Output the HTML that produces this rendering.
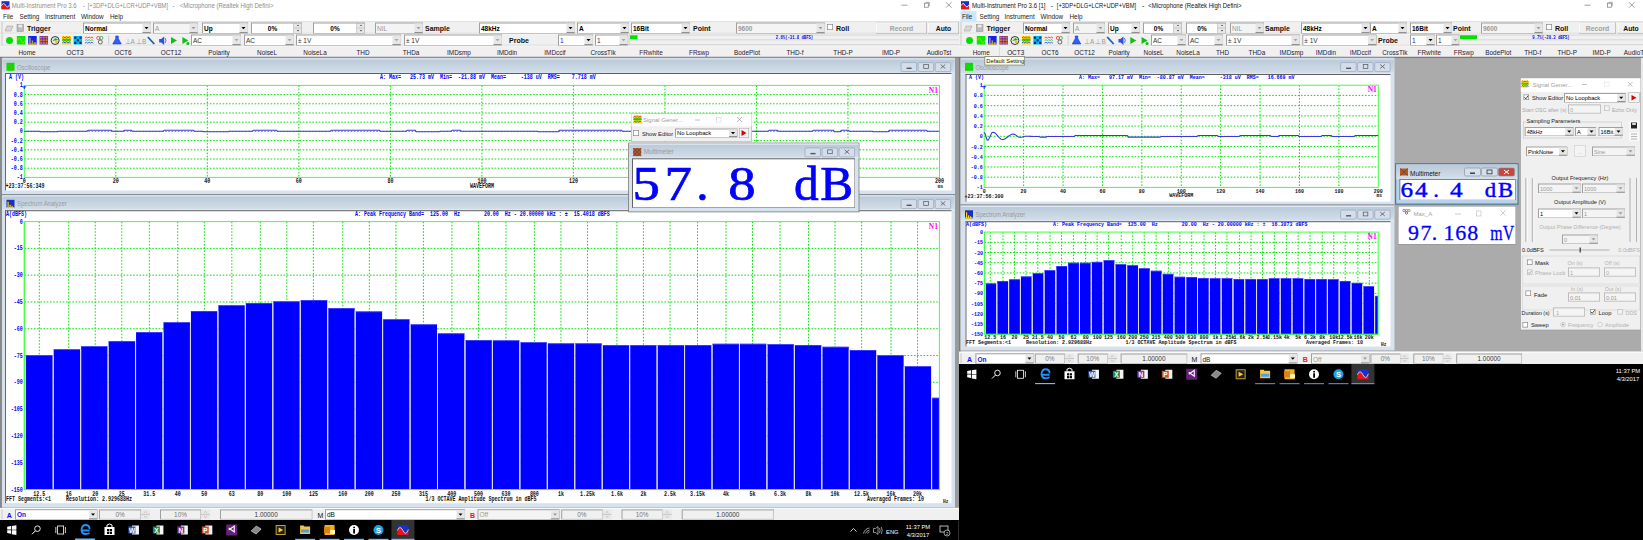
<!DOCTYPE html><html><head><meta charset="utf-8"><style>html,body{margin:0;padding:0;background:#000;overflow:hidden}svg{display:block}</style></head><body>
<svg width="1643" height="540" viewBox="0 0 1643 540">
<defs><linearGradient id="mdit" x1="0" y1="0" x2="0" y2="1"><stop offset="0" stop-color="#b9c8d7"/><stop offset="1" stop-color="#d4e0eb"/></linearGradient></defs>
<rect x="0.00" y="0.00" width="960.00" height="540.00" fill="#f0f0f0" />
<rect x="0.00" y="0.00" width="960.00" height="10.50" fill="#ffffff" />
<rect x="1.50" y="1.20" width="8.00" height="8.00" fill="#1a2fd0" />
<path d="M1.5 5.6000000000000005 Q3.5 1.6 5.5 5.2 T9.5 4.8 V9.2 H1.5 Z" fill="#e8141c"/>
<path d="M1.5 5.6000000000000005 Q3.5 1.6 5.5 5.2 T9.5 4.8" fill="none" stroke="#fff" stroke-width="0.8"/>
<text x="11.70" y="8.30" font-family='"Liberation Sans", sans-serif' font-size="7.2" fill="#8c8c8c" font-weight="normal" text-anchor="start" style="white-space:pre" textLength="65" lengthAdjust="spacingAndGlyphs">Multi-Instrument Pro 3.6</text>
<text x="82.70" y="8.30" font-family='"Liberation Sans", sans-serif' font-size="7.2" fill="#8c8c8c" font-weight="normal" text-anchor="start" style="white-space:pre" >-</text>
<text x="87.70" y="8.30" font-family='"Liberation Sans", sans-serif' font-size="7.2" fill="#8c8c8c" font-weight="normal" text-anchor="start" style="white-space:pre" textLength="80.4" lengthAdjust="spacingAndGlyphs">[+3DP+DLG+LCR+UDP+VBM]</text>
<text x="172.50" y="8.30" font-family='"Liberation Sans", sans-serif' font-size="7.2" fill="#8c8c8c" font-weight="normal" text-anchor="start" style="white-space:pre" >-</text>
<text x="179.80" y="8.30" font-family='"Liberation Sans", sans-serif' font-size="7.2" fill="#8c8c8c" font-weight="normal" text-anchor="start" style="white-space:pre" textLength="93.6" lengthAdjust="spacingAndGlyphs">&lt;Microphone (Realtek High Defini&gt;</text>
<line x1="901.50" y1="5.20" x2="907.50" y2="5.20" stroke="#777" stroke-width="0.7"/>
<rect x="924.50" y="3.20" width="3.8" height="4" fill="none" stroke="#777" stroke-width="0.7"/>
<path d="M925.50 2.3 h3.8 v3.8" fill="none" stroke="#777" stroke-width="0.6"/>
<path d="M946.00 2.2 l5.5 5.5 M951.50 2.2 l-5.5 5.5" stroke="#777" stroke-width="0.7"/>
<rect x="0.00" y="10.50" width="960.00" height="10.70" fill="#ffffff" />
<text x="3.00" y="18.60" font-family='"Liberation Sans", sans-serif' font-size="6.4" fill="#222" font-weight="normal" text-anchor="start" style="white-space:pre" >File</text>
<text x="19.50" y="18.60" font-family='"Liberation Sans", sans-serif' font-size="6.4" fill="#222" font-weight="normal" text-anchor="start" style="white-space:pre" >Setting</text>
<text x="45.00" y="18.60" font-family='"Liberation Sans", sans-serif' font-size="6.4" fill="#222" font-weight="normal" text-anchor="start" style="white-space:pre" >Instrument</text>
<text x="81.00" y="18.60" font-family='"Liberation Sans", sans-serif' font-size="6.4" fill="#222" font-weight="normal" text-anchor="start" style="white-space:pre" >Window</text>
<text x="110.00" y="18.60" font-family='"Liberation Sans", sans-serif' font-size="6.4" fill="#222" font-weight="normal" text-anchor="start" style="white-space:pre" >Help</text>
<rect x="0.00" y="21.20" width="960.00" height="36.00" fill="#f0f0f0" />
<line x1="0.00" y1="21.60" x2="960.00" y2="21.60" stroke="#dcdcdc" stroke-width="0.8"/>
<line x1="0.00" y1="33.80" x2="960.00" y2="33.80" stroke="#ffffff" stroke-width="0.8"/>
<line x1="0.00" y1="33.20" x2="960.00" y2="33.20" stroke="#d0d0d0" stroke-width="0.6"/>
<line x1="0.00" y1="45.80" x2="960.00" y2="45.80" stroke="#ffffff" stroke-width="0.8"/>
<line x1="0.00" y1="45.20" x2="960.00" y2="45.20" stroke="#d0d0d0" stroke-width="0.6"/>
<line x1="2.00" y1="22.00" x2="2.00" y2="45.00" stroke="#c0c0c0" stroke-width="0.8"/>
<path d="M5.00 31 l2 -5 h6 l-2 5 z" fill="#d8d8d8" stroke="#999" stroke-width="0.5"/>
<rect x="17.00" y="24.5" width="6.5" height="7" fill="#bbb" stroke="#888" stroke-width="0.5"/>
<rect x="18.50" y="24.80" width="3.50" height="2.50" fill="#eee" />
<text x="27.00" y="31.20" font-family='"Liberation Sans", sans-serif' font-size="7" fill="#111" font-weight="bold" text-anchor="start" style="white-space:pre" >Trigger</text>
<rect x="83.00" y="22.50" width="68.00" height="11.00" fill="#a0a0a0" />
<rect x="84.00" y="23.50" width="66.50" height="9.50" fill="#ffffff" />
<rect x="142.50" y="23.50" width="8.00" height="9.50" fill="#e6e6e6" />
<rect x="142.50" y="32.30" width="8.00" height="0.70" fill="#6a6a6a" />
<path d="M144.50 27.00 h4 l-2 2.2 z" fill="#000"/>
<text x="85.00" y="31.20" font-family='"Liberation Sans", sans-serif' font-size="6.5" fill="#000" font-weight="bold" text-anchor="start" style="white-space:pre" >Normal</text>
<rect x="153.00" y="22.50" width="45.00" height="11.00" fill="#a0a0a0" />
<rect x="154.00" y="23.50" width="43.50" height="9.50" fill="#f4f4f4" />
<rect x="189.50" y="23.50" width="8.00" height="9.50" fill="#e6e6e6" />
<rect x="189.50" y="32.30" width="8.00" height="0.70" fill="#6a6a6a" />
<path d="M191.50 27.00 h4 l-2 2.2 z" fill="#9a9a9a"/>
<text x="155.00" y="31.20" font-family='"Liberation Sans", sans-serif' font-size="6.5" fill="#9a9a9a" font-weight="normal" text-anchor="start" style="white-space:pre" >A</text>
<rect x="202.00" y="22.50" width="46.00" height="11.00" fill="#a0a0a0" />
<rect x="203.00" y="23.50" width="44.50" height="9.50" fill="#ffffff" />
<rect x="239.50" y="23.50" width="8.00" height="9.50" fill="#e6e6e6" />
<rect x="239.50" y="32.30" width="8.00" height="0.70" fill="#6a6a6a" />
<path d="M241.50 27.00 h4 l-2 2.2 z" fill="#000"/>
<text x="204.00" y="31.20" font-family='"Liberation Sans", sans-serif' font-size="6.5" fill="#000" font-weight="bold" text-anchor="start" style="white-space:pre" >Up</text>
<rect x="251.00" y="22.50" width="51.00" height="11.00" fill="#a0a0a0" />
<rect x="252.00" y="23.50" width="41.50" height="9.50" fill="#fff" />
<rect x="294.00" y="23.50" width="7.50" height="9.50" fill="#e8e8e8" />
<line x1="294.00" y1="28.00" x2="301.50" y2="28.00" stroke="#b0b0b0" stroke-width="0.6"/>
<path d="M296.70 26.10 h2.6 l-1.3 -1.3 z M296.70 30.10 h2.6 l-1.3 1.3 z" fill="#555"/>
<text x="272.50" y="31.20" font-family='"Liberation Sans", sans-serif' font-size="6.5" fill="#000" font-weight="bold" text-anchor="middle" style="white-space:pre" >0%</text>
<rect x="313.00" y="22.50" width="52.00" height="11.00" fill="#a0a0a0" />
<rect x="314.00" y="23.50" width="42.50" height="9.50" fill="#fff" />
<rect x="357.00" y="23.50" width="7.50" height="9.50" fill="#e8e8e8" />
<line x1="357.00" y1="28.00" x2="364.50" y2="28.00" stroke="#b0b0b0" stroke-width="0.6"/>
<path d="M359.70 26.10 h2.6 l-1.3 -1.3 z M359.70 30.10 h2.6 l-1.3 1.3 z" fill="#555"/>
<text x="335.00" y="31.20" font-family='"Liberation Sans", sans-serif' font-size="6.5" fill="#000" font-weight="bold" text-anchor="middle" style="white-space:pre" >0%</text>
<rect x="375.00" y="22.50" width="48.00" height="11.00" fill="#a0a0a0" />
<rect x="376.00" y="23.50" width="46.50" height="9.50" fill="#f4f4f4" />
<rect x="414.50" y="23.50" width="8.00" height="9.50" fill="#e6e6e6" />
<rect x="414.50" y="32.30" width="8.00" height="0.70" fill="#6a6a6a" />
<path d="M416.50 27.00 h4 l-2 2.2 z" fill="#9a9a9a"/>
<text x="377.00" y="31.20" font-family='"Liberation Sans", sans-serif' font-size="6.5" fill="#9a9a9a" font-weight="normal" text-anchor="start" style="white-space:pre" >NIL</text>
<text x="425.00" y="31.20" font-family='"Liberation Sans", sans-serif' font-size="7" fill="#111" font-weight="bold" text-anchor="start" style="white-space:pre" >Sample</text>
<rect x="479.00" y="22.50" width="96.00" height="11.00" fill="#a0a0a0" />
<rect x="480.00" y="23.50" width="94.50" height="9.50" fill="#ffffff" />
<rect x="566.50" y="23.50" width="8.00" height="9.50" fill="#e6e6e6" />
<rect x="566.50" y="32.30" width="8.00" height="0.70" fill="#6a6a6a" />
<path d="M568.50 27.00 h4 l-2 2.2 z" fill="#000"/>
<text x="481.00" y="31.20" font-family='"Liberation Sans", sans-serif' font-size="6.5" fill="#000" font-weight="bold" text-anchor="start" style="white-space:pre" >48kHz</text>
<rect x="577.00" y="22.50" width="52.00" height="11.00" fill="#a0a0a0" />
<rect x="578.00" y="23.50" width="50.50" height="9.50" fill="#ffffff" />
<rect x="620.50" y="23.50" width="8.00" height="9.50" fill="#e6e6e6" />
<rect x="620.50" y="32.30" width="8.00" height="0.70" fill="#6a6a6a" />
<path d="M622.50 27.00 h4 l-2 2.2 z" fill="#000"/>
<text x="579.00" y="31.20" font-family='"Liberation Sans", sans-serif' font-size="6.5" fill="#000" font-weight="bold" text-anchor="start" style="white-space:pre" >A</text>
<rect x="631.00" y="22.50" width="59.00" height="11.00" fill="#a0a0a0" />
<rect x="632.00" y="23.50" width="57.50" height="9.50" fill="#ffffff" />
<rect x="681.50" y="23.50" width="8.00" height="9.50" fill="#e6e6e6" />
<rect x="681.50" y="32.30" width="8.00" height="0.70" fill="#6a6a6a" />
<path d="M683.50 27.00 h4 l-2 2.2 z" fill="#000"/>
<text x="633.00" y="31.20" font-family='"Liberation Sans", sans-serif' font-size="6.5" fill="#000" font-weight="bold" text-anchor="start" style="white-space:pre" >16Bit</text>
<text x="693.00" y="31.20" font-family='"Liberation Sans", sans-serif' font-size="7" fill="#111" font-weight="bold" text-anchor="start" style="white-space:pre" >Point</text>
<rect x="736.00" y="22.50" width="89.00" height="11.00" fill="#a0a0a0" />
<rect x="737.00" y="23.50" width="87.50" height="9.50" fill="#f4f4f4" />
<rect x="816.50" y="23.50" width="8.00" height="9.50" fill="#e6e6e6" />
<rect x="816.50" y="32.30" width="8.00" height="0.70" fill="#6a6a6a" />
<path d="M818.50 27.00 h4 l-2 2.2 z" fill="#9a9a9a"/>
<text x="738.00" y="31.20" font-family='"Liberation Sans", sans-serif' font-size="6.5" fill="#9a9a9a" font-weight="bold" text-anchor="start" style="white-space:pre" >9600</text>
<rect x="827.00" y="24.00" width="6.00" height="6.00" fill="#888" />
<rect x="827.70" y="24.70" width="4.60" height="4.60" fill="#fff" />
<text x="836.00" y="30.50" font-family='"Liberation Sans", sans-serif' font-size="7" fill="#111" font-weight="bold" text-anchor="start" style="white-space:pre" >Roll</text>
<rect x="876.00" y="22.50" width="51.00" height="11.00" fill="#a8a8a8" />
<rect x="876.00" y="22.50" width="50.20" height="10.20" fill="#fdfdfd" />
<rect x="876.80" y="23.30" width="49.40" height="9.40" fill="#f0f0f0" />
<text x="901.50" y="31.00" font-family='"Liberation Sans", sans-serif' font-size="6.8" fill="#a0a0a0" font-weight="bold" text-anchor="middle" style="white-space:pre" >Record</text>
<rect x="928.00" y="22.50" width="31.00" height="11.00" fill="#a8a8a8" />
<rect x="928.00" y="22.50" width="30.20" height="10.20" fill="#fdfdfd" />
<rect x="928.80" y="23.30" width="29.40" height="9.40" fill="#f0f0f0" />
<text x="943.50" y="31.00" font-family='"Liberation Sans", sans-serif' font-size="6.8" fill="#111" font-weight="bold" text-anchor="middle" style="white-space:pre" >Auto</text>
<circle cx="9.5" cy="40.5" r="3.5" fill="#00dd00"/>
<rect x="16.85" y="36.00" width="8.50" height="8.50" fill="#00f000" />
<path d="M17.150000000000002 40.5 q2 -4.5 3.9 0 t3.9 0" fill="none" stroke="#c8c800" stroke-width="0.8"/>
<rect x="28.20" y="36.00" width="8.50" height="8.50" fill="#1020f0" />
<rect x="29.20" y="37.50" width="1.50" height="6.50" fill="#b0a040" />
<rect x="31.70" y="40.50" width="1.50" height="3.50" fill="#b0a040" />
<rect x="34.20" y="42.00" width="1.50" height="2.00" fill="#b0a040" />
<rect x="28.20" y="43.60" width="8.50" height="0.90" fill="#f0d000" />
<rect x="39.55" y="36.00" width="8.50" height="8.50" fill="#7a2a90" />
<circle cx="41.05" cy="37.50" r="1.1" fill="#d08030"/>
<circle cx="41.05" cy="40.25" r="1.1" fill="#d08030"/>
<circle cx="41.05" cy="43.00" r="1.1" fill="#d08030"/>
<circle cx="43.80" cy="37.50" r="1.1" fill="#d08030"/>
<circle cx="43.80" cy="40.25" r="1.1" fill="#d08030"/>
<circle cx="43.80" cy="43.00" r="1.1" fill="#d08030"/>
<circle cx="46.55" cy="37.50" r="1.1" fill="#d08030"/>
<circle cx="46.55" cy="40.25" r="1.1" fill="#d08030"/>
<circle cx="46.55" cy="43.00" r="1.1" fill="#d08030"/>
<circle cx="55.10000000000001" cy="40.5" r="4" fill="#e8e8e8" stroke="#222" stroke-width="0.9"/>
<path d="M52.400000000000006 41.0 l3 -3 l3 2 z" fill="#20b020"/><circle cx="56.400000000000006" cy="42.0" r="1.3" fill="#f0c000"/>
<rect x="62.25" y="36.00" width="8.50" height="8.50" fill="#ffe000" />
<path d="M62.25000000000001 38.0 l1.4 -1.2 l1.4 1.2 l1.4 -1.2 l1.4 1.2 l1.4 -1.2 l1.4 1.2" stroke="#ff2020" stroke-width="0.9" fill="none"/>
<path d="M62.25000000000001 40.5 l1.4 -1.2 l1.4 1.2 l1.4 -1.2 l1.4 1.2 l1.4 -1.2 l1.4 1.2" stroke="#20c020" stroke-width="1.6" fill="none"/>
<path d="M62.25000000000001 43.0 l1.4 -1.2 l1.4 1.2 l1.4 -1.2 l1.4 1.2 l1.4 -1.2 l1.4 1.2" stroke="#2040ff" stroke-width="0.9" fill="none"/>
<rect x="73.60" y="36.00" width="8.50" height="8.50" fill="#00b8f8" />
<rect x="74.20" y="36.60" width="2.20" height="2.20" fill="#003060" />
<rect x="74.20" y="41.80" width="2.20" height="2.20" fill="#003060" />
<rect x="76.80" y="39.20" width="2.20" height="2.20" fill="#003060" />
<rect x="79.40" y="36.60" width="2.20" height="2.20" fill="#003060" />
<rect x="79.40" y="41.80" width="2.20" height="2.20" fill="#003060" />
<path d="M84.95 38.00 l1.4 -1 l1.4 1 l1.4 -1 l1.4 1 l1.4 -1 l1.4 1" stroke="#ff2020" stroke-width="0.8" fill="none"/>
<path d="M84.95 40.60 l1.4 -1 l1.4 1 l1.4 -1 l1.4 1 l1.4 -1 l1.4 1" stroke="#20c020" stroke-width="0.8" fill="none"/>
<path d="M84.95 43.20 l1.4 -1 l1.4 1 l1.4 -1 l1.4 1 l1.4 -1 l1.4 1" stroke="#2040ff" stroke-width="0.8" fill="none"/>
<circle cx="98.3" cy="38.0" r="1.6" fill="none" stroke="#e02020" stroke-width="0.7"/><circle cx="101.3" cy="38.0" r="1.6" fill="none" stroke="#20a020" stroke-width="0.7"/><circle cx="100.3" cy="42.0" r="2" fill="none" stroke="#333" stroke-width="0.7"/>
<line x1="108.65" y1="35.50" x2="108.65" y2="44.50" stroke="#c8c8c8" stroke-width="0.8"/>
<path d="M115.7575 36.0 h2.5 v2.5 l3 5.5 h-8.5 l3 -5.5 z" fill="#3060ff" stroke="#0020a0" stroke-width="0.5"/>
<text x="124.61" y="44.00" font-family='"Liberation Sans", sans-serif' font-size="6.5" fill="#999" font-weight="normal" text-anchor="start" style="white-space:pre" >⊥A</text>
<text x="135.96" y="44.00" font-family='"Liberation Sans", sans-serif' font-size="6.5" fill="#999" font-weight="normal" text-anchor="start" style="white-space:pre" >⊥B</text>
<path d="M147.80749999999998 37.0 l6.5 7" stroke="#1060c0" stroke-width="1.8"/>
<path d="M159.15749999999997 39.0 h2 l3 -2.5 v8.5 l-3 -2.5 h-2 z" fill="#3050e0"/><path d="M165.15749999999997 38.0 q1.5 2.5 0 5" stroke="#3050e0" stroke-width="0.8" fill="none"/>
<path d="M171.00749999999996 37.0 l6 3.5 l-6 3.5 z" fill="#10c010"/>
<path d="M182.35749999999996 37.0 l6 3.5 l-6 3.5 z" fill="#10c010"/><circle cx="187.85749999999996" cy="43.5" r="1.5" fill="#10c010"/>
<rect x="191.00" y="34.50" width="50.00" height="11.00" fill="#a0a0a0" />
<rect x="192.00" y="35.50" width="48.50" height="9.50" fill="#ffffff" />
<rect x="232.50" y="35.50" width="8.00" height="9.50" fill="#e6e6e6" />
<rect x="232.50" y="44.30" width="8.00" height="0.70" fill="#6a6a6a" />
<path d="M234.50 39.00 h4 l-2 2.2 z" fill="#a8a8a8"/>
<text x="193.00" y="43.20" font-family='"Liberation Sans", sans-serif' font-size="6.5" fill="#333" font-weight="normal" text-anchor="start" style="white-space:pre" >AC</text>
<rect x="244.00" y="34.50" width="50.00" height="11.00" fill="#a0a0a0" />
<rect x="245.00" y="35.50" width="48.50" height="9.50" fill="#ffffff" />
<rect x="285.50" y="35.50" width="8.00" height="9.50" fill="#e6e6e6" />
<rect x="285.50" y="44.30" width="8.00" height="0.70" fill="#6a6a6a" />
<path d="M287.50 39.00 h4 l-2 2.2 z" fill="#a8a8a8"/>
<text x="246.00" y="43.20" font-family='"Liberation Sans", sans-serif' font-size="6.5" fill="#333" font-weight="normal" text-anchor="start" style="white-space:pre" >AC</text>
<rect x="296.00" y="34.50" width="105.00" height="11.00" fill="#a0a0a0" />
<rect x="297.00" y="35.50" width="103.50" height="9.50" fill="#ffffff" />
<rect x="392.50" y="35.50" width="8.00" height="9.50" fill="#e6e6e6" />
<rect x="392.50" y="44.30" width="8.00" height="0.70" fill="#6a6a6a" />
<path d="M394.50 39.00 h4 l-2 2.2 z" fill="#a8a8a8"/>
<text x="298.00" y="43.20" font-family='"Liberation Sans", sans-serif' font-size="6.5" fill="#333" font-weight="normal" text-anchor="start" style="white-space:pre" >± 1V</text>
<rect x="404.00" y="34.50" width="98.00" height="11.00" fill="#a0a0a0" />
<rect x="405.00" y="35.50" width="96.50" height="9.50" fill="#ffffff" />
<rect x="493.50" y="35.50" width="8.00" height="9.50" fill="#e6e6e6" />
<rect x="493.50" y="44.30" width="8.00" height="0.70" fill="#6a6a6a" />
<path d="M495.50 39.00 h4 l-2 2.2 z" fill="#a8a8a8"/>
<text x="406.00" y="43.20" font-family='"Liberation Sans", sans-serif' font-size="6.5" fill="#333" font-weight="normal" text-anchor="start" style="white-space:pre" >± 1V</text>
<text x="509.00" y="43.00" font-family='"Liberation Sans", sans-serif' font-size="7" fill="#111" font-weight="bold" text-anchor="start" style="white-space:pre" >Probe</text>
<rect x="558.00" y="34.50" width="35.00" height="11.00" fill="#a0a0a0" />
<rect x="559.00" y="35.50" width="33.50" height="9.50" fill="#ffffff" />
<rect x="584.50" y="35.50" width="8.00" height="9.50" fill="#e6e6e6" />
<rect x="584.50" y="44.30" width="8.00" height="0.70" fill="#6a6a6a" />
<path d="M586.50 39.00 h4 l-2 2.2 z" fill="#000"/>
<text x="560.00" y="43.20" font-family='"Liberation Sans", sans-serif' font-size="6.5" fill="#1010e0" font-weight="normal" text-anchor="start" style="white-space:pre" >1</text>
<rect x="595.00" y="34.50" width="33.00" height="11.00" fill="#a0a0a0" />
<rect x="596.00" y="35.50" width="31.50" height="9.50" fill="#ffffff" />
<rect x="619.50" y="35.50" width="8.00" height="9.50" fill="#e6e6e6" />
<rect x="619.50" y="44.30" width="8.00" height="0.70" fill="#6a6a6a" />
<path d="M621.50 39.00 h4 l-2 2.2 z" fill="#a8a8a8"/>
<text x="597.00" y="43.20" font-family='"Liberation Sans", sans-serif' font-size="6.5" fill="#333" font-weight="normal" text-anchor="start" style="white-space:pre" >1</text>
<rect x="629.00" y="34.50" width="331.00" height="11.00" fill="#f0f0f0" />
<line x1="629.00" y1="35.00" x2="960.00" y2="35.00" stroke="#c8c8c8" stroke-width="0.6"/>
<line x1="629.00" y1="39.80" x2="960.00" y2="39.80" stroke="#c8c8c8" stroke-width="0.6"/>
<line x1="629.00" y1="44.50" x2="960.00" y2="44.50" stroke="#c8c8c8" stroke-width="0.6"/>
<line x1="629.00" y1="34.50" x2="629.00" y2="45.00" stroke="#b8b8b8" stroke-width="0.6"/>
<rect x="630.00" y="35.30" width="7.50" height="3.80" fill="#00e000" />
<g transform="translate(794.50,39.3) scale(0.75,1)">
<text x="0.00" y="0.00" font-family='"Liberation Mono", monospace' font-size="5.2" fill="#0000e0" font-weight="bold" text-anchor="middle" style="white-space:pre" >2.6%(-31.8 dBFS)</text>
</g>
<text x="27.00" y="54.60" font-family='"Liberation Sans", sans-serif' font-size="6.4" fill="#3a1a08" font-weight="normal" text-anchor="middle" style="white-space:pre" >Home</text>
<text x="75.00" y="54.60" font-family='"Liberation Sans", sans-serif' font-size="6.4" fill="#141430" font-weight="normal" text-anchor="middle" style="white-space:pre" >OCT3</text>
<text x="123.00" y="54.60" font-family='"Liberation Sans", sans-serif' font-size="6.4" fill="#141430" font-weight="normal" text-anchor="middle" style="white-space:pre" >OCT6</text>
<text x="171.00" y="54.60" font-family='"Liberation Sans", sans-serif' font-size="6.4" fill="#141430" font-weight="normal" text-anchor="middle" style="white-space:pre" >OCT12</text>
<text x="219.00" y="54.60" font-family='"Liberation Sans", sans-serif' font-size="6.4" fill="#181840" font-weight="normal" text-anchor="middle" style="white-space:pre" >Polarity</text>
<text x="267.00" y="54.60" font-family='"Liberation Sans", sans-serif' font-size="6.4" fill="#181840" font-weight="normal" text-anchor="middle" style="white-space:pre" >NoiseL</text>
<text x="315.00" y="54.60" font-family='"Liberation Sans", sans-serif' font-size="6.4" fill="#401808" font-weight="normal" text-anchor="middle" style="white-space:pre" >NoiseLa</text>
<text x="363.00" y="54.60" font-family='"Liberation Sans", sans-serif' font-size="6.4" fill="#181848" font-weight="normal" text-anchor="middle" style="white-space:pre" >THD</text>
<text x="411.00" y="54.60" font-family='"Liberation Sans", sans-serif' font-size="6.4" fill="#202040" font-weight="normal" text-anchor="middle" style="white-space:pre" >THDa</text>
<text x="459.00" y="54.60" font-family='"Liberation Sans", sans-serif' font-size="6.4" fill="#181848" font-weight="normal" text-anchor="middle" style="white-space:pre" >IMDsmp</text>
<text x="507.00" y="54.60" font-family='"Liberation Sans", sans-serif' font-size="6.4" fill="#202040" font-weight="normal" text-anchor="middle" style="white-space:pre" >IMDdin</text>
<text x="555.00" y="54.60" font-family='"Liberation Sans", sans-serif' font-size="6.4" fill="#301830" font-weight="normal" text-anchor="middle" style="white-space:pre" >IMDccif</text>
<text x="603.00" y="54.60" font-family='"Liberation Sans", sans-serif' font-size="6.4" fill="#202038" font-weight="normal" text-anchor="middle" style="white-space:pre" >CrossTlk</text>
<text x="651.00" y="54.60" font-family='"Liberation Sans", sans-serif' font-size="6.4" fill="#402020" font-weight="normal" text-anchor="middle" style="white-space:pre" >FRwhite</text>
<text x="699.00" y="54.60" font-family='"Liberation Sans", sans-serif' font-size="6.4" fill="#301830" font-weight="normal" text-anchor="middle" style="white-space:pre" >FRswp</text>
<text x="747.00" y="54.60" font-family='"Liberation Sans", sans-serif' font-size="6.4" fill="#181830" font-weight="normal" text-anchor="middle" style="white-space:pre" >BodePlot</text>
<text x="795.00" y="54.60" font-family='"Liberation Sans", sans-serif' font-size="6.4" fill="#181830" font-weight="normal" text-anchor="middle" style="white-space:pre" >THD-f</text>
<text x="843.00" y="54.60" font-family='"Liberation Sans", sans-serif' font-size="6.4" fill="#181830" font-weight="normal" text-anchor="middle" style="white-space:pre" >THD-P</text>
<text x="891.00" y="54.60" font-family='"Liberation Sans", sans-serif' font-size="6.4" fill="#202030" font-weight="normal" text-anchor="middle" style="white-space:pre" >IMD-P</text>
<text x="939.00" y="54.60" font-family='"Liberation Sans", sans-serif' font-size="6.4" fill="#182030" font-weight="normal" text-anchor="middle" style="white-space:pre" >AudioTst</text>
<rect x="0.00" y="56.80" width="960.00" height="1.10" fill="#5c5c5c" />
<rect x="0.00" y="57.80" width="960.00" height="450.50" fill="#ababab" />
<rect x="0.00" y="57.80" width="2.00" height="450.00" fill="#8a8a8a" />
<rect x="955.00" y="57.80" width="4.00" height="449.00" fill="#9a9a9a" />
<rect x="2.00" y="57.80" width="953.00" height="136.70" fill="#d6e2ee" />
<line x1="2.00" y1="58.20" x2="955.00" y2="58.20" stroke="#9aa8b8" stroke-width="0.8"/>
<rect x="2.50" y="58.30" width="952.00" height="15.50" fill="url(#mdit)" />
<rect x="2.50" y="58.30" width="952.00" height="1.20" fill="#dfe8f3" />
<rect x="2.50" y="72.60" width="952.00" height="1.20" fill="#deeaf6" />
<rect x="6.50" y="62.80" width="8.00" height="8.00" fill="#00e000" />
<path d="M7.0 66.8 q2 -4 3.5 0 t3.5 0" fill="none" stroke="#a0a000" stroke-width="0.8"/>
<text x="17.00" y="69.60" font-family='"Liberation Sans", sans-serif' font-size="7" fill="#9a9a9a" font-weight="normal" text-anchor="start" style="white-space:pre" textLength="33.3" lengthAdjust="spacingAndGlyphs">Oscilloscope</text>
<rect x="901.10" y="62.60" width="15.5" height="9" rx="1.2" fill="#d3deea" stroke="#8a9bb0" stroke-width="0.6"/>
<rect x="906.60" y="67.60" width="5.00" height="1.40" fill="#555" />
<rect x="918.15" y="62.60" width="15.5" height="9" rx="1.2" fill="#d3deea" stroke="#8a9bb0" stroke-width="0.6"/>
<rect x="923.75" y="64.60" width="4.6" height="3.8" fill="none" stroke="#555" stroke-width="0.7"/>
<rect x="935.20" y="62.60" width="15.5" height="9" rx="1.2" fill="#d3deea" stroke="#8a9bb0" stroke-width="0.6"/>
<path d="M940.70 64.50 l4.6 4 M945.30 64.50 l-4.6 4" stroke="#555" stroke-width="0.8"/>
<rect x="5.00" y="73.00" width="946.50" height="117.50" fill="#ffffff" />
<rect x="5.00" y="73.00" width="946.50" height="1.00" fill="#5e5e5e" />
<rect x="5.00" y="73.00" width="1.00" height="117.50" fill="#6a6a6a" />
<line x1="115.82" y1="85.40" x2="115.82" y2="177.40" stroke="#00e600" stroke-width="1" stroke-dasharray="1.6 1.6"/>
<line x1="207.34" y1="85.40" x2="207.34" y2="177.40" stroke="#00e600" stroke-width="1" stroke-dasharray="1.6 1.6"/>
<line x1="298.86" y1="85.40" x2="298.86" y2="177.40" stroke="#00e600" stroke-width="1" stroke-dasharray="1.6 1.6"/>
<line x1="390.38" y1="85.40" x2="390.38" y2="177.40" stroke="#00e600" stroke-width="1" stroke-dasharray="1.6 1.6"/>
<line x1="481.90" y1="85.40" x2="481.90" y2="177.40" stroke="#00e600" stroke-width="1" stroke-dasharray="1.6 1.6"/>
<line x1="573.42" y1="85.40" x2="573.42" y2="177.40" stroke="#00e600" stroke-width="1" stroke-dasharray="1.6 1.6"/>
<line x1="664.94" y1="85.40" x2="664.94" y2="177.40" stroke="#00e600" stroke-width="1" stroke-dasharray="1.6 1.6"/>
<line x1="756.46" y1="85.40" x2="756.46" y2="177.40" stroke="#00e600" stroke-width="1" stroke-dasharray="1.6 1.6"/>
<line x1="847.98" y1="85.40" x2="847.98" y2="177.40" stroke="#00e600" stroke-width="1" stroke-dasharray="1.6 1.6"/>
<line x1="24.30" y1="94.60" x2="939.50" y2="94.60" stroke="#00e600" stroke-width="1" stroke-dasharray="1.6 1.6"/>
<line x1="24.30" y1="103.80" x2="939.50" y2="103.80" stroke="#00e600" stroke-width="1" stroke-dasharray="1.6 1.6"/>
<line x1="24.30" y1="113.00" x2="939.50" y2="113.00" stroke="#00e600" stroke-width="1" stroke-dasharray="1.6 1.6"/>
<line x1="24.30" y1="122.20" x2="939.50" y2="122.20" stroke="#00e600" stroke-width="1" stroke-dasharray="1.6 1.6"/>
<line x1="24.30" y1="131.40" x2="939.50" y2="131.40" stroke="#00e600" stroke-width="1" stroke-dasharray="1.6 1.6"/>
<line x1="24.30" y1="140.60" x2="939.50" y2="140.60" stroke="#00e600" stroke-width="1" stroke-dasharray="1.6 1.6"/>
<line x1="24.30" y1="149.80" x2="939.50" y2="149.80" stroke="#00e600" stroke-width="1" stroke-dasharray="1.6 1.6"/>
<line x1="24.30" y1="159.00" x2="939.50" y2="159.00" stroke="#00e600" stroke-width="1" stroke-dasharray="1.6 1.6"/>
<line x1="24.30" y1="168.20" x2="939.50" y2="168.20" stroke="#00e600" stroke-width="1" stroke-dasharray="1.6 1.6"/>
<rect x="24.30" y="85.40" width="915.20" height="92.00" fill="none" stroke="#40ff40" stroke-width="1"/>
<g transform="translate(9.00,78.90) scale(0.746,1)">
<text x="0.00" y="0.00" font-family='"Liberation Mono", monospace' font-size="6.7" fill="#0000ff" font-weight="bold" text-anchor="start" style="white-space:pre" >A (V)</text>
</g>
<g transform="translate(380.00,78.90) scale(0.746,1)">
<text x="0.00" y="0.00" font-family='"Liberation Mono", monospace' font-size="6.7" fill="#0000ff" font-weight="bold" text-anchor="start" style="white-space:pre" >A: Max=   25.73 mV  Min=  -21.88 mV  Mean=     -138 uV  RMS=    7.718 mV</text>
</g>
<g transform="translate(22.80,87.40) scale(0.746,1)">
<text x="0.00" y="0.00" font-family='"Liberation Mono", monospace' font-size="6.7" fill="#0000ff" font-weight="bold" text-anchor="end" style="white-space:pre" >1</text>
</g>
<g transform="translate(22.80,96.60) scale(0.746,1)">
<text x="0.00" y="0.00" font-family='"Liberation Mono", monospace' font-size="6.7" fill="#0000ff" font-weight="bold" text-anchor="end" style="white-space:pre" >0.8</text>
</g>
<g transform="translate(22.80,105.80) scale(0.746,1)">
<text x="0.00" y="0.00" font-family='"Liberation Mono", monospace' font-size="6.7" fill="#0000ff" font-weight="bold" text-anchor="end" style="white-space:pre" >0.6</text>
</g>
<g transform="translate(22.80,115.00) scale(0.746,1)">
<text x="0.00" y="0.00" font-family='"Liberation Mono", monospace' font-size="6.7" fill="#0000ff" font-weight="bold" text-anchor="end" style="white-space:pre" >0.4</text>
</g>
<g transform="translate(22.80,124.20) scale(0.746,1)">
<text x="0.00" y="0.00" font-family='"Liberation Mono", monospace' font-size="6.7" fill="#0000ff" font-weight="bold" text-anchor="end" style="white-space:pre" >0.2</text>
</g>
<g transform="translate(22.80,133.40) scale(0.746,1)">
<text x="0.00" y="0.00" font-family='"Liberation Mono", monospace' font-size="6.7" fill="#0000ff" font-weight="bold" text-anchor="end" style="white-space:pre" >0</text>
</g>
<g transform="translate(22.80,142.60) scale(0.746,1)">
<text x="0.00" y="0.00" font-family='"Liberation Mono", monospace' font-size="6.7" fill="#0000ff" font-weight="bold" text-anchor="end" style="white-space:pre" >-0.2</text>
</g>
<g transform="translate(22.80,151.80) scale(0.746,1)">
<text x="0.00" y="0.00" font-family='"Liberation Mono", monospace' font-size="6.7" fill="#0000ff" font-weight="bold" text-anchor="end" style="white-space:pre" >-0.4</text>
</g>
<g transform="translate(22.80,161.00) scale(0.746,1)">
<text x="0.00" y="0.00" font-family='"Liberation Mono", monospace' font-size="6.7" fill="#0000ff" font-weight="bold" text-anchor="end" style="white-space:pre" >-0.6</text>
</g>
<g transform="translate(22.80,170.20) scale(0.746,1)">
<text x="0.00" y="0.00" font-family='"Liberation Mono", monospace' font-size="6.7" fill="#0000ff" font-weight="bold" text-anchor="end" style="white-space:pre" >-0.8</text>
</g>
<g transform="translate(22.80,179.40) scale(0.746,1)">
<text x="0.00" y="0.00" font-family='"Liberation Mono", monospace' font-size="6.7" fill="#0000ff" font-weight="bold" text-anchor="end" style="white-space:pre" >-1</text>
</g>
<g transform="translate(24.30,183.30) scale(0.746,1)">
<text x="0.00" y="0.00" font-family='"Liberation Mono", monospace' font-size="6.7" fill="#111" font-weight="bold" text-anchor="middle" style="white-space:pre" >0</text>
</g>
<g transform="translate(115.82,183.30) scale(0.746,1)">
<text x="0.00" y="0.00" font-family='"Liberation Mono", monospace' font-size="6.7" fill="#111" font-weight="bold" text-anchor="middle" style="white-space:pre" >20</text>
</g>
<g transform="translate(207.34,183.30) scale(0.746,1)">
<text x="0.00" y="0.00" font-family='"Liberation Mono", monospace' font-size="6.7" fill="#111" font-weight="bold" text-anchor="middle" style="white-space:pre" >40</text>
</g>
<g transform="translate(298.86,183.30) scale(0.746,1)">
<text x="0.00" y="0.00" font-family='"Liberation Mono", monospace' font-size="6.7" fill="#111" font-weight="bold" text-anchor="middle" style="white-space:pre" >60</text>
</g>
<g transform="translate(390.38,183.30) scale(0.746,1)">
<text x="0.00" y="0.00" font-family='"Liberation Mono", monospace' font-size="6.7" fill="#111" font-weight="bold" text-anchor="middle" style="white-space:pre" >80</text>
</g>
<g transform="translate(481.90,183.30) scale(0.746,1)">
<text x="0.00" y="0.00" font-family='"Liberation Mono", monospace' font-size="6.7" fill="#111" font-weight="bold" text-anchor="middle" style="white-space:pre" >100</text>
</g>
<g transform="translate(573.42,183.30) scale(0.746,1)">
<text x="0.00" y="0.00" font-family='"Liberation Mono", monospace' font-size="6.7" fill="#111" font-weight="bold" text-anchor="middle" style="white-space:pre" >120</text>
</g>
<g transform="translate(664.94,183.30) scale(0.746,1)">
<text x="0.00" y="0.00" font-family='"Liberation Mono", monospace' font-size="6.7" fill="#111" font-weight="bold" text-anchor="middle" style="white-space:pre" >140</text>
</g>
<g transform="translate(756.46,183.30) scale(0.746,1)">
<text x="0.00" y="0.00" font-family='"Liberation Mono", monospace' font-size="6.7" fill="#111" font-weight="bold" text-anchor="middle" style="white-space:pre" >160</text>
</g>
<g transform="translate(847.98,183.30) scale(0.746,1)">
<text x="0.00" y="0.00" font-family='"Liberation Mono", monospace' font-size="6.7" fill="#111" font-weight="bold" text-anchor="middle" style="white-space:pre" >180</text>
</g>
<g transform="translate(939.50,183.30) scale(0.746,1)">
<text x="0.00" y="0.00" font-family='"Liberation Mono", monospace' font-size="6.7" fill="#111" font-weight="bold" text-anchor="middle" style="white-space:pre" >200</text>
</g>
<g transform="translate(5.50,188.20) scale(0.746,1)">
<text x="0.00" y="0.00" font-family='"Liberation Mono", monospace' font-size="6.7" fill="#111" font-weight="bold" text-anchor="start" style="white-space:pre" >+23:37:56:349</text>
</g>
<g transform="translate(481.90,187.50) scale(0.746,1)">
<text x="0.00" y="0.00" font-family='"Liberation Mono", monospace' font-size="6.7" fill="#111" font-weight="bold" text-anchor="middle" style="white-space:pre" >WAVEFORM</text>
</g>
<g transform="translate(940.50,187.50) scale(0.746,1)">
<text x="0.00" y="0.00" font-family='"Liberation Mono", monospace' font-size="6.03" fill="#111" font-weight="bold" text-anchor="middle" style="white-space:pre" >ms</text>
</g>
<text x="938.00" y="92.60" font-family='"Liberation Serif", serif' font-size="7.5" fill="#ff00ff" font-weight="bold" text-anchor="end" style="white-space:pre" >N1</text>
<polyline points="24.3,131.20 25.3,131.20 26.3,131.20 27.3,131.20 28.3,131.20 29.3,131.20 30.3,131.20 31.3,131.20 32.3,131.20 33.3,131.20 34.3,131.20 35.3,131.20 36.3,131.20 37.3,131.20 38.3,131.20 39.3,131.20 40.3,131.80 41.3,131.80 42.3,131.80 43.3,131.80 44.3,131.80 45.3,131.80 46.3,131.80 47.3,131.80 48.3,131.80 49.3,131.80 50.3,131.80 51.3,131.80 52.3,131.80 53.3,131.80 54.3,131.80 55.3,131.80 56.3,131.80 57.3,131.80 58.3,131.20 59.3,131.20 60.3,131.20 61.3,131.20 62.3,131.20 63.3,131.20 64.3,131.20 65.3,131.20 66.3,131.20 67.3,131.20 68.3,131.20 69.3,131.20 70.3,131.20 71.3,131.20 72.3,131.20 73.3,131.20 74.3,131.20 75.3,131.20 76.3,131.20 77.3,131.20 78.3,131.20 79.3,131.20 80.3,131.20 81.3,131.20 82.3,131.20 83.3,131.20 84.3,131.20 85.3,131.20 86.3,131.20 87.3,131.20 88.3,130.20 89.3,130.20 90.3,130.20 91.3,130.20 92.3,130.20 93.3,130.20 94.3,130.20 95.3,130.20 96.3,130.20 97.3,130.20 98.3,130.20 99.3,130.20 100.3,130.20 101.3,130.20 102.3,130.20 103.3,130.20 104.3,130.20 105.3,130.20 106.3,130.20 107.3,130.20 108.3,130.20 109.3,130.20 110.3,130.20 111.3,130.20 112.3,131.20 113.3,131.20 114.3,131.20 115.3,131.20 116.3,131.20 117.3,131.20 118.3,131.20 119.3,131.20 120.3,131.20 121.3,131.20 122.3,131.20 123.3,131.20 124.3,130.20 125.3,130.20 126.3,130.20 127.3,130.20 128.3,130.20 129.3,130.20 130.3,130.20 131.3,130.20 132.3,131.20 133.3,131.20 134.3,131.20 135.3,131.20 136.3,131.20 137.3,131.20 138.3,131.20 139.3,131.20 140.3,131.20 141.3,131.20 142.3,131.20 143.3,131.20 144.3,131.20 145.3,131.20 146.3,131.20 147.3,131.20 148.3,131.20 149.3,131.20 150.3,131.20 151.3,131.20 152.3,131.20 153.3,131.20 154.3,131.20 155.3,131.20 156.3,131.20 157.3,131.20 158.3,131.20 159.3,131.20 160.3,131.20 161.3,131.20 162.3,131.20 163.3,131.20 164.3,130.20 165.3,130.20 166.3,130.20 167.3,130.20 168.3,130.20 169.3,130.20 170.3,130.20 171.3,130.20 172.3,130.20 173.3,130.20 174.3,130.20 175.3,130.20 176.3,130.20 177.3,130.20 178.3,130.20 179.3,130.20 180.3,130.20 181.3,130.20 182.3,130.20 183.3,130.20 184.3,130.20 185.3,130.20 186.3,130.20 187.3,130.20 188.3,130.20 189.3,130.20 190.3,130.20 191.3,130.20 192.3,130.20 193.3,130.20 194.3,131.20 195.3,131.20 196.3,131.20 197.3,131.20 198.3,131.20 199.3,131.20 200.3,131.20 201.3,131.20 202.3,131.20 203.3,131.80 204.3,131.80 205.3,131.80 206.3,131.80 207.3,131.80 208.3,131.80 209.3,131.80 210.3,131.80 211.3,131.80 212.3,131.80 213.3,131.80 214.3,131.80 215.3,131.80 216.3,131.80 217.3,131.80 218.3,131.80 219.3,131.80 220.3,131.80 221.3,131.80 222.3,131.80 223.3,131.80 224.3,131.80 225.3,131.80 226.3,131.80 227.3,131.80 228.3,131.80 229.3,131.20 230.3,131.20 231.3,131.20 232.3,131.20 233.3,131.20 234.3,131.20 235.3,131.20 236.3,131.20 237.3,131.20 238.3,131.20 239.3,131.20 240.3,131.20 241.3,131.20 242.3,131.20 243.3,131.20 244.3,131.20 245.3,131.20 246.3,131.20 247.3,131.20 248.3,131.20 249.3,131.20 250.3,131.20 251.3,131.20 252.3,131.20 253.3,130.20 254.3,130.20 255.3,130.20 256.3,130.20 257.3,130.20 258.3,130.20 259.3,130.20 260.3,130.20 261.3,130.20 262.3,130.20 263.3,130.20 264.3,130.20 265.3,130.20 266.3,130.20 267.3,130.20 268.3,130.20 269.3,130.20 270.3,130.20 271.3,130.20 272.3,130.20 273.3,130.20 274.3,130.20 275.3,130.20 276.3,130.20 277.3,131.20 278.3,131.20 279.3,131.20 280.3,131.20 281.3,131.20 282.3,131.20 283.3,131.20 284.3,131.20 285.3,131.20 286.3,131.20 287.3,131.20 288.3,131.20 289.3,131.20 290.3,131.20 291.3,131.20 292.3,131.20 293.3,131.20 294.3,131.20 295.3,131.20 296.3,131.20 297.3,131.20 298.3,131.20 299.3,131.20 300.3,131.20 301.3,131.20 302.3,131.20 303.3,131.20 304.3,131.20 305.3,131.20 306.3,131.20 307.3,131.20 308.3,131.20 309.3,131.20 310.3,131.20 311.3,131.20 312.3,131.20 313.3,131.20 314.3,131.20 315.3,131.20 316.3,131.20 317.3,131.20 318.3,131.20 319.3,131.20 320.3,131.20 321.3,131.20 322.3,131.20 323.3,131.20 324.3,131.20 325.3,131.20 326.3,131.20 327.3,131.20 328.3,131.20 329.3,131.20 330.3,131.20 331.3,130.20 332.3,130.20 333.3,130.20 334.3,130.20 335.3,130.20 336.3,130.20 337.3,130.20 338.3,130.20 339.3,130.20 340.3,130.20 341.3,130.20 342.3,130.20 343.3,130.20 344.3,130.20 345.3,130.20 346.3,130.20 347.3,130.20 348.3,130.20 349.3,130.20 350.3,130.20 351.3,130.20 352.3,130.20 353.3,130.20 354.3,130.20 355.3,130.20 356.3,130.20 357.3,130.20 358.3,130.20 359.3,130.20 360.3,130.20 361.3,130.20 362.3,130.20 363.3,130.20 364.3,130.20 365.3,130.20 366.3,130.20 367.3,130.20 368.3,130.20 369.3,130.20 370.3,130.20 371.3,130.20 372.3,130.20 373.3,130.20 374.3,130.20 375.3,130.20 376.3,130.20 377.3,130.20 378.3,130.20 379.3,130.20 380.3,131.20 381.3,131.20 382.3,131.20 383.3,131.20 384.3,131.20 385.3,131.20 386.3,131.20 387.3,131.20 388.3,131.20 389.3,131.20 390.3,131.20 391.3,131.20 392.3,131.20 393.3,131.20 394.3,131.20 395.3,131.20 396.3,131.20 397.3,131.20 398.3,131.20 399.3,131.20 400.3,131.20 401.3,131.20 402.3,131.20 403.3,131.20 404.3,131.20 405.3,131.20 406.3,131.20 407.3,130.20 408.3,130.20 409.3,130.20 410.3,130.20 411.3,130.20 412.3,130.20 413.3,130.20 414.3,130.20 415.3,130.20 416.3,131.80 417.3,131.80 418.3,131.80 419.3,131.80 420.3,131.80 421.3,131.80 422.3,131.80 423.3,131.80 424.3,131.80 425.3,131.80 426.3,131.80 427.3,131.80 428.3,131.80 429.3,131.80 430.3,131.80 431.3,131.80 432.3,131.80 433.3,131.80 434.3,131.80 435.3,131.80 436.3,131.80 437.3,131.80 438.3,131.80 439.3,131.80 440.3,131.20 441.3,131.20 442.3,131.20 443.3,131.20 444.3,131.20 445.3,131.20 446.3,131.20 447.3,131.20 448.3,131.20 449.3,131.20 450.3,131.20 451.3,131.20 452.3,130.20 453.3,130.20 454.3,130.20 455.3,130.20 456.3,130.20 457.3,130.20 458.3,130.20 459.3,130.20 460.3,130.20 461.3,131.20 462.3,131.20 463.3,131.20 464.3,131.20 465.3,131.20 466.3,131.20 467.3,131.20 468.3,131.20 469.3,131.20 470.3,131.20 471.3,131.20 472.3,131.20 473.3,131.20 474.3,131.20 475.3,131.20 476.3,131.20 477.3,131.20 478.3,131.20 479.3,131.20 480.3,131.20 481.3,131.20 482.3,131.20 483.3,131.20 484.3,131.20 485.3,131.20 486.3,131.20 487.3,131.20 488.3,131.20 489.3,131.20 490.3,131.20 491.3,131.20 492.3,131.20 493.3,131.20 494.3,131.20 495.3,131.20 496.3,131.20 497.3,131.20 498.3,131.20 499.3,131.20 500.3,131.20 501.3,131.20 502.3,131.20 503.3,131.20 504.3,131.20 505.3,131.20 506.3,131.20 507.3,131.20 508.3,131.20 509.3,131.20 510.3,131.20 511.3,131.20 512.3,131.20 513.3,131.20 514.3,131.20 515.3,131.20 516.3,131.20 517.3,131.20 518.3,131.20 519.3,131.20 520.3,131.20 521.3,131.20 522.3,131.20 523.3,131.20 524.3,131.20 525.3,131.20 526.3,131.20 527.3,131.20 528.3,131.20 529.3,131.20 530.3,131.20 531.3,131.20 532.3,131.20 533.3,131.20 534.3,131.20 535.3,131.20 536.3,131.20 537.3,131.20 538.3,131.80 539.3,131.80 540.3,131.80 541.3,131.80 542.3,131.80 543.3,131.80 544.3,131.80 545.3,131.80 546.3,131.80 547.3,131.80 548.3,131.80 549.3,131.80 550.3,131.80 551.3,131.80 552.3,131.80 553.3,131.80 554.3,131.80 555.3,131.80 556.3,131.80 557.3,131.80 558.3,131.80 559.3,130.20 560.3,130.20 561.3,130.20 562.3,130.20 563.3,130.20 564.3,130.20 565.3,130.20 566.3,130.20 567.3,130.20 568.3,130.20 569.3,130.20 570.3,130.20 571.3,130.20 572.3,130.20 573.3,130.20 574.3,130.20 575.3,130.20 576.3,130.20 577.3,130.20 578.3,130.20 579.3,130.20 580.3,130.20 581.3,130.20 582.3,130.20 583.3,130.20 584.3,130.20 585.3,130.20 586.3,130.20 587.3,130.20 588.3,130.20 589.3,130.20 590.3,130.20 591.3,130.20 592.3,130.20 593.3,130.20 594.3,130.20 595.3,130.20 596.3,130.20 597.3,130.20 598.3,130.20 599.3,130.20 600.3,130.20 601.3,130.20 602.3,130.20 603.3,130.20 604.3,130.20 605.3,130.20 606.3,130.20 607.3,130.20 608.3,130.20 609.3,130.20 610.3,130.20 611.3,130.20 612.3,130.20 613.3,130.20 614.3,130.20 615.3,130.20 616.3,130.20 617.3,130.20 618.3,130.20 619.3,130.20 620.3,130.20 621.3,130.20 622.3,131.20 623.3,131.20 624.3,131.20 625.3,131.20 626.3,131.20 627.3,131.20 628.3,131.20 629.3,131.20 630.3,131.20 631.3,131.20 632.3,131.20 633.3,131.20 634.3,131.20 635.3,131.20 636.3,131.20 637.3,131.20 638.3,131.20 639.3,131.20 640.3,131.20 641.3,131.20 642.3,131.20 643.3,131.20 644.3,131.20 645.3,131.20 646.3,131.20 647.3,131.20 648.3,131.20 649.3,131.20 650.3,131.20 651.3,131.20 652.3,131.20 653.3,131.20 654.3,131.20 655.3,131.20 656.3,131.20 657.3,131.20 658.3,131.20 659.3,131.20 660.3,131.20 661.3,131.20 662.3,131.20 663.3,131.20 664.3,131.20 665.3,131.20 666.3,131.20 667.3,131.20 668.3,131.20 669.3,131.20 670.3,131.20 671.3,131.20 672.3,131.20 673.3,131.20 674.3,131.20 675.3,131.20 676.3,131.20 677.3,131.20 678.3,131.20 679.3,131.20 680.3,130.20 681.3,130.20 682.3,130.20 683.3,130.20 684.3,130.20 685.3,130.20 686.3,130.20 687.3,130.20 688.3,130.20 689.3,130.20 690.3,130.20 691.3,130.20 692.3,130.20 693.3,130.20 694.3,130.20 695.3,130.20 696.3,130.20 697.3,130.20 698.3,130.20 699.3,130.20 700.3,130.20 701.3,130.20 702.3,130.20 703.3,131.20 704.3,131.20 705.3,131.20 706.3,131.20 707.3,131.20 708.3,131.20 709.3,131.20 710.3,131.20 711.3,131.20 712.3,131.20 713.3,131.20 714.3,131.20 715.3,131.20 716.3,131.20 717.3,131.20 718.3,131.20 719.3,131.20 720.3,131.20 721.3,131.20 722.3,131.20 723.3,131.20 724.3,131.20 725.3,131.20 726.3,131.20 727.3,131.20 728.3,131.20 729.3,131.20 730.3,131.20 731.3,131.20 732.3,131.20 733.3,131.20 734.3,131.20 735.3,131.20 736.3,131.20 737.3,131.20 738.3,131.20 739.3,131.20 740.3,131.20 741.3,131.20 742.3,131.20 743.3,131.20 744.3,131.20 745.3,131.20 746.3,131.20 747.3,131.20 748.3,131.20 749.3,131.20 750.3,131.20 751.3,131.20 752.3,131.20 753.3,131.20 754.3,131.20 755.3,131.20 756.3,131.20 757.3,131.20 758.3,131.20 759.3,131.20 760.3,131.20 761.3,131.20 762.3,131.20 763.3,131.20 764.3,131.20 765.3,131.20 766.3,131.20 767.3,131.20 768.3,131.20 769.3,130.20 770.3,130.20 771.3,130.20 772.3,130.20 773.3,130.20 774.3,130.20 775.3,130.20 776.3,130.20 777.3,130.20 778.3,131.20 779.3,131.20 780.3,131.20 781.3,131.20 782.3,131.20 783.3,131.20 784.3,131.20 785.3,131.20 786.3,131.20 787.3,131.20 788.3,131.20 789.3,131.20 790.3,131.20 791.3,131.20 792.3,131.20 793.3,131.20 794.3,131.20 795.3,131.20 796.3,131.20 797.3,131.20 798.3,131.20 799.3,131.20 800.3,131.20 801.3,131.20 802.3,131.20 803.3,131.20 804.3,131.20 805.3,131.20 806.3,131.20 807.3,131.20 808.3,131.20 809.3,131.20 810.3,131.20 811.3,131.20 812.3,131.20 813.3,130.20 814.3,130.20 815.3,130.20 816.3,130.20 817.3,130.20 818.3,130.20 819.3,130.20 820.3,130.20 821.3,130.20 822.3,130.20 823.3,130.20 824.3,130.20 825.3,130.20 826.3,130.20 827.3,130.20 828.3,130.20 829.3,130.20 830.3,130.20 831.3,130.20 832.3,130.20 833.3,130.20 834.3,131.80 835.3,131.80 836.3,131.80 837.3,131.80 838.3,131.80 839.3,131.80 840.3,131.80 841.3,130.20 842.3,130.20 843.3,130.20 844.3,130.20 845.3,130.20 846.3,130.20 847.3,130.20 848.3,130.20 849.3,131.20 850.3,131.20 851.3,131.20 852.3,131.20 853.3,131.20 854.3,131.20 855.3,131.20 856.3,131.20 857.3,131.20 858.3,131.20 859.3,131.20 860.3,131.20 861.3,131.20 862.3,131.20 863.3,131.20 864.3,131.20 865.3,131.20 866.3,131.20 867.3,131.20 868.3,131.20 869.3,131.20 870.3,131.20 871.3,131.20 872.3,131.20 873.3,131.80 874.3,131.80 875.3,131.80 876.3,131.80 877.3,131.80 878.3,131.80 879.3,131.80 880.3,131.80 881.3,131.80 882.3,131.80 883.3,131.80 884.3,131.80 885.3,131.80 886.3,131.80 887.3,131.80 888.3,131.80 889.3,130.20 890.3,130.20 891.3,130.20 892.3,130.20 893.3,130.20 894.3,130.20 895.3,130.20 896.3,130.20 897.3,130.20 898.3,130.20 899.3,130.20 900.3,130.20 901.3,130.20 902.3,130.20 903.3,130.20 904.3,130.20 905.3,130.20 906.3,130.20 907.3,130.20 908.3,130.20 909.3,130.20 910.3,130.20 911.3,130.20 912.3,130.20 913.3,130.20 914.3,130.20 915.3,130.20 916.3,130.20 917.3,130.20 918.3,130.20 919.3,130.20 920.3,130.20 921.3,130.20 922.3,130.20 923.3,130.20 924.3,130.20 925.3,130.20 926.3,130.20 927.3,131.20 928.3,131.20 929.3,131.20 930.3,131.20 931.3,131.20 932.3,131.20 933.3,131.20 934.3,131.20 935.3,131.20 936.3,131.20 937.3,131.20 938.3,131.20 939.3,131.20" fill="none" stroke="#3a3ad8" stroke-width="1.1"/>
<path d="M22.30 86.90 h4 M24.30 86.20 v3" stroke="#0000ff" stroke-width="0.8"/>
<line x1="2.00" y1="194.60" x2="955.00" y2="194.60" stroke="#5a5a5a" stroke-width="0.9"/>
<rect x="2.00" y="194.80" width="953.00" height="312.70" fill="#d6e2ee" />
<line x1="2.00" y1="195.20" x2="955.00" y2="195.20" stroke="#9aa8b8" stroke-width="0.8"/>
<rect x="2.50" y="195.30" width="952.00" height="15.00" fill="url(#mdit)" />
<rect x="2.50" y="195.30" width="952.00" height="1.20" fill="#dfe8f3" />
<rect x="2.50" y="209.10" width="952.00" height="1.20" fill="#deeaf6" />
<rect x="6.50" y="199.80" width="8.00" height="8.00" fill="#1830c0" />
<rect x="7.50" y="201.80" width="1.20" height="6.00" fill="#ffd700" />
<rect x="9.50" y="204.80" width="1.20" height="3.00" fill="#ffd700" />
<rect x="11.50" y="205.80" width="1.20" height="2.00" fill="#ffd700" />
<rect x="6.50" y="207.00" width="8.00" height="0.80" fill="#ffd700" />
<text x="17.00" y="206.10" font-family='"Liberation Sans", sans-serif' font-size="7" fill="#9a9a9a" font-weight="normal" text-anchor="start" style="white-space:pre" textLength="49.7" lengthAdjust="spacingAndGlyphs">Spectrum Analyzer</text>
<rect x="901.10" y="199.60" width="15.5" height="9" rx="1.2" fill="#d3deea" stroke="#8a9bb0" stroke-width="0.6"/>
<rect x="906.60" y="204.60" width="5.00" height="1.40" fill="#555" />
<rect x="918.15" y="199.60" width="15.5" height="9" rx="1.2" fill="#d3deea" stroke="#8a9bb0" stroke-width="0.6"/>
<rect x="923.75" y="201.60" width="4.6" height="3.8" fill="none" stroke="#555" stroke-width="0.7"/>
<rect x="935.20" y="199.60" width="15.5" height="9" rx="1.2" fill="#d3deea" stroke="#8a9bb0" stroke-width="0.6"/>
<path d="M940.70 201.50 l4.6 4 M945.30 201.50 l-4.6 4" stroke="#555" stroke-width="0.8"/>
<rect x="5.00" y="210.20" width="946.50" height="293.00" fill="#ffffff" />
<rect x="5.00" y="210.20" width="946.50" height="1.00" fill="#5e5e5e" />
<rect x="5.00" y="210.20" width="1.00" height="293.00" fill="#6a6a6a" />
<g transform="translate(6.00,216.20) scale(0.746,1)">
<text x="0.00" y="0.00" font-family='"Liberation Mono", monospace' font-size="6.7" fill="#0000ff" font-weight="bold" text-anchor="start" style="white-space:pre" >A(dBFS)</text>
</g>
<g transform="translate(355.00,216.20) scale(0.746,1)">
<text x="0.00" y="0.00" font-family='"Liberation Mono", monospace' font-size="6.7" fill="#0000ff" font-weight="bold" text-anchor="start" style="white-space:pre" >A: Peak Frequency Band=  125.00  Hz        20.00  Hz - 20.00000 kHz : ±  15.4018 dBFS</text>
</g>
<line x1="39.30" y1="221.60" x2="39.30" y2="489.50" stroke="#00e600" stroke-width="1" stroke-dasharray="1.6 1.6"/>
<line x1="68.69" y1="221.60" x2="68.69" y2="489.50" stroke="#00e600" stroke-width="1" stroke-dasharray="1.6 1.6"/>
<line x1="95.25" y1="221.60" x2="95.25" y2="489.50" stroke="#00e600" stroke-width="1" stroke-dasharray="1.6 1.6"/>
<line x1="121.81" y1="221.60" x2="121.81" y2="489.50" stroke="#00e600" stroke-width="1" stroke-dasharray="1.6 1.6"/>
<line x1="149.32" y1="221.60" x2="149.32" y2="489.50" stroke="#00e600" stroke-width="1" stroke-dasharray="1.6 1.6"/>
<line x1="177.76" y1="221.60" x2="177.76" y2="489.50" stroke="#00e600" stroke-width="1" stroke-dasharray="1.6 1.6"/>
<line x1="204.32" y1="221.60" x2="204.32" y2="489.50" stroke="#00e600" stroke-width="1" stroke-dasharray="1.6 1.6"/>
<line x1="231.84" y1="221.60" x2="231.84" y2="489.50" stroke="#00e600" stroke-width="1" stroke-dasharray="1.6 1.6"/>
<line x1="260.27" y1="221.60" x2="260.27" y2="489.50" stroke="#00e600" stroke-width="1" stroke-dasharray="1.6 1.6"/>
<line x1="286.84" y1="221.60" x2="286.84" y2="489.50" stroke="#00e600" stroke-width="1" stroke-dasharray="1.6 1.6"/>
<line x1="313.40" y1="221.60" x2="313.40" y2="489.50" stroke="#00e600" stroke-width="1" stroke-dasharray="1.6 1.6"/>
<line x1="342.79" y1="221.60" x2="342.79" y2="489.50" stroke="#00e600" stroke-width="1" stroke-dasharray="1.6 1.6"/>
<line x1="369.35" y1="221.60" x2="369.35" y2="489.50" stroke="#00e600" stroke-width="1" stroke-dasharray="1.6 1.6"/>
<line x1="395.91" y1="221.60" x2="395.91" y2="489.50" stroke="#00e600" stroke-width="1" stroke-dasharray="1.6 1.6"/>
<line x1="423.42" y1="221.60" x2="423.42" y2="489.50" stroke="#00e600" stroke-width="1" stroke-dasharray="1.6 1.6"/>
<line x1="451.86" y1="221.60" x2="451.86" y2="489.50" stroke="#00e600" stroke-width="1" stroke-dasharray="1.6 1.6"/>
<line x1="478.42" y1="221.60" x2="478.42" y2="489.50" stroke="#00e600" stroke-width="1" stroke-dasharray="1.6 1.6"/>
<line x1="505.94" y1="221.60" x2="505.94" y2="489.50" stroke="#00e600" stroke-width="1" stroke-dasharray="1.6 1.6"/>
<line x1="534.37" y1="221.60" x2="534.37" y2="489.50" stroke="#00e600" stroke-width="1" stroke-dasharray="1.6 1.6"/>
<line x1="560.94" y1="221.60" x2="560.94" y2="489.50" stroke="#00e600" stroke-width="1" stroke-dasharray="1.6 1.6"/>
<line x1="587.50" y1="221.60" x2="587.50" y2="489.50" stroke="#00e600" stroke-width="1" stroke-dasharray="1.6 1.6"/>
<line x1="616.89" y1="221.60" x2="616.89" y2="489.50" stroke="#00e600" stroke-width="1" stroke-dasharray="1.6 1.6"/>
<line x1="643.45" y1="221.60" x2="643.45" y2="489.50" stroke="#00e600" stroke-width="1" stroke-dasharray="1.6 1.6"/>
<line x1="670.01" y1="221.60" x2="670.01" y2="489.50" stroke="#00e600" stroke-width="1" stroke-dasharray="1.6 1.6"/>
<line x1="697.52" y1="221.60" x2="697.52" y2="489.50" stroke="#00e600" stroke-width="1" stroke-dasharray="1.6 1.6"/>
<line x1="725.96" y1="221.60" x2="725.96" y2="489.50" stroke="#00e600" stroke-width="1" stroke-dasharray="1.6 1.6"/>
<line x1="752.52" y1="221.60" x2="752.52" y2="489.50" stroke="#00e600" stroke-width="1" stroke-dasharray="1.6 1.6"/>
<line x1="780.04" y1="221.60" x2="780.04" y2="489.50" stroke="#00e600" stroke-width="1" stroke-dasharray="1.6 1.6"/>
<line x1="808.47" y1="221.60" x2="808.47" y2="489.50" stroke="#00e600" stroke-width="1" stroke-dasharray="1.6 1.6"/>
<line x1="835.04" y1="221.60" x2="835.04" y2="489.50" stroke="#00e600" stroke-width="1" stroke-dasharray="1.6 1.6"/>
<line x1="861.60" y1="221.60" x2="861.60" y2="489.50" stroke="#00e600" stroke-width="1" stroke-dasharray="1.6 1.6"/>
<line x1="890.99" y1="221.60" x2="890.99" y2="489.50" stroke="#00e600" stroke-width="1" stroke-dasharray="1.6 1.6"/>
<line x1="917.55" y1="221.60" x2="917.55" y2="489.50" stroke="#00e600" stroke-width="1" stroke-dasharray="1.6 1.6"/>
<line x1="24.30" y1="248.39" x2="939.40" y2="248.39" stroke="#00e600" stroke-width="1" stroke-dasharray="1.6 1.6"/>
<line x1="24.30" y1="275.18" x2="939.40" y2="275.18" stroke="#00e600" stroke-width="1" stroke-dasharray="1.6 1.6"/>
<line x1="24.30" y1="301.97" x2="939.40" y2="301.97" stroke="#00e600" stroke-width="1" stroke-dasharray="1.6 1.6"/>
<line x1="24.30" y1="328.76" x2="939.40" y2="328.76" stroke="#00e600" stroke-width="1" stroke-dasharray="1.6 1.6"/>
<line x1="24.30" y1="355.55" x2="939.40" y2="355.55" stroke="#00e600" stroke-width="1" stroke-dasharray="1.6 1.6"/>
<line x1="24.30" y1="382.34" x2="939.40" y2="382.34" stroke="#00e600" stroke-width="1" stroke-dasharray="1.6 1.6"/>
<line x1="24.30" y1="409.13" x2="939.40" y2="409.13" stroke="#00e600" stroke-width="1" stroke-dasharray="1.6 1.6"/>
<line x1="24.30" y1="435.92" x2="939.40" y2="435.92" stroke="#00e600" stroke-width="1" stroke-dasharray="1.6 1.6"/>
<line x1="24.30" y1="462.71" x2="939.40" y2="462.71" stroke="#00e600" stroke-width="1" stroke-dasharray="1.6 1.6"/>
<rect x="24.30" y="221.60" width="915.10" height="267.90" fill="none" stroke="#40ff40" stroke-width="1"/>
<rect x="25.80" y="355.20" width="26.90" height="134.30" fill="#0000ff" />
<rect x="24.80" y="355.70" width="1.00" height="133.80" fill="#c8c8f0" />
<rect x="25.80" y="355.20" width="26.90" height="0.70" fill="#5050ff" />
<rect x="53.70" y="349.30" width="26.45" height="140.20" fill="#0000ff" />
<rect x="52.70" y="355.20" width="1.00" height="134.30" fill="#d8d8fa" />
<rect x="53.70" y="349.30" width="26.45" height="0.70" fill="#5050ff" />
<rect x="81.15" y="346.30" width="26.45" height="143.20" fill="#0000ff" />
<rect x="80.15" y="349.30" width="1.00" height="140.20" fill="#d8d8fa" />
<rect x="81.15" y="346.30" width="26.45" height="0.70" fill="#5050ff" />
<rect x="108.60" y="341.10" width="26.45" height="148.40" fill="#0000ff" />
<rect x="107.60" y="346.30" width="1.00" height="143.20" fill="#d8d8fa" />
<rect x="108.60" y="341.10" width="26.45" height="0.70" fill="#5050ff" />
<rect x="136.05" y="332.10" width="26.45" height="157.40" fill="#0000ff" />
<rect x="135.05" y="341.10" width="1.00" height="148.40" fill="#d8d8fa" />
<rect x="136.05" y="332.10" width="26.45" height="0.70" fill="#5050ff" />
<rect x="163.50" y="322.30" width="26.45" height="167.20" fill="#0000ff" />
<rect x="162.50" y="332.10" width="1.00" height="157.40" fill="#d8d8fa" />
<rect x="163.50" y="322.30" width="26.45" height="0.70" fill="#5050ff" />
<rect x="190.95" y="311.00" width="26.45" height="178.50" fill="#0000ff" />
<rect x="189.95" y="322.30" width="1.00" height="167.20" fill="#d8d8fa" />
<rect x="190.95" y="311.00" width="26.45" height="0.70" fill="#5050ff" />
<rect x="218.40" y="305.30" width="26.45" height="184.20" fill="#0000ff" />
<rect x="217.40" y="311.00" width="1.00" height="178.50" fill="#d8d8fa" />
<rect x="218.40" y="305.30" width="26.45" height="0.70" fill="#5050ff" />
<rect x="245.85" y="303.00" width="26.45" height="186.50" fill="#0000ff" />
<rect x="244.85" y="305.30" width="1.00" height="184.20" fill="#d8d8fa" />
<rect x="245.85" y="303.00" width="26.45" height="0.70" fill="#5050ff" />
<rect x="273.30" y="301.40" width="26.45" height="188.10" fill="#0000ff" />
<rect x="272.30" y="303.00" width="1.00" height="186.50" fill="#d8d8fa" />
<rect x="273.30" y="301.40" width="26.45" height="0.70" fill="#5050ff" />
<rect x="300.75" y="300.10" width="26.45" height="189.40" fill="#0000ff" />
<rect x="299.75" y="301.40" width="1.00" height="188.10" fill="#d8d8fa" />
<rect x="300.75" y="300.10" width="26.45" height="0.70" fill="#5050ff" />
<rect x="328.20" y="308.10" width="26.45" height="181.40" fill="#0000ff" />
<rect x="327.20" y="308.10" width="1.00" height="181.40" fill="#d8d8fa" />
<rect x="328.20" y="308.10" width="26.45" height="0.70" fill="#5050ff" />
<rect x="355.65" y="311.50" width="26.45" height="178.00" fill="#0000ff" />
<rect x="354.65" y="311.50" width="1.00" height="178.00" fill="#d8d8fa" />
<rect x="355.65" y="311.50" width="26.45" height="0.70" fill="#5050ff" />
<rect x="383.10" y="319.30" width="26.45" height="170.20" fill="#0000ff" />
<rect x="382.10" y="319.30" width="1.00" height="170.20" fill="#d8d8fa" />
<rect x="383.10" y="319.30" width="26.45" height="0.70" fill="#5050ff" />
<rect x="410.55" y="324.40" width="26.45" height="165.10" fill="#0000ff" />
<rect x="409.55" y="324.40" width="1.00" height="165.10" fill="#d8d8fa" />
<rect x="410.55" y="324.40" width="26.45" height="0.70" fill="#5050ff" />
<rect x="438.00" y="333.40" width="26.45" height="156.10" fill="#0000ff" />
<rect x="437.00" y="333.40" width="1.00" height="156.10" fill="#d8d8fa" />
<rect x="438.00" y="333.40" width="26.45" height="0.70" fill="#5050ff" />
<rect x="465.45" y="340.10" width="26.45" height="149.40" fill="#0000ff" />
<rect x="464.45" y="340.10" width="1.00" height="149.40" fill="#d8d8fa" />
<rect x="465.45" y="340.10" width="26.45" height="0.70" fill="#5050ff" />
<rect x="492.90" y="340.40" width="26.45" height="149.10" fill="#0000ff" />
<rect x="491.90" y="340.40" width="1.00" height="149.10" fill="#d8d8fa" />
<rect x="492.90" y="340.40" width="26.45" height="0.70" fill="#5050ff" />
<rect x="520.35" y="342.30" width="26.45" height="147.20" fill="#0000ff" />
<rect x="519.35" y="342.30" width="1.00" height="147.20" fill="#d8d8fa" />
<rect x="520.35" y="342.30" width="26.45" height="0.70" fill="#5050ff" />
<rect x="547.80" y="343.40" width="26.45" height="146.10" fill="#0000ff" />
<rect x="546.80" y="343.40" width="1.00" height="146.10" fill="#d8d8fa" />
<rect x="547.80" y="343.40" width="26.45" height="0.70" fill="#5050ff" />
<rect x="575.25" y="343.40" width="26.45" height="146.10" fill="#0000ff" />
<rect x="574.25" y="343.40" width="1.00" height="146.10" fill="#d8d8fa" />
<rect x="575.25" y="343.40" width="26.45" height="0.70" fill="#5050ff" />
<rect x="602.70" y="345.10" width="26.45" height="144.40" fill="#0000ff" />
<rect x="601.70" y="345.10" width="1.00" height="144.40" fill="#d8d8fa" />
<rect x="602.70" y="345.10" width="26.45" height="0.70" fill="#5050ff" />
<rect x="630.15" y="345.10" width="26.45" height="144.40" fill="#0000ff" />
<rect x="629.15" y="345.10" width="1.00" height="144.40" fill="#d8d8fa" />
<rect x="630.15" y="345.10" width="26.45" height="0.70" fill="#5050ff" />
<rect x="657.60" y="345.10" width="26.45" height="144.40" fill="#0000ff" />
<rect x="656.60" y="345.10" width="1.00" height="144.40" fill="#d8d8fa" />
<rect x="657.60" y="345.10" width="26.45" height="0.70" fill="#5050ff" />
<rect x="685.05" y="345.00" width="26.45" height="144.50" fill="#0000ff" />
<rect x="684.05" y="345.10" width="1.00" height="144.40" fill="#d8d8fa" />
<rect x="685.05" y="345.00" width="26.45" height="0.70" fill="#5050ff" />
<rect x="712.50" y="343.80" width="26.45" height="145.70" fill="#0000ff" />
<rect x="711.50" y="345.00" width="1.00" height="144.50" fill="#d8d8fa" />
<rect x="712.50" y="343.80" width="26.45" height="0.70" fill="#5050ff" />
<rect x="739.95" y="343.80" width="26.45" height="145.70" fill="#0000ff" />
<rect x="738.95" y="343.80" width="1.00" height="145.70" fill="#d8d8fa" />
<rect x="739.95" y="343.80" width="26.45" height="0.70" fill="#5050ff" />
<rect x="767.40" y="344.20" width="26.45" height="145.30" fill="#0000ff" />
<rect x="766.40" y="344.20" width="1.00" height="145.30" fill="#d8d8fa" />
<rect x="767.40" y="344.20" width="26.45" height="0.70" fill="#5050ff" />
<rect x="794.85" y="345.00" width="26.45" height="144.50" fill="#0000ff" />
<rect x="793.85" y="345.00" width="1.00" height="144.50" fill="#d8d8fa" />
<rect x="794.85" y="345.00" width="26.45" height="0.70" fill="#5050ff" />
<rect x="822.30" y="346.80" width="26.45" height="142.70" fill="#0000ff" />
<rect x="821.30" y="346.80" width="1.00" height="142.70" fill="#d8d8fa" />
<rect x="822.30" y="346.80" width="26.45" height="0.70" fill="#5050ff" />
<rect x="849.75" y="350.00" width="26.45" height="139.50" fill="#0000ff" />
<rect x="848.75" y="350.00" width="1.00" height="139.50" fill="#d8d8fa" />
<rect x="849.75" y="350.00" width="26.45" height="0.70" fill="#5050ff" />
<rect x="877.20" y="355.30" width="26.45" height="134.20" fill="#0000ff" />
<rect x="876.20" y="355.30" width="1.00" height="134.20" fill="#d8d8fa" />
<rect x="877.20" y="355.30" width="26.45" height="0.70" fill="#5050ff" />
<rect x="904.65" y="366.30" width="26.45" height="123.20" fill="#0000ff" />
<rect x="903.65" y="366.30" width="1.00" height="123.20" fill="#d8d8fa" />
<rect x="904.65" y="366.30" width="26.45" height="0.70" fill="#5050ff" />
<rect x="932.10" y="397.80" width="6.80" height="91.70" fill="#0000ff" />
<rect x="931.10" y="397.80" width="1.00" height="91.70" fill="#d8d8fa" />
<rect x="932.10" y="397.80" width="6.80" height="0.70" fill="#5050ff" />
<line x1="24.30" y1="489.50" x2="939.40" y2="489.50" stroke="#40ff40" stroke-width="1"/>
<line x1="24.30" y1="221.60" x2="24.30" y2="489.50" stroke="#40ff40" stroke-width="1"/>
<g transform="translate(22.80,223.60) scale(0.746,1)">
<text x="0.00" y="0.00" font-family='"Liberation Mono", monospace' font-size="6.7" fill="#0000ff" font-weight="bold" text-anchor="end" style="white-space:pre" >0</text>
</g>
<g transform="translate(22.80,250.39) scale(0.746,1)">
<text x="0.00" y="0.00" font-family='"Liberation Mono", monospace' font-size="6.7" fill="#0000ff" font-weight="bold" text-anchor="end" style="white-space:pre" >-15</text>
</g>
<g transform="translate(22.80,277.18) scale(0.746,1)">
<text x="0.00" y="0.00" font-family='"Liberation Mono", monospace' font-size="6.7" fill="#0000ff" font-weight="bold" text-anchor="end" style="white-space:pre" >-30</text>
</g>
<g transform="translate(22.80,303.97) scale(0.746,1)">
<text x="0.00" y="0.00" font-family='"Liberation Mono", monospace' font-size="6.7" fill="#0000ff" font-weight="bold" text-anchor="end" style="white-space:pre" >-45</text>
</g>
<g transform="translate(22.80,330.76) scale(0.746,1)">
<text x="0.00" y="0.00" font-family='"Liberation Mono", monospace' font-size="6.7" fill="#0000ff" font-weight="bold" text-anchor="end" style="white-space:pre" >-60</text>
</g>
<g transform="translate(22.80,357.55) scale(0.746,1)">
<text x="0.00" y="0.00" font-family='"Liberation Mono", monospace' font-size="6.7" fill="#0000ff" font-weight="bold" text-anchor="end" style="white-space:pre" >-75</text>
</g>
<g transform="translate(22.80,384.34) scale(0.746,1)">
<text x="0.00" y="0.00" font-family='"Liberation Mono", monospace' font-size="6.7" fill="#0000ff" font-weight="bold" text-anchor="end" style="white-space:pre" >-90</text>
</g>
<g transform="translate(22.80,411.13) scale(0.746,1)">
<text x="0.00" y="0.00" font-family='"Liberation Mono", monospace' font-size="6.7" fill="#0000ff" font-weight="bold" text-anchor="end" style="white-space:pre" >-105</text>
</g>
<g transform="translate(22.80,437.92) scale(0.746,1)">
<text x="0.00" y="0.00" font-family='"Liberation Mono", monospace' font-size="6.7" fill="#0000ff" font-weight="bold" text-anchor="end" style="white-space:pre" >-120</text>
</g>
<g transform="translate(22.80,464.71) scale(0.746,1)">
<text x="0.00" y="0.00" font-family='"Liberation Mono", monospace' font-size="6.7" fill="#0000ff" font-weight="bold" text-anchor="end" style="white-space:pre" >-135</text>
</g>
<g transform="translate(22.80,491.50) scale(0.746,1)">
<text x="0.00" y="0.00" font-family='"Liberation Mono", monospace' font-size="6.7" fill="#0000ff" font-weight="bold" text-anchor="end" style="white-space:pre" >-150</text>
</g>
<g transform="translate(39.30,495.50) scale(0.746,1)">
<text x="0.00" y="0.00" font-family='"Liberation Mono", monospace' font-size="6.7" fill="#111" font-weight="bold" text-anchor="middle" style="white-space:pre" >12.5</text>
</g>
<g transform="translate(68.69,495.50) scale(0.746,1)">
<text x="0.00" y="0.00" font-family='"Liberation Mono", monospace' font-size="6.7" fill="#111" font-weight="bold" text-anchor="middle" style="white-space:pre" >16</text>
</g>
<g transform="translate(95.25,495.50) scale(0.746,1)">
<text x="0.00" y="0.00" font-family='"Liberation Mono", monospace' font-size="6.7" fill="#111" font-weight="bold" text-anchor="middle" style="white-space:pre" >20</text>
</g>
<g transform="translate(121.81,495.50) scale(0.746,1)">
<text x="0.00" y="0.00" font-family='"Liberation Mono", monospace' font-size="6.7" fill="#111" font-weight="bold" text-anchor="middle" style="white-space:pre" >25</text>
</g>
<g transform="translate(149.32,495.50) scale(0.746,1)">
<text x="0.00" y="0.00" font-family='"Liberation Mono", monospace' font-size="6.7" fill="#111" font-weight="bold" text-anchor="middle" style="white-space:pre" >31.5</text>
</g>
<g transform="translate(177.76,495.50) scale(0.746,1)">
<text x="0.00" y="0.00" font-family='"Liberation Mono", monospace' font-size="6.7" fill="#111" font-weight="bold" text-anchor="middle" style="white-space:pre" >40</text>
</g>
<g transform="translate(204.32,495.50) scale(0.746,1)">
<text x="0.00" y="0.00" font-family='"Liberation Mono", monospace' font-size="6.7" fill="#111" font-weight="bold" text-anchor="middle" style="white-space:pre" >50</text>
</g>
<g transform="translate(231.84,495.50) scale(0.746,1)">
<text x="0.00" y="0.00" font-family='"Liberation Mono", monospace' font-size="6.7" fill="#111" font-weight="bold" text-anchor="middle" style="white-space:pre" >63</text>
</g>
<g transform="translate(260.27,495.50) scale(0.746,1)">
<text x="0.00" y="0.00" font-family='"Liberation Mono", monospace' font-size="6.7" fill="#111" font-weight="bold" text-anchor="middle" style="white-space:pre" >80</text>
</g>
<g transform="translate(286.84,495.50) scale(0.746,1)">
<text x="0.00" y="0.00" font-family='"Liberation Mono", monospace' font-size="6.7" fill="#111" font-weight="bold" text-anchor="middle" style="white-space:pre" >100</text>
</g>
<g transform="translate(313.40,495.50) scale(0.746,1)">
<text x="0.00" y="0.00" font-family='"Liberation Mono", monospace' font-size="6.7" fill="#111" font-weight="bold" text-anchor="middle" style="white-space:pre" >125</text>
</g>
<g transform="translate(342.79,495.50) scale(0.746,1)">
<text x="0.00" y="0.00" font-family='"Liberation Mono", monospace' font-size="6.7" fill="#111" font-weight="bold" text-anchor="middle" style="white-space:pre" >160</text>
</g>
<g transform="translate(369.35,495.50) scale(0.746,1)">
<text x="0.00" y="0.00" font-family='"Liberation Mono", monospace' font-size="6.7" fill="#111" font-weight="bold" text-anchor="middle" style="white-space:pre" >200</text>
</g>
<g transform="translate(395.91,495.50) scale(0.746,1)">
<text x="0.00" y="0.00" font-family='"Liberation Mono", monospace' font-size="6.7" fill="#111" font-weight="bold" text-anchor="middle" style="white-space:pre" >250</text>
</g>
<g transform="translate(423.42,495.50) scale(0.746,1)">
<text x="0.00" y="0.00" font-family='"Liberation Mono", monospace' font-size="6.7" fill="#111" font-weight="bold" text-anchor="middle" style="white-space:pre" >315</text>
</g>
<g transform="translate(451.86,495.50) scale(0.746,1)">
<text x="0.00" y="0.00" font-family='"Liberation Mono", monospace' font-size="6.7" fill="#111" font-weight="bold" text-anchor="middle" style="white-space:pre" >400</text>
</g>
<g transform="translate(478.42,495.50) scale(0.746,1)">
<text x="0.00" y="0.00" font-family='"Liberation Mono", monospace' font-size="6.7" fill="#111" font-weight="bold" text-anchor="middle" style="white-space:pre" >500</text>
</g>
<g transform="translate(505.94,495.50) scale(0.746,1)">
<text x="0.00" y="0.00" font-family='"Liberation Mono", monospace' font-size="6.7" fill="#111" font-weight="bold" text-anchor="middle" style="white-space:pre" >630</text>
</g>
<g transform="translate(534.37,495.50) scale(0.746,1)">
<text x="0.00" y="0.00" font-family='"Liberation Mono", monospace' font-size="6.7" fill="#111" font-weight="bold" text-anchor="middle" style="white-space:pre" >800</text>
</g>
<g transform="translate(560.94,495.50) scale(0.746,1)">
<text x="0.00" y="0.00" font-family='"Liberation Mono", monospace' font-size="6.7" fill="#111" font-weight="bold" text-anchor="middle" style="white-space:pre" >1k</text>
</g>
<g transform="translate(587.50,495.50) scale(0.746,1)">
<text x="0.00" y="0.00" font-family='"Liberation Mono", monospace' font-size="6.7" fill="#111" font-weight="bold" text-anchor="middle" style="white-space:pre" >1.25k</text>
</g>
<g transform="translate(616.89,495.50) scale(0.746,1)">
<text x="0.00" y="0.00" font-family='"Liberation Mono", monospace' font-size="6.7" fill="#111" font-weight="bold" text-anchor="middle" style="white-space:pre" >1.6k</text>
</g>
<g transform="translate(643.45,495.50) scale(0.746,1)">
<text x="0.00" y="0.00" font-family='"Liberation Mono", monospace' font-size="6.7" fill="#111" font-weight="bold" text-anchor="middle" style="white-space:pre" >2k</text>
</g>
<g transform="translate(670.01,495.50) scale(0.746,1)">
<text x="0.00" y="0.00" font-family='"Liberation Mono", monospace' font-size="6.7" fill="#111" font-weight="bold" text-anchor="middle" style="white-space:pre" >2.5k</text>
</g>
<g transform="translate(697.52,495.50) scale(0.746,1)">
<text x="0.00" y="0.00" font-family='"Liberation Mono", monospace' font-size="6.7" fill="#111" font-weight="bold" text-anchor="middle" style="white-space:pre" >3.15k</text>
</g>
<g transform="translate(725.96,495.50) scale(0.746,1)">
<text x="0.00" y="0.00" font-family='"Liberation Mono", monospace' font-size="6.7" fill="#111" font-weight="bold" text-anchor="middle" style="white-space:pre" >4k</text>
</g>
<g transform="translate(752.52,495.50) scale(0.746,1)">
<text x="0.00" y="0.00" font-family='"Liberation Mono", monospace' font-size="6.7" fill="#111" font-weight="bold" text-anchor="middle" style="white-space:pre" >5k</text>
</g>
<g transform="translate(780.04,495.50) scale(0.746,1)">
<text x="0.00" y="0.00" font-family='"Liberation Mono", monospace' font-size="6.7" fill="#111" font-weight="bold" text-anchor="middle" style="white-space:pre" >6.3k</text>
</g>
<g transform="translate(808.47,495.50) scale(0.746,1)">
<text x="0.00" y="0.00" font-family='"Liberation Mono", monospace' font-size="6.7" fill="#111" font-weight="bold" text-anchor="middle" style="white-space:pre" >8k</text>
</g>
<g transform="translate(835.04,495.50) scale(0.746,1)">
<text x="0.00" y="0.00" font-family='"Liberation Mono", monospace' font-size="6.7" fill="#111" font-weight="bold" text-anchor="middle" style="white-space:pre" >10k</text>
</g>
<g transform="translate(861.60,495.50) scale(0.746,1)">
<text x="0.00" y="0.00" font-family='"Liberation Mono", monospace' font-size="6.7" fill="#111" font-weight="bold" text-anchor="middle" style="white-space:pre" >12.5k</text>
</g>
<g transform="translate(890.99,495.50) scale(0.746,1)">
<text x="0.00" y="0.00" font-family='"Liberation Mono", monospace' font-size="6.7" fill="#111" font-weight="bold" text-anchor="middle" style="white-space:pre" >16k</text>
</g>
<g transform="translate(917.55,495.50) scale(0.746,1)">
<text x="0.00" y="0.00" font-family='"Liberation Mono", monospace' font-size="6.7" fill="#111" font-weight="bold" text-anchor="middle" style="white-space:pre" >20k</text>
</g>
<g transform="translate(6.00,500.80) scale(0.746,1)">
<text x="0.00" y="0.00" font-family='"Liberation Mono", monospace' font-size="6.7" fill="#111" font-weight="bold" text-anchor="start" style="white-space:pre" >FFT Segments:&lt;1</text>
</g>
<g transform="translate(66.00,500.80) scale(0.746,1)">
<text x="0.00" y="0.00" font-family='"Liberation Mono", monospace' font-size="6.7" fill="#111" font-weight="bold" text-anchor="start" style="white-space:pre" >Resolution: 2.929688Hz</text>
</g>
<g transform="translate(481.00,500.80) scale(0.746,1)">
<text x="0.00" y="0.00" font-family='"Liberation Mono", monospace' font-size="6.7" fill="#111" font-weight="bold" text-anchor="middle" style="white-space:pre" >1/3 OCTAVE Amplitude Spectrum in dBFS</text>
</g>
<g transform="translate(867.00,500.80) scale(0.746,1)">
<text x="0.00" y="0.00" font-family='"Liberation Mono", monospace' font-size="6.7" fill="#111" font-weight="bold" text-anchor="start" style="white-space:pre" >Averaged Frames: 10</text>
</g>
<g transform="translate(943.00,502.50) scale(0.746,1)">
<text x="0.00" y="0.00" font-family='"Liberation Mono", monospace' font-size="6.03" fill="#111" font-weight="bold" text-anchor="start" style="white-space:pre" >Hz</text>
</g>
<text x="937.90" y="228.80" font-family='"Liberation Serif", serif' font-size="7.5" fill="#ff00ff" font-weight="bold" text-anchor="end" style="white-space:pre" >N1</text>
<rect x="0.00" y="508.20" width="960.00" height="12.00" fill="#f0f0f0" />
<line x1="0.00" y1="508.60" x2="960.00" y2="508.60" stroke="#ffffff" stroke-width="0.8"/>
<line x1="2.00" y1="509.20" x2="2.00" y2="519.20" stroke="#c0c0c0" stroke-width="0.8"/>
<text x="9.30" y="517.70" font-family='"Liberation Sans", sans-serif' font-size="7" fill="#1010e0" font-weight="bold" text-anchor="middle" style="white-space:pre" >A</text>
<rect x="15.00" y="509.20" width="82.50" height="10.50" fill="#a0a0a0" />
<rect x="16.00" y="510.20" width="81.00" height="9.00" fill="#ffffff" />
<rect x="89.00" y="510.20" width="8.00" height="9.00" fill="#e6e6e6" />
<rect x="89.00" y="518.50" width="8.00" height="0.70" fill="#6a6a6a" />
<path d="M91.00 513.45 h4 l-2 2.2 z" fill="#000"/>
<text x="17.00" y="517.40" font-family='"Liberation Sans", sans-serif' font-size="6.5" fill="#1010e0" font-weight="bold" text-anchor="start" style="white-space:pre" >On</text>
<rect x="99.00" y="509.40" width="42.00" height="10.00" fill="#a0a0a0" />
<rect x="100.00" y="510.40" width="40.50" height="8.50" fill="#f0f0f0" />
<text x="120.00" y="517.10" font-family='"Liberation Sans", sans-serif' font-size="6.4" fill="#777" font-weight="normal" text-anchor="middle" style="white-space:pre" >0%</text>
<rect x="141.00" y="509.40" width="9.00" height="10.00" fill="#e8e8e8" />
<line x1="141.00" y1="514.40" x2="150.00" y2="514.40" stroke="#b0b0b0" stroke-width="0.6"/>
<path d="M144.30 512.70 l1.2 -1.2 l1.2 1.2 M144.30 516.20 l1.2 1.2 l1.2 -1.2" stroke="#999" stroke-width="0.5" fill="none"/>
<rect x="160.00" y="509.40" width="41.00" height="10.00" fill="#a0a0a0" />
<rect x="161.00" y="510.40" width="39.50" height="8.50" fill="#f0f0f0" />
<text x="180.50" y="517.10" font-family='"Liberation Sans", sans-serif' font-size="6.4" fill="#777" font-weight="normal" text-anchor="middle" style="white-space:pre" >10%</text>
<rect x="201.00" y="509.40" width="9.00" height="10.00" fill="#e8e8e8" />
<line x1="201.00" y1="514.40" x2="210.00" y2="514.40" stroke="#b0b0b0" stroke-width="0.6"/>
<path d="M204.30 512.70 l1.2 -1.2 l1.2 1.2 M204.30 516.20 l1.2 1.2 l1.2 -1.2" stroke="#999" stroke-width="0.5" fill="none"/>
<rect x="561.20" y="509.40" width="41.50" height="10.00" fill="#a0a0a0" />
<rect x="562.20" y="510.40" width="40.00" height="8.50" fill="#f0f0f0" />
<text x="581.95" y="517.10" font-family='"Liberation Sans", sans-serif' font-size="6.4" fill="#777" font-weight="normal" text-anchor="middle" style="white-space:pre" >0%</text>
<rect x="602.70" y="509.40" width="8.80" height="10.00" fill="#e8e8e8" />
<line x1="602.70" y1="514.40" x2="611.50" y2="514.40" stroke="#b0b0b0" stroke-width="0.6"/>
<path d="M605.90 512.70 l1.2 -1.2 l1.2 1.2 M605.90 516.20 l1.2 1.2 l1.2 -1.2" stroke="#999" stroke-width="0.5" fill="none"/>
<rect x="621.50" y="509.40" width="41.10" height="10.00" fill="#a0a0a0" />
<rect x="622.50" y="510.40" width="39.60" height="8.50" fill="#f0f0f0" />
<text x="642.05" y="517.10" font-family='"Liberation Sans", sans-serif' font-size="6.4" fill="#777" font-weight="normal" text-anchor="middle" style="white-space:pre" >10%</text>
<rect x="662.60" y="509.40" width="9.10" height="10.00" fill="#e8e8e8" />
<line x1="662.60" y1="514.40" x2="671.70" y2="514.40" stroke="#b0b0b0" stroke-width="0.6"/>
<path d="M665.95 512.70 l1.2 -1.2 l1.2 1.2 M665.95 516.20 l1.2 1.2 l1.2 -1.2" stroke="#999" stroke-width="0.5" fill="none"/>
<rect x="220.00" y="509.40" width="92.30" height="10.00" fill="#a0a0a0" />
<rect x="221.00" y="510.40" width="90.80" height="8.50" fill="#f0f0f0" />
<text x="266.15" y="517.10" font-family='"Liberation Sans", sans-serif' font-size="6.4" fill="#333" font-weight="normal" text-anchor="middle" style="white-space:pre" >1.00000</text>
<rect x="681.70" y="509.40" width="92.30" height="10.00" fill="#a0a0a0" />
<rect x="682.70" y="510.40" width="90.80" height="8.50" fill="#f0f0f0" />
<text x="727.85" y="517.10" font-family='"Liberation Sans", sans-serif' font-size="6.4" fill="#333" font-weight="normal" text-anchor="middle" style="white-space:pre" >1.00000</text>
<text x="320.50" y="517.80" font-family='"Liberation Sans", sans-serif' font-size="7" fill="#111" font-weight="normal" text-anchor="middle" style="white-space:pre" >M</text>
<rect x="325.00" y="509.20" width="140.00" height="10.50" fill="#a0a0a0" />
<rect x="326.00" y="510.20" width="138.50" height="9.00" fill="#ffffff" />
<rect x="456.50" y="510.20" width="8.00" height="9.00" fill="#e6e6e6" />
<rect x="456.50" y="518.50" width="8.00" height="0.70" fill="#6a6a6a" />
<path d="M458.50 513.45 h4 l-2 2.2 z" fill="#000"/>
<text x="327.00" y="517.40" font-family='"Liberation Sans", sans-serif' font-size="6.5" fill="#111" font-weight="normal" text-anchor="start" style="white-space:pre" >dB</text>
<text x="472.50" y="517.70" font-family='"Liberation Sans", sans-serif' font-size="7" fill="#e02020" font-weight="bold" text-anchor="middle" style="white-space:pre" >B</text>
<rect x="477.50" y="509.20" width="82.00" height="10.50" fill="#a0a0a0" />
<rect x="478.50" y="510.20" width="80.50" height="9.00" fill="#f4f4f4" />
<rect x="551.00" y="510.20" width="8.00" height="9.00" fill="#e6e6e6" />
<rect x="551.00" y="518.50" width="8.00" height="0.70" fill="#6a6a6a" />
<path d="M553.00 513.45 h4 l-2 2.2 z" fill="#9a9a9a"/>
<text x="479.50" y="517.40" font-family='"Liberation Sans", sans-serif' font-size="6.5" fill="#9a9a9a" font-weight="normal" text-anchor="start" style="white-space:pre" >Off</text>
<rect x="0.00" y="520.00" width="960.00" height="20.00" fill="#000000" />
<path d="M7.20 526.70 l3.8 -0.6 v3.4 h-3.8 z M11.80 525.90 l4.6 -0.7 v4.6 h-4.6 z M7.20 530.30 h3.8 v3.4 l-3.8 -0.6 z M11.80 530.30 h4.6 v4.6 l-4.6 -0.7 z" fill="#fff"/>
<circle cx="37.45" cy="528.70" r="2.8" fill="none" stroke="#fff" stroke-width="0.9"/><path d="M35.45 530.80 l-3.5 3.5" stroke="#fff" stroke-width="1"/>
<rect x="57.60" y="526.00" width="6" height="8" fill="none" stroke="#fff" stroke-width="0.8"/><path d="M55.80 527.00 v6 M65.40 527.00 v6" stroke="#fff" stroke-width="0.8"/>
<path d="M89.55 530.50 h-8 q0.5 3.5 4 3.5 q2.5 0 4 -1 M81.55 529.50 q0.5 -4.5 4 -4.5 q4 0 4 4" fill="none" stroke="#1e90ff" stroke-width="1.8"/>
<rect x="75.05" y="538.50" width="20.00" height="1.50" fill="#76b9ed" />
<path d="M104.50 527.00 h10 v8 h-10 z" fill="#fff"/><path d="M107.00 527.00 v-2 q2.5 -2 5 0 v2" stroke="#fff" stroke-width="1" fill="none"/>
<rect x="107.00" y="529.00" width="2.20" height="2.20" fill="#000" />
<rect x="109.80" y="529.00" width="2.20" height="2.20" fill="#000" />
<rect x="107.00" y="531.80" width="2.20" height="2.20" fill="#000" />
<rect x="109.80" y="531.80" width="2.20" height="2.20" fill="#000" />
<rect x="131.95" y="525.50" width="7.00" height="9.00" fill="#f4f4f4" />
<rect x="128.45" y="526.50" width="7.00" height="7.00" fill="#2b5fb4" />
<text x="131.95" y="532.50" font-family='"Liberation Sans", sans-serif' font-size="6.5" fill="#fff" font-weight="bold" text-anchor="middle" style="white-space:pre" >W</text>
<rect x="156.40" y="525.50" width="7.00" height="9.00" fill="#f4f4f4" />
<rect x="152.90" y="526.50" width="7.00" height="7.00" fill="#1f8a48" />
<text x="156.40" y="532.50" font-family='"Liberation Sans", sans-serif' font-size="6.5" fill="#fff" font-weight="bold" text-anchor="middle" style="white-space:pre" >X</text>
<rect x="180.85" y="525.50" width="7.00" height="9.00" fill="#f4f4f4" />
<rect x="177.35" y="526.50" width="7.00" height="7.00" fill="#8033a0" />
<text x="180.85" y="532.50" font-family='"Liberation Sans", sans-serif' font-size="6.5" fill="#fff" font-weight="bold" text-anchor="middle" style="white-space:pre" >N</text>
<rect x="205.30" y="525.50" width="7.00" height="9.00" fill="#f4f4f4" />
<rect x="201.80" y="526.50" width="7.00" height="7.00" fill="#d4502c" />
<text x="205.30" y="532.50" font-family='"Liberation Sans", sans-serif' font-size="6.5" fill="#fff" font-weight="bold" text-anchor="middle" style="white-space:pre" >P</text>
<rect x="226.25" y="524.50" width="11.00" height="11.00" fill="#68217a" />
<path d="M228.75 528.00 l5.5 4 v-6 l-5.5 4" stroke="#fff" stroke-width="1.1" fill="none"/>
<path d="M251.20 531.00 l5 -5 l5 3 l-5 5 z" fill="#888" stroke="#ddd" stroke-width="0.6"/>
<rect x="275.65" y="525.00" width="10.00" height="10.00" fill="#c8a020" />
<rect x="276.65" y="526.00" width="8.00" height="8.00" fill="#222" />
<path d="M278.65 527.50 l4.5 2.5 l-4.5 2.5 z" fill="#f0d040"/>
<rect x="300.10" y="526.50" width="10.00" height="7.50" fill="#f6c343" />
<rect x="300.10" y="525.50" width="4.00" height="1.50" fill="#f6c343" />
<rect x="301.10" y="529.50" width="8.00" height="3.00" fill="#4aa0e8" />
<rect x="295.10" y="538.80" width="20.00" height="1.20" fill="#76b9ed" />
<rect x="324.55" y="525.00" width="10.00" height="10.00" fill="#f0b020" />
<rect x="324.05" y="527.00" width="6.00" height="6.00" fill="#e08010" />
<rect x="330.05" y="530.00" width="5.00" height="4.00" fill="#fff3c0" />
<rect x="319.55" y="538.80" width="20.00" height="1.20" fill="#76b9ed" />
<circle cx="354.00" cy="530.00" r="5" fill="#fff"/>
<rect x="353.20" y="529.00" width="1.80" height="4.50" fill="#000" />
<rect x="353.20" y="526.70" width="1.80" height="1.50" fill="#000" />
<rect x="344.00" y="538.80" width="20.00" height="1.20" fill="#76b9ed" />
<circle cx="378.45" cy="530.00" r="5" fill="#1aa3e8"/>
<text x="378.45" y="532.60" font-family='"Liberation Sans", sans-serif' font-size="7.5" fill="#fff" font-weight="bold" text-anchor="middle" style="white-space:pre" >S</text>
<rect x="368.45" y="538.80" width="20.00" height="1.20" fill="#76b9ed" />
<rect x="391.40" y="520.00" width="23.00" height="20.00" fill="#333333" />
<rect x="397.40" y="525.00" width="11.00" height="10.00" fill="#1a2fd0" />
<path d="M397.40 530.50 q2.5 -6 5.5 0 t5.5 -1 v5.5 h-11 z" fill="#e8141c"/>
<path d="M397.40 530.50 q2.5 -6 5.5 0 t5.5 -1" fill="none" stroke="#fff" stroke-width="0.7"/>
<rect x="391.40" y="538.80" width="23.00" height="1.20" fill="#76b9ed" />
<path d="M850.5 531.5 l3 -3 l3 3" stroke="#fff" stroke-width="0.8" fill="none"/>
<path d="M863.5 533.5 q1.5 -5 6 -5.5 M865.5 533.5 q1 -3 4 -3.5 M867.5 533.5 q0.6 -1.5 2 -1.6" stroke="#ddd" stroke-width="0.7" fill="none"/>
<path d="M873.5 528.5 h2 l2.5 -2 v8 l-2.5 -2 h-2 z" fill="none" stroke="#eee" stroke-width="0.6"/><path d="M879.5 528 q1.2 2.5 0 5 M881.3 527 q1.8 3.5 0 7" stroke="#eee" stroke-width="0.6" fill="none"/>
<text x="892.30" y="533.50" font-family='"Liberation Sans", sans-serif' font-size="5.8" fill="#fff" font-weight="normal" text-anchor="middle" style="white-space:pre" >ENG</text>
<text x="918.00" y="529.00" font-family='"Liberation Sans", sans-serif' font-size="5.8" fill="#fff" font-weight="normal" text-anchor="middle" style="white-space:pre" >11:37 PM</text>
<text x="918.00" y="537.30" font-family='"Liberation Sans", sans-serif' font-size="5.8" fill="#fff" font-weight="normal" text-anchor="middle" style="white-space:pre" >4/3/2017</text>
<rect x="940" y="526" width="8" height="6" fill="none" stroke="#fff" stroke-width="0.7"/><circle cx="947" cy="533" r="3" fill="#000" stroke="#fff" stroke-width="0.6"/>
<text x="947.00" y="535.00" font-family='"Liberation Sans", sans-serif' font-size="4" fill="#fff" font-weight="normal" text-anchor="middle" style="white-space:pre" >2</text>
<line x1="958.50" y1="521.00" x2="958.50" y2="540.00" stroke="#3a3a3a" stroke-width="0.8"/>
<rect x="631.00" y="113.30" width="121.00" height="28.20" fill="#9a9a9a" />
<rect x="631.50" y="113.80" width="120.00" height="27.20" fill="#f0f0f0" />
<rect x="631.50" y="113.80" width="120.00" height="12.50" fill="#ffffff" />
<rect x="633.50" y="115.50" width="8.00" height="8.00" fill="#ffe000" />
<path d="M633.5 117.3 l1.33 -1.2 l1.33 1.2 l1.33 -1.2 l1.33 1.2 l1.33 -1.2 l1.33 1.2" stroke="#ff2020" stroke-width="0.9" fill="none"/><path d="M633.5 119.8 l1.33 -1.2 l1.33 1.2 l1.33 -1.2 l1.33 1.2 l1.33 -1.2 l1.33 1.2" stroke="#20c020" stroke-width="1.5" fill="none"/><path d="M633.5 122.3 l1.33 -1.2 l1.33 1.2 l1.33 -1.2 l1.33 1.2 l1.33 -1.2 l1.33 1.2" stroke="#2040ff" stroke-width="0.9" fill="none"/>
<text x="643.00" y="122.00" font-family='"Liberation Sans", sans-serif' font-size="6" fill="#9a9a9a" font-weight="normal" text-anchor="start" style="white-space:pre" >Signal Gener...</text>
<line x1="695.00" y1="120.00" x2="700.00" y2="120.00" stroke="#999" stroke-width="0.6"/>
<rect x="716.5" y="117.5" width="4.5" height="4.5" fill="none" stroke="#ccc" stroke-width="0.5"/>
<path d="M737 117 l5 5 M742 117 l-5 5" stroke="#888" stroke-width="0.6"/>
<rect x="633.00" y="130.00" width="6.00" height="6.00" fill="#888" />
<rect x="633.70" y="130.70" width="4.60" height="4.60" fill="#fff" />
<text x="642.00" y="136.00" font-family='"Liberation Sans", sans-serif' font-size="5.8" fill="#222" font-weight="normal" text-anchor="start" style="white-space:pre" >Show Editor</text>
<rect x="675.00" y="128.50" width="62.50" height="9.00" fill="#a0a0a0" />
<rect x="676.00" y="129.50" width="61.00" height="7.50" fill="#ffffff" />
<rect x="729.00" y="129.50" width="8.00" height="7.50" fill="#e6e6e6" />
<rect x="729.00" y="136.30" width="8.00" height="0.70" fill="#6a6a6a" />
<path d="M731.00 132.00 h4 l-2 2.2 z" fill="#000"/>
<text x="677.00" y="135.20" font-family='"Liberation Sans", sans-serif' font-size="5.8" fill="#000" font-weight="normal" text-anchor="start" style="white-space:pre" >No Loopback</text>
<rect x="739.00" y="128.00" width="10.00" height="10.00" fill="#a0a0a0" />
<rect x="739.50" y="128.50" width="9.00" height="9.00" fill="#f4f4f4" />
<path d="M741.5 130 l5 3 l-5 3 z" fill="#e00000"/>
<rect x="628.20" y="142.60" width="231.20" height="69.70" fill="#7a7a7a" />
<rect x="629.00" y="143.40" width="229.60" height="68.10" fill="#d6e2ee" />
<rect x="629.20" y="143.60" width="229.20" height="15.00" fill="url(#mdit)" />
<rect x="629.20" y="143.60" width="229.20" height="1.20" fill="#dfe8f3" />
<rect x="629.20" y="157.40" width="229.20" height="1.20" fill="#deeaf6" />
<rect x="633.20" y="148.10" width="8.00" height="8.00" fill="#b06010" />
<path d="M633.2 148.1 l8 8 M641.2 148.1 l-8 8 M637.2 148.1 l4 4 l-4 4 l-4 -4 z" stroke="#6a2a80" stroke-width="0.7" fill="none"/>
<text x="643.70" y="154.40" font-family='"Liberation Sans", sans-serif' font-size="7" fill="#9a9a9a" font-weight="normal" text-anchor="start" style="white-space:pre" textLength="30" lengthAdjust="spacingAndGlyphs">Multimeter</text>
<rect x="805.00" y="147.90" width="15.5" height="9" rx="1.2" fill="#d3deea" stroke="#8a9bb0" stroke-width="0.6"/>
<rect x="810.50" y="152.90" width="5.00" height="1.40" fill="#555" />
<rect x="822.05" y="147.90" width="15.5" height="9" rx="1.2" fill="#d3deea" stroke="#8a9bb0" stroke-width="0.6"/>
<rect x="827.65" y="149.90" width="4.6" height="3.8" fill="none" stroke="#555" stroke-width="0.7"/>
<rect x="839.10" y="147.90" width="15.5" height="9" rx="1.2" fill="#d3deea" stroke="#8a9bb0" stroke-width="0.6"/>
<path d="M844.60 149.80 l4.6 4 M849.20 149.80 l-4.6 4" stroke="#555" stroke-width="0.8"/>
<rect x="632.00" y="158.30" width="223.00" height="49.50" fill="#646464" />
<rect x="633.00" y="159.30" width="221.50" height="48.00" fill="#ffffff" />
<g transform="translate(646.20,199.60) scale(1.12,1)">
<text x="0.00" y="0.00" font-family='"Liberation Serif", serif' font-size="49" fill="#0000ff" font-weight="normal" text-anchor="middle" style="white-space:pre" stroke="#0000ff" stroke-width="0.7">5</text>
</g>
<g transform="translate(678.30,199.60) scale(1.12,1)">
<text x="0.00" y="0.00" font-family='"Liberation Serif", serif' font-size="49" fill="#0000ff" font-weight="normal" text-anchor="middle" style="white-space:pre" stroke="#0000ff" stroke-width="0.7">7</text>
</g>
<g transform="translate(702.40,199.60) scale(1.0080000000000002,1)">
<text x="0.00" y="0.00" font-family='"Liberation Serif", serif' font-size="49" fill="#0000ff" font-weight="normal" text-anchor="middle" style="white-space:pre" stroke="#0000ff" stroke-width="0.7">.</text>
</g>
<g transform="translate(741.90,199.60) scale(1.12,1)">
<text x="0.00" y="0.00" font-family='"Liberation Serif", serif' font-size="49" fill="#0000ff" font-weight="normal" text-anchor="middle" style="white-space:pre" stroke="#0000ff" stroke-width="0.7">8</text>
</g>
<g transform="translate(806.40,199.60) scale(1.0080000000000002,1)">
<text x="0.00" y="0.00" font-family='"Liberation Serif", serif' font-size="49" fill="#0000ff" font-weight="normal" text-anchor="middle" style="white-space:pre" stroke="#0000ff" stroke-width="0.7">d</text>
</g>
<g transform="translate(836.80,199.60) scale(1.0080000000000002,1)">
<text x="0.00" y="0.00" font-family='"Liberation Serif", serif' font-size="49" fill="#0000ff" font-weight="normal" text-anchor="middle" style="white-space:pre" stroke="#0000ff" stroke-width="0.7">B</text>
</g>
<rect x="959.00" y="0.00" width="684.00" height="540.00" fill="#000000" />
<rect x="959.00" y="0.00" width="684.00" height="364.00" fill="#f0f0f0" />
<rect x="959.00" y="0.00" width="684.00" height="10.50" fill="#ffffff" />
<rect x="961.00" y="1.20" width="8.00" height="8.00" fill="#1a2fd0" />
<path d="M961 5.6000000000000005 Q963.0 1.6 965.0 5.2 T969 4.8 V9.2 H961 Z" fill="#e8141c"/>
<path d="M961 5.6000000000000005 Q963.0 1.6 965.0 5.2 T969 4.8" fill="none" stroke="#fff" stroke-width="0.8"/>
<text x="972.00" y="8.30" font-family='"Liberation Sans", sans-serif' font-size="7.2" fill="#111" font-weight="normal" text-anchor="start" style="white-space:pre" textLength="73.5" lengthAdjust="spacingAndGlyphs">Multi-Instrument Pro 3.6 [1]</text>
<text x="1050.50" y="8.30" font-family='"Liberation Sans", sans-serif' font-size="7.2" fill="#111" font-weight="normal" text-anchor="start" style="white-space:pre" >-</text>
<text x="1056.80" y="8.30" font-family='"Liberation Sans", sans-serif' font-size="7.2" fill="#111" font-weight="normal" text-anchor="start" style="white-space:pre" textLength="79.3" lengthAdjust="spacingAndGlyphs">[+3DP+DLG+LCR+UDP+VBM]</text>
<text x="1141.90" y="8.30" font-family='"Liberation Sans", sans-serif' font-size="7.2" fill="#111" font-weight="normal" text-anchor="start" style="white-space:pre" >-</text>
<text x="1148.20" y="8.30" font-family='"Liberation Sans", sans-serif' font-size="7.2" fill="#111" font-weight="normal" text-anchor="start" style="white-space:pre" textLength="93.4" lengthAdjust="spacingAndGlyphs">&lt;Microphone (Realtek High Defini&gt;</text>
<line x1="1584.50" y1="5.20" x2="1590.50" y2="5.20" stroke="#777" stroke-width="0.7"/>
<rect x="1607.50" y="3.20" width="3.8" height="4" fill="none" stroke="#777" stroke-width="0.7"/>
<path d="M1608.50 2.3 h3.8 v3.8" fill="none" stroke="#777" stroke-width="0.6"/>
<path d="M1629.00 2.2 l5.5 5.5 M1634.50 2.2 l-5.5 5.5" stroke="#777" stroke-width="0.7"/>
<rect x="959.00" y="10.50" width="684.00" height="10.70" fill="#ffffff" />
<rect x="960.50" y="11.00" width="16.00" height="10.00" fill="#cce8ff" />
<text x="962.00" y="18.60" font-family='"Liberation Sans", sans-serif' font-size="6.4" fill="#222" font-weight="normal" text-anchor="start" style="white-space:pre" >File</text>
<text x="979.50" y="18.60" font-family='"Liberation Sans", sans-serif' font-size="6.4" fill="#222" font-weight="normal" text-anchor="start" style="white-space:pre" >Setting</text>
<text x="1004.50" y="18.60" font-family='"Liberation Sans", sans-serif' font-size="6.4" fill="#222" font-weight="normal" text-anchor="start" style="white-space:pre" >Instrument</text>
<text x="1040.50" y="18.60" font-family='"Liberation Sans", sans-serif' font-size="6.4" fill="#222" font-weight="normal" text-anchor="start" style="white-space:pre" >Window</text>
<text x="1069.50" y="18.60" font-family='"Liberation Sans", sans-serif' font-size="6.4" fill="#222" font-weight="normal" text-anchor="start" style="white-space:pre" >Help</text>
<rect x="959.00" y="21.20" width="684.00" height="36.00" fill="#f0f0f0" />
<line x1="959.00" y1="21.60" x2="1643.00" y2="21.60" stroke="#dcdcdc" stroke-width="0.8"/>
<line x1="959.00" y1="33.80" x2="1643.00" y2="33.80" stroke="#ffffff" stroke-width="0.8"/>
<line x1="959.00" y1="33.20" x2="1643.00" y2="33.20" stroke="#d0d0d0" stroke-width="0.6"/>
<line x1="959.00" y1="45.80" x2="1643.00" y2="45.80" stroke="#ffffff" stroke-width="0.8"/>
<line x1="959.00" y1="45.20" x2="1643.00" y2="45.20" stroke="#d0d0d0" stroke-width="0.6"/>
<line x1="961.00" y1="22.00" x2="961.00" y2="45.00" stroke="#c0c0c0" stroke-width="0.8"/>
<path d="M964.00 31 l2 -5 h6 l-2 5 z" fill="#d8d8d8" stroke="#999" stroke-width="0.5"/>
<rect x="976.50" y="24.5" width="6.5" height="7" fill="#bbb" stroke="#888" stroke-width="0.5"/>
<rect x="978.00" y="24.80" width="3.50" height="2.50" fill="#eee" />
<text x="986.50" y="31.20" font-family='"Liberation Sans", sans-serif' font-size="7" fill="#111" font-weight="bold" text-anchor="start" style="white-space:pre" >Trigger</text>
<rect x="1023.00" y="22.50" width="47.00" height="11.00" fill="#a0a0a0" />
<rect x="1024.00" y="23.50" width="45.50" height="9.50" fill="#ffffff" />
<rect x="1061.50" y="23.50" width="8.00" height="9.50" fill="#e6e6e6" />
<rect x="1061.50" y="32.30" width="8.00" height="0.70" fill="#6a6a6a" />
<path d="M1063.50 27.00 h4 l-2 2.2 z" fill="#000"/>
<text x="1025.00" y="31.20" font-family='"Liberation Sans", sans-serif' font-size="6.5" fill="#000" font-weight="bold" text-anchor="start" style="white-space:pre" >Normal</text>
<rect x="1073.00" y="22.50" width="32.00" height="11.00" fill="#a0a0a0" />
<rect x="1074.00" y="23.50" width="30.50" height="9.50" fill="#f4f4f4" />
<rect x="1096.50" y="23.50" width="8.00" height="9.50" fill="#e6e6e6" />
<rect x="1096.50" y="32.30" width="8.00" height="0.70" fill="#6a6a6a" />
<path d="M1098.50 27.00 h4 l-2 2.2 z" fill="#9a9a9a"/>
<text x="1075.00" y="31.20" font-family='"Liberation Sans", sans-serif' font-size="6.5" fill="#9a9a9a" font-weight="normal" text-anchor="start" style="white-space:pre" >A</text>
<rect x="1108.00" y="22.50" width="32.00" height="11.00" fill="#a0a0a0" />
<rect x="1109.00" y="23.50" width="30.50" height="9.50" fill="#ffffff" />
<rect x="1131.50" y="23.50" width="8.00" height="9.50" fill="#e6e6e6" />
<rect x="1131.50" y="32.30" width="8.00" height="0.70" fill="#6a6a6a" />
<path d="M1133.50 27.00 h4 l-2 2.2 z" fill="#000"/>
<text x="1110.00" y="31.20" font-family='"Liberation Sans", sans-serif' font-size="6.5" fill="#000" font-weight="bold" text-anchor="start" style="white-space:pre" >Up</text>
<rect x="1143.00" y="22.50" width="39.00" height="11.00" fill="#a0a0a0" />
<rect x="1144.00" y="23.50" width="29.50" height="9.50" fill="#fff" />
<rect x="1174.00" y="23.50" width="7.50" height="9.50" fill="#e8e8e8" />
<line x1="1174.00" y1="28.00" x2="1181.50" y2="28.00" stroke="#b0b0b0" stroke-width="0.6"/>
<path d="M1176.70 26.10 h2.6 l-1.3 -1.3 z M1176.70 30.10 h2.6 l-1.3 1.3 z" fill="#555"/>
<text x="1158.50" y="31.20" font-family='"Liberation Sans", sans-serif' font-size="6.5" fill="#000" font-weight="bold" text-anchor="middle" style="white-space:pre" >0%</text>
<rect x="1186.00" y="22.50" width="40.00" height="11.00" fill="#a0a0a0" />
<rect x="1187.00" y="23.50" width="30.50" height="9.50" fill="#fff" />
<rect x="1218.00" y="23.50" width="7.50" height="9.50" fill="#e8e8e8" />
<line x1="1218.00" y1="28.00" x2="1225.50" y2="28.00" stroke="#b0b0b0" stroke-width="0.6"/>
<path d="M1220.70 26.10 h2.6 l-1.3 -1.3 z M1220.70 30.10 h2.6 l-1.3 1.3 z" fill="#555"/>
<text x="1202.00" y="31.20" font-family='"Liberation Sans", sans-serif' font-size="6.5" fill="#000" font-weight="bold" text-anchor="middle" style="white-space:pre" >0%</text>
<rect x="1230.00" y="22.50" width="34.00" height="11.00" fill="#a0a0a0" />
<rect x="1231.00" y="23.50" width="32.50" height="9.50" fill="#f4f4f4" />
<rect x="1255.50" y="23.50" width="8.00" height="9.50" fill="#e6e6e6" />
<rect x="1255.50" y="32.30" width="8.00" height="0.70" fill="#6a6a6a" />
<path d="M1257.50 27.00 h4 l-2 2.2 z" fill="#9a9a9a"/>
<text x="1232.00" y="31.20" font-family='"Liberation Sans", sans-serif' font-size="6.5" fill="#9a9a9a" font-weight="normal" text-anchor="start" style="white-space:pre" >NIL</text>
<text x="1265.00" y="31.20" font-family='"Liberation Sans", sans-serif' font-size="7" fill="#111" font-weight="bold" text-anchor="start" style="white-space:pre" >Sample</text>
<rect x="1301.00" y="22.50" width="69.00" height="11.00" fill="#a0a0a0" />
<rect x="1302.00" y="23.50" width="67.50" height="9.50" fill="#ffffff" />
<rect x="1361.50" y="23.50" width="8.00" height="9.50" fill="#e6e6e6" />
<rect x="1361.50" y="32.30" width="8.00" height="0.70" fill="#6a6a6a" />
<path d="M1363.50 27.00 h4 l-2 2.2 z" fill="#000"/>
<text x="1303.00" y="31.20" font-family='"Liberation Sans", sans-serif' font-size="6.5" fill="#000" font-weight="bold" text-anchor="start" style="white-space:pre" >48kHz</text>
<rect x="1370.00" y="22.50" width="37.00" height="11.00" fill="#a0a0a0" />
<rect x="1371.00" y="23.50" width="35.50" height="9.50" fill="#ffffff" />
<rect x="1398.50" y="23.50" width="8.00" height="9.50" fill="#e6e6e6" />
<rect x="1398.50" y="32.30" width="8.00" height="0.70" fill="#6a6a6a" />
<path d="M1400.50 27.00 h4 l-2 2.2 z" fill="#000"/>
<text x="1372.00" y="31.20" font-family='"Liberation Sans", sans-serif' font-size="6.5" fill="#000" font-weight="bold" text-anchor="start" style="white-space:pre" >A</text>
<rect x="1410.00" y="22.50" width="42.00" height="11.00" fill="#a0a0a0" />
<rect x="1411.00" y="23.50" width="40.50" height="9.50" fill="#ffffff" />
<rect x="1443.50" y="23.50" width="8.00" height="9.50" fill="#e6e6e6" />
<rect x="1443.50" y="32.30" width="8.00" height="0.70" fill="#6a6a6a" />
<path d="M1445.50 27.00 h4 l-2 2.2 z" fill="#000"/>
<text x="1412.00" y="31.20" font-family='"Liberation Sans", sans-serif' font-size="6.5" fill="#000" font-weight="bold" text-anchor="start" style="white-space:pre" >16Bit</text>
<text x="1453.00" y="31.20" font-family='"Liberation Sans", sans-serif' font-size="7" fill="#111" font-weight="bold" text-anchor="start" style="white-space:pre" >Point</text>
<rect x="1481.00" y="22.50" width="62.00" height="11.00" fill="#a0a0a0" />
<rect x="1482.00" y="23.50" width="60.50" height="9.50" fill="#f4f4f4" />
<rect x="1534.50" y="23.50" width="8.00" height="9.50" fill="#e6e6e6" />
<rect x="1534.50" y="32.30" width="8.00" height="0.70" fill="#6a6a6a" />
<path d="M1536.50 27.00 h4 l-2 2.2 z" fill="#9a9a9a"/>
<text x="1483.00" y="31.20" font-family='"Liberation Sans", sans-serif' font-size="6.5" fill="#9a9a9a" font-weight="bold" text-anchor="start" style="white-space:pre" >9600</text>
<rect x="1546.00" y="24.00" width="6.00" height="6.00" fill="#888" />
<rect x="1546.70" y="24.70" width="4.60" height="4.60" fill="#fff" />
<text x="1555.00" y="30.50" font-family='"Liberation Sans", sans-serif' font-size="7" fill="#111" font-weight="bold" text-anchor="start" style="white-space:pre" >Roll</text>
<rect x="1579.00" y="22.50" width="37.00" height="11.00" fill="#a8a8a8" />
<rect x="1579.00" y="22.50" width="36.20" height="10.20" fill="#fdfdfd" />
<rect x="1579.80" y="23.30" width="35.40" height="9.40" fill="#f0f0f0" />
<text x="1597.50" y="31.00" font-family='"Liberation Sans", sans-serif' font-size="6.8" fill="#a0a0a0" font-weight="bold" text-anchor="middle" style="white-space:pre" >Record</text>
<rect x="1618.00" y="22.50" width="26.00" height="11.00" fill="#a8a8a8" />
<rect x="1618.00" y="22.50" width="25.20" height="10.20" fill="#fdfdfd" />
<rect x="1618.80" y="23.30" width="24.40" height="9.40" fill="#f0f0f0" />
<text x="1631.00" y="31.00" font-family='"Liberation Sans", sans-serif' font-size="6.8" fill="#111" font-weight="bold" text-anchor="middle" style="white-space:pre" >Auto</text>
<circle cx="969.5" cy="40.5" r="3.5" fill="#00dd00"/>
<rect x="976.80" y="36.00" width="8.50" height="8.50" fill="#00f000" />
<path d="M977.0999999999999 40.5 q2 -4.5 3.9 0 t3.9 0" fill="none" stroke="#c8c800" stroke-width="0.8"/>
<rect x="988.10" y="36.00" width="8.50" height="8.50" fill="#1020f0" />
<rect x="989.10" y="37.50" width="1.50" height="6.50" fill="#b0a040" />
<rect x="991.60" y="40.50" width="1.50" height="3.50" fill="#b0a040" />
<rect x="994.10" y="42.00" width="1.50" height="2.00" fill="#b0a040" />
<rect x="988.10" y="43.60" width="8.50" height="0.90" fill="#f0d000" />
<rect x="999.40" y="36.00" width="8.50" height="8.50" fill="#7a2a90" />
<circle cx="1000.90" cy="37.50" r="1.1" fill="#d08030"/>
<circle cx="1000.90" cy="40.25" r="1.1" fill="#d08030"/>
<circle cx="1000.90" cy="43.00" r="1.1" fill="#d08030"/>
<circle cx="1003.65" cy="37.50" r="1.1" fill="#d08030"/>
<circle cx="1003.65" cy="40.25" r="1.1" fill="#d08030"/>
<circle cx="1003.65" cy="43.00" r="1.1" fill="#d08030"/>
<circle cx="1006.40" cy="37.50" r="1.1" fill="#d08030"/>
<circle cx="1006.40" cy="40.25" r="1.1" fill="#d08030"/>
<circle cx="1006.40" cy="43.00" r="1.1" fill="#d08030"/>
<circle cx="1014.8999999999999" cy="40.5" r="4" fill="#e8e8e8" stroke="#222" stroke-width="0.9"/>
<path d="M1012.1999999999998 41.0 l3 -3 l3 2 z" fill="#20b020"/><circle cx="1016.1999999999998" cy="42.0" r="1.3" fill="#f0c000"/>
<rect x="1022.00" y="36.00" width="8.50" height="8.50" fill="#ffe000" />
<path d="M1021.9999999999998 38.0 l1.4 -1.2 l1.4 1.2 l1.4 -1.2 l1.4 1.2 l1.4 -1.2 l1.4 1.2" stroke="#ff2020" stroke-width="0.9" fill="none"/>
<path d="M1021.9999999999998 40.5 l1.4 -1.2 l1.4 1.2 l1.4 -1.2 l1.4 1.2 l1.4 -1.2 l1.4 1.2" stroke="#20c020" stroke-width="1.6" fill="none"/>
<path d="M1021.9999999999998 43.0 l1.4 -1.2 l1.4 1.2 l1.4 -1.2 l1.4 1.2 l1.4 -1.2 l1.4 1.2" stroke="#2040ff" stroke-width="0.9" fill="none"/>
<rect x="1033.30" y="36.00" width="8.50" height="8.50" fill="#00b8f8" />
<rect x="1033.90" y="36.60" width="2.20" height="2.20" fill="#003060" />
<rect x="1033.90" y="41.80" width="2.20" height="2.20" fill="#003060" />
<rect x="1036.50" y="39.20" width="2.20" height="2.20" fill="#003060" />
<rect x="1039.10" y="36.60" width="2.20" height="2.20" fill="#003060" />
<rect x="1039.10" y="41.80" width="2.20" height="2.20" fill="#003060" />
<path d="M1044.5999999999997 38.00 l1.4 -1 l1.4 1 l1.4 -1 l1.4 1 l1.4 -1 l1.4 1" stroke="#ff2020" stroke-width="0.8" fill="none"/>
<path d="M1044.5999999999997 40.60 l1.4 -1 l1.4 1 l1.4 -1 l1.4 1 l1.4 -1 l1.4 1" stroke="#20c020" stroke-width="0.8" fill="none"/>
<path d="M1044.5999999999997 43.20 l1.4 -1 l1.4 1 l1.4 -1 l1.4 1 l1.4 -1 l1.4 1" stroke="#2040ff" stroke-width="0.8" fill="none"/>
<circle cx="1057.8999999999996" cy="38.0" r="1.6" fill="none" stroke="#e02020" stroke-width="0.7"/><circle cx="1060.8999999999996" cy="38.0" r="1.6" fill="none" stroke="#20a020" stroke-width="0.7"/><circle cx="1059.8999999999996" cy="42.0" r="2" fill="none" stroke="#333" stroke-width="0.7"/>
<line x1="1068.20" y1="35.50" x2="1068.20" y2="44.50" stroke="#c8c8c8" stroke-width="0.8"/>
<path d="M1075.2849999999996 36.0 h2.5 v2.5 l3 5.5 h-8.5 l3 -5.5 z" fill="#3060ff" stroke="#0020a0" stroke-width="0.5"/>
<text x="1084.08" y="44.00" font-family='"Liberation Sans", sans-serif' font-size="6.5" fill="#999" font-weight="normal" text-anchor="start" style="white-space:pre" >⊥A</text>
<text x="1095.38" y="44.00" font-family='"Liberation Sans", sans-serif' font-size="6.5" fill="#999" font-weight="normal" text-anchor="start" style="white-space:pre" >⊥B</text>
<path d="M1107.1849999999995 37.0 l6.5 7" stroke="#1060c0" stroke-width="1.8"/>
<path d="M1118.4849999999994 39.0 h2 l3 -2.5 v8.5 l-3 -2.5 h-2 z" fill="#3050e0"/><path d="M1124.4849999999994 38.0 q1.5 2.5 0 5" stroke="#3050e0" stroke-width="0.8" fill="none"/>
<path d="M1130.2849999999994 37.0 l6 3.5 l-6 3.5 z" fill="#10c010"/>
<path d="M1141.5849999999994 37.0 l6 3.5 l-6 3.5 z" fill="#10c010"/><circle cx="1147.0849999999994" cy="43.5" r="1.5" fill="#10c010"/>
<rect x="1151.00" y="34.50" width="35.00" height="11.00" fill="#a0a0a0" />
<rect x="1152.00" y="35.50" width="33.50" height="9.50" fill="#ffffff" />
<rect x="1177.50" y="35.50" width="8.00" height="9.50" fill="#e6e6e6" />
<rect x="1177.50" y="44.30" width="8.00" height="0.70" fill="#6a6a6a" />
<path d="M1179.50 39.00 h4 l-2 2.2 z" fill="#a8a8a8"/>
<text x="1153.00" y="43.20" font-family='"Liberation Sans", sans-serif' font-size="6.5" fill="#333" font-weight="normal" text-anchor="start" style="white-space:pre" >AC</text>
<rect x="1188.00" y="34.50" width="35.00" height="11.00" fill="#a0a0a0" />
<rect x="1189.00" y="35.50" width="33.50" height="9.50" fill="#ffffff" />
<rect x="1214.50" y="35.50" width="8.00" height="9.50" fill="#e6e6e6" />
<rect x="1214.50" y="44.30" width="8.00" height="0.70" fill="#6a6a6a" />
<path d="M1216.50 39.00 h4 l-2 2.2 z" fill="#a8a8a8"/>
<text x="1190.00" y="43.20" font-family='"Liberation Sans", sans-serif' font-size="6.5" fill="#333" font-weight="normal" text-anchor="start" style="white-space:pre" >AC</text>
<rect x="1226.00" y="34.50" width="74.00" height="11.00" fill="#a0a0a0" />
<rect x="1227.00" y="35.50" width="72.50" height="9.50" fill="#ffffff" />
<rect x="1291.50" y="35.50" width="8.00" height="9.50" fill="#e6e6e6" />
<rect x="1291.50" y="44.30" width="8.00" height="0.70" fill="#6a6a6a" />
<path d="M1293.50 39.00 h4 l-2 2.2 z" fill="#a8a8a8"/>
<text x="1228.00" y="43.20" font-family='"Liberation Sans", sans-serif' font-size="6.5" fill="#333" font-weight="normal" text-anchor="start" style="white-space:pre" >± 1V</text>
<rect x="1302.30" y="34.50" width="74.30" height="11.00" fill="#a0a0a0" />
<rect x="1303.30" y="35.50" width="72.80" height="9.50" fill="#ffffff" />
<rect x="1368.10" y="35.50" width="8.00" height="9.50" fill="#e6e6e6" />
<rect x="1368.10" y="44.30" width="8.00" height="0.70" fill="#6a6a6a" />
<path d="M1370.10 39.00 h4 l-2 2.2 z" fill="#a8a8a8"/>
<text x="1304.30" y="43.20" font-family='"Liberation Sans", sans-serif' font-size="6.5" fill="#333" font-weight="normal" text-anchor="start" style="white-space:pre" >± 1V</text>
<text x="1378.00" y="43.00" font-family='"Liberation Sans", sans-serif' font-size="7" fill="#111" font-weight="bold" text-anchor="start" style="white-space:pre" >Probe</text>
<rect x="1410.00" y="34.50" width="25.00" height="11.00" fill="#a0a0a0" />
<rect x="1411.00" y="35.50" width="23.50" height="9.50" fill="#ffffff" />
<rect x="1426.50" y="35.50" width="8.00" height="9.50" fill="#e6e6e6" />
<rect x="1426.50" y="44.30" width="8.00" height="0.70" fill="#6a6a6a" />
<path d="M1428.50 39.00 h4 l-2 2.2 z" fill="#000"/>
<text x="1412.00" y="43.20" font-family='"Liberation Sans", sans-serif' font-size="6.5" fill="#1010e0" font-weight="normal" text-anchor="start" style="white-space:pre" >1</text>
<rect x="1436.00" y="34.50" width="24.00" height="11.00" fill="#a0a0a0" />
<rect x="1437.00" y="35.50" width="22.50" height="9.50" fill="#ffffff" />
<rect x="1451.50" y="35.50" width="8.00" height="9.50" fill="#e6e6e6" />
<rect x="1451.50" y="44.30" width="8.00" height="0.70" fill="#6a6a6a" />
<path d="M1453.50 39.00 h4 l-2 2.2 z" fill="#a8a8a8"/>
<text x="1438.00" y="43.20" font-family='"Liberation Sans", sans-serif' font-size="6.5" fill="#333" font-weight="normal" text-anchor="start" style="white-space:pre" >1</text>
<rect x="1459.00" y="34.50" width="184.00" height="11.00" fill="#f0f0f0" />
<line x1="1459.00" y1="35.00" x2="1643.00" y2="35.00" stroke="#c8c8c8" stroke-width="0.6"/>
<line x1="1459.00" y1="39.80" x2="1643.00" y2="39.80" stroke="#c8c8c8" stroke-width="0.6"/>
<line x1="1459.00" y1="44.50" x2="1643.00" y2="44.50" stroke="#c8c8c8" stroke-width="0.6"/>
<line x1="1459.00" y1="34.50" x2="1459.00" y2="45.00" stroke="#b8b8b8" stroke-width="0.6"/>
<rect x="1460.00" y="35.30" width="17.00" height="3.80" fill="#00e000" />
<g transform="translate(1551.00,39.3) scale(0.75,1)">
<text x="0.00" y="0.00" font-family='"Liberation Mono", monospace' font-size="5.2" fill="#0000e0" font-weight="bold" text-anchor="middle" style="white-space:pre" >9.7%(-20.3 dBFS)</text>
</g>
<text x="981.20" y="54.60" font-family='"Liberation Sans", sans-serif' font-size="6.4" fill="#3a1a08" font-weight="normal" text-anchor="middle" style="white-space:pre" >Home</text>
<text x="1015.67" y="54.60" font-family='"Liberation Sans", sans-serif' font-size="6.4" fill="#141430" font-weight="normal" text-anchor="middle" style="white-space:pre" >OCT3</text>
<text x="1050.14" y="54.60" font-family='"Liberation Sans", sans-serif' font-size="6.4" fill="#141430" font-weight="normal" text-anchor="middle" style="white-space:pre" >OCT6</text>
<text x="1084.61" y="54.60" font-family='"Liberation Sans", sans-serif' font-size="6.4" fill="#141430" font-weight="normal" text-anchor="middle" style="white-space:pre" >OCT12</text>
<text x="1119.08" y="54.60" font-family='"Liberation Sans", sans-serif' font-size="6.4" fill="#181840" font-weight="normal" text-anchor="middle" style="white-space:pre" >Polarity</text>
<text x="1153.55" y="54.60" font-family='"Liberation Sans", sans-serif' font-size="6.4" fill="#181840" font-weight="normal" text-anchor="middle" style="white-space:pre" >NoiseL</text>
<text x="1188.02" y="54.60" font-family='"Liberation Sans", sans-serif' font-size="6.4" fill="#401808" font-weight="normal" text-anchor="middle" style="white-space:pre" >NoiseLa</text>
<text x="1222.49" y="54.60" font-family='"Liberation Sans", sans-serif' font-size="6.4" fill="#181848" font-weight="normal" text-anchor="middle" style="white-space:pre" >THD</text>
<text x="1256.96" y="54.60" font-family='"Liberation Sans", sans-serif' font-size="6.4" fill="#202040" font-weight="normal" text-anchor="middle" style="white-space:pre" >THDa</text>
<text x="1291.43" y="54.60" font-family='"Liberation Sans", sans-serif' font-size="6.4" fill="#181848" font-weight="normal" text-anchor="middle" style="white-space:pre" >IMDsmp</text>
<text x="1325.90" y="54.60" font-family='"Liberation Sans", sans-serif' font-size="6.4" fill="#202040" font-weight="normal" text-anchor="middle" style="white-space:pre" >IMDdin</text>
<text x="1360.37" y="54.60" font-family='"Liberation Sans", sans-serif' font-size="6.4" fill="#301830" font-weight="normal" text-anchor="middle" style="white-space:pre" >IMDccif</text>
<text x="1394.84" y="54.60" font-family='"Liberation Sans", sans-serif' font-size="6.4" fill="#202038" font-weight="normal" text-anchor="middle" style="white-space:pre" >CrossTlk</text>
<text x="1429.31" y="54.60" font-family='"Liberation Sans", sans-serif' font-size="6.4" fill="#402020" font-weight="normal" text-anchor="middle" style="white-space:pre" >FRwhite</text>
<text x="1463.78" y="54.60" font-family='"Liberation Sans", sans-serif' font-size="6.4" fill="#301830" font-weight="normal" text-anchor="middle" style="white-space:pre" >FRswp</text>
<text x="1498.25" y="54.60" font-family='"Liberation Sans", sans-serif' font-size="6.4" fill="#181830" font-weight="normal" text-anchor="middle" style="white-space:pre" >BodePlot</text>
<text x="1532.72" y="54.60" font-family='"Liberation Sans", sans-serif' font-size="6.4" fill="#181830" font-weight="normal" text-anchor="middle" style="white-space:pre" >THD-f</text>
<text x="1567.19" y="54.60" font-family='"Liberation Sans", sans-serif' font-size="6.4" fill="#181830" font-weight="normal" text-anchor="middle" style="white-space:pre" >THD-P</text>
<text x="1601.66" y="54.60" font-family='"Liberation Sans", sans-serif' font-size="6.4" fill="#202030" font-weight="normal" text-anchor="middle" style="white-space:pre" >IMD-P</text>
<text x="1636.13" y="54.60" font-family='"Liberation Sans", sans-serif' font-size="6.4" fill="#182030" font-weight="normal" text-anchor="middle" style="white-space:pre" >AudioTst</text>
<line x1="999.44" y1="46.50" x2="999.44" y2="56.50" stroke="#d0d0d0" stroke-width="0.6"/>
<rect x="959.00" y="56.80" width="684.00" height="1.10" fill="#5c5c5c" />
<rect x="959.00" y="57.80" width="684.00" height="293.50" fill="#ababab" />
<rect x="959.00" y="57.80" width="1.50" height="293.50" fill="#7a7a7a" />
<rect x="1641.00" y="57.80" width="2.00" height="293.50" fill="#e8e8e8" />
<rect x="960.50" y="57.80" width="434.00" height="147.40" fill="#d6e2ee" />
<line x1="960.50" y1="58.20" x2="1394.50" y2="58.20" stroke="#9aa8b8" stroke-width="0.8"/>
<rect x="961.00" y="58.30" width="433.00" height="16.00" fill="url(#mdit)" />
<rect x="961.00" y="58.30" width="433.00" height="1.20" fill="#dfe8f3" />
<rect x="961.00" y="73.10" width="433.00" height="1.20" fill="#deeaf6" />
<rect x="965.00" y="62.80" width="8.00" height="8.00" fill="#00e000" />
<path d="M965.5 66.8 q2 -4 3.5 0 t3.5 0" fill="none" stroke="#a0a000" stroke-width="0.8"/>
<text x="975.50" y="70.10" font-family='"Liberation Sans", sans-serif' font-size="7" fill="#9a9a9a" font-weight="normal" text-anchor="start" style="white-space:pre" textLength="33.3" lengthAdjust="spacingAndGlyphs">Oscilloscope</text>
<rect x="1340.60" y="62.60" width="15.5" height="9" rx="1.2" fill="#d3deea" stroke="#8a9bb0" stroke-width="0.6"/>
<rect x="1346.10" y="67.60" width="5.00" height="1.40" fill="#555" />
<rect x="1357.65" y="62.60" width="15.5" height="9" rx="1.2" fill="#d3deea" stroke="#8a9bb0" stroke-width="0.6"/>
<rect x="1363.25" y="64.60" width="4.6" height="3.8" fill="none" stroke="#555" stroke-width="0.7"/>
<rect x="1374.70" y="62.60" width="15.5" height="9" rx="1.2" fill="#d3deea" stroke="#8a9bb0" stroke-width="0.6"/>
<path d="M1380.20 64.50 l4.6 4 M1384.80 64.50 l-4.6 4" stroke="#555" stroke-width="0.8"/>
<rect x="965.50" y="74.00" width="425.00" height="127.70" fill="#ffffff" />
<rect x="965.50" y="74.00" width="425.00" height="1.00" fill="#5e5e5e" />
<rect x="965.50" y="74.00" width="1.00" height="127.70" fill="#6a6a6a" />
<line x1="1023.61" y1="85.20" x2="1023.61" y2="187.40" stroke="#00e600" stroke-width="1" stroke-dasharray="1.6 1.6"/>
<line x1="1063.02" y1="85.20" x2="1063.02" y2="187.40" stroke="#00e600" stroke-width="1" stroke-dasharray="1.6 1.6"/>
<line x1="1102.43" y1="85.20" x2="1102.43" y2="187.40" stroke="#00e600" stroke-width="1" stroke-dasharray="1.6 1.6"/>
<line x1="1141.84" y1="85.20" x2="1141.84" y2="187.40" stroke="#00e600" stroke-width="1" stroke-dasharray="1.6 1.6"/>
<line x1="1181.25" y1="85.20" x2="1181.25" y2="187.40" stroke="#00e600" stroke-width="1" stroke-dasharray="1.6 1.6"/>
<line x1="1220.66" y1="85.20" x2="1220.66" y2="187.40" stroke="#00e600" stroke-width="1" stroke-dasharray="1.6 1.6"/>
<line x1="1260.07" y1="85.20" x2="1260.07" y2="187.40" stroke="#00e600" stroke-width="1" stroke-dasharray="1.6 1.6"/>
<line x1="1299.48" y1="85.20" x2="1299.48" y2="187.40" stroke="#00e600" stroke-width="1" stroke-dasharray="1.6 1.6"/>
<line x1="1338.89" y1="85.20" x2="1338.89" y2="187.40" stroke="#00e600" stroke-width="1" stroke-dasharray="1.6 1.6"/>
<line x1="984.20" y1="95.42" x2="1378.30" y2="95.42" stroke="#00e600" stroke-width="1" stroke-dasharray="1.6 1.6"/>
<line x1="984.20" y1="105.64" x2="1378.30" y2="105.64" stroke="#00e600" stroke-width="1" stroke-dasharray="1.6 1.6"/>
<line x1="984.20" y1="115.86" x2="1378.30" y2="115.86" stroke="#00e600" stroke-width="1" stroke-dasharray="1.6 1.6"/>
<line x1="984.20" y1="126.08" x2="1378.30" y2="126.08" stroke="#00e600" stroke-width="1" stroke-dasharray="1.6 1.6"/>
<line x1="984.20" y1="136.30" x2="1378.30" y2="136.30" stroke="#00e600" stroke-width="1" stroke-dasharray="1.6 1.6"/>
<line x1="984.20" y1="146.52" x2="1378.30" y2="146.52" stroke="#00e600" stroke-width="1" stroke-dasharray="1.6 1.6"/>
<line x1="984.20" y1="156.74" x2="1378.30" y2="156.74" stroke="#00e600" stroke-width="1" stroke-dasharray="1.6 1.6"/>
<line x1="984.20" y1="166.96" x2="1378.30" y2="166.96" stroke="#00e600" stroke-width="1" stroke-dasharray="1.6 1.6"/>
<line x1="984.20" y1="177.18" x2="1378.30" y2="177.18" stroke="#00e600" stroke-width="1" stroke-dasharray="1.6 1.6"/>
<rect x="984.20" y="85.20" width="394.10" height="102.20" fill="none" stroke="#40ff40" stroke-width="1"/>
<g transform="translate(969.00,79.20) scale(0.893,1)">
<text x="0.00" y="0.00" font-family='"Liberation Mono", monospace' font-size="5.6" fill="#0000ff" font-weight="bold" text-anchor="start" style="white-space:pre" >A (V)</text>
</g>
<g transform="translate(1079.00,79.20) scale(0.893,1)">
<text x="0.00" y="0.00" font-family='"Liberation Mono", monospace' font-size="5.6" fill="#0000ff" font-weight="bold" text-anchor="start" style="white-space:pre" >A: Max=   97.17 mV  Min=  -80.87 mV  Mean=     -318 uV  RMS=   16.669 mV</text>
</g>
<g transform="translate(982.70,87.20) scale(0.893,1)">
<text x="0.00" y="0.00" font-family='"Liberation Mono", monospace' font-size="5.6" fill="#0000ff" font-weight="bold" text-anchor="end" style="white-space:pre" >1</text>
</g>
<g transform="translate(982.70,97.42) scale(0.893,1)">
<text x="0.00" y="0.00" font-family='"Liberation Mono", monospace' font-size="5.6" fill="#0000ff" font-weight="bold" text-anchor="end" style="white-space:pre" >0.8</text>
</g>
<g transform="translate(982.70,107.64) scale(0.893,1)">
<text x="0.00" y="0.00" font-family='"Liberation Mono", monospace' font-size="5.6" fill="#0000ff" font-weight="bold" text-anchor="end" style="white-space:pre" >0.6</text>
</g>
<g transform="translate(982.70,117.86) scale(0.893,1)">
<text x="0.00" y="0.00" font-family='"Liberation Mono", monospace' font-size="5.6" fill="#0000ff" font-weight="bold" text-anchor="end" style="white-space:pre" >0.4</text>
</g>
<g transform="translate(982.70,128.08) scale(0.893,1)">
<text x="0.00" y="0.00" font-family='"Liberation Mono", monospace' font-size="5.6" fill="#0000ff" font-weight="bold" text-anchor="end" style="white-space:pre" >0.2</text>
</g>
<g transform="translate(982.70,138.30) scale(0.893,1)">
<text x="0.00" y="0.00" font-family='"Liberation Mono", monospace' font-size="5.6" fill="#0000ff" font-weight="bold" text-anchor="end" style="white-space:pre" >0</text>
</g>
<g transform="translate(982.70,148.52) scale(0.893,1)">
<text x="0.00" y="0.00" font-family='"Liberation Mono", monospace' font-size="5.6" fill="#0000ff" font-weight="bold" text-anchor="end" style="white-space:pre" >-0.2</text>
</g>
<g transform="translate(982.70,158.74) scale(0.893,1)">
<text x="0.00" y="0.00" font-family='"Liberation Mono", monospace' font-size="5.6" fill="#0000ff" font-weight="bold" text-anchor="end" style="white-space:pre" >-0.4</text>
</g>
<g transform="translate(982.70,168.96) scale(0.893,1)">
<text x="0.00" y="0.00" font-family='"Liberation Mono", monospace' font-size="5.6" fill="#0000ff" font-weight="bold" text-anchor="end" style="white-space:pre" >-0.6</text>
</g>
<g transform="translate(982.70,179.18) scale(0.893,1)">
<text x="0.00" y="0.00" font-family='"Liberation Mono", monospace' font-size="5.6" fill="#0000ff" font-weight="bold" text-anchor="end" style="white-space:pre" >-0.8</text>
</g>
<g transform="translate(982.70,189.40) scale(0.893,1)">
<text x="0.00" y="0.00" font-family='"Liberation Mono", monospace' font-size="5.6" fill="#0000ff" font-weight="bold" text-anchor="end" style="white-space:pre" >-1</text>
</g>
<g transform="translate(984.20,192.90) scale(0.893,1)">
<text x="0.00" y="0.00" font-family='"Liberation Mono", monospace' font-size="5.6" fill="#111" font-weight="bold" text-anchor="middle" style="white-space:pre" >0</text>
</g>
<g transform="translate(1023.61,192.90) scale(0.893,1)">
<text x="0.00" y="0.00" font-family='"Liberation Mono", monospace' font-size="5.6" fill="#111" font-weight="bold" text-anchor="middle" style="white-space:pre" >20</text>
</g>
<g transform="translate(1063.02,192.90) scale(0.893,1)">
<text x="0.00" y="0.00" font-family='"Liberation Mono", monospace' font-size="5.6" fill="#111" font-weight="bold" text-anchor="middle" style="white-space:pre" >40</text>
</g>
<g transform="translate(1102.43,192.90) scale(0.893,1)">
<text x="0.00" y="0.00" font-family='"Liberation Mono", monospace' font-size="5.6" fill="#111" font-weight="bold" text-anchor="middle" style="white-space:pre" >60</text>
</g>
<g transform="translate(1141.84,192.90) scale(0.893,1)">
<text x="0.00" y="0.00" font-family='"Liberation Mono", monospace' font-size="5.6" fill="#111" font-weight="bold" text-anchor="middle" style="white-space:pre" >80</text>
</g>
<g transform="translate(1181.25,192.90) scale(0.893,1)">
<text x="0.00" y="0.00" font-family='"Liberation Mono", monospace' font-size="5.6" fill="#111" font-weight="bold" text-anchor="middle" style="white-space:pre" >100</text>
</g>
<g transform="translate(1220.66,192.90) scale(0.893,1)">
<text x="0.00" y="0.00" font-family='"Liberation Mono", monospace' font-size="5.6" fill="#111" font-weight="bold" text-anchor="middle" style="white-space:pre" >120</text>
</g>
<g transform="translate(1260.07,192.90) scale(0.893,1)">
<text x="0.00" y="0.00" font-family='"Liberation Mono", monospace' font-size="5.6" fill="#111" font-weight="bold" text-anchor="middle" style="white-space:pre" >140</text>
</g>
<g transform="translate(1299.48,192.90) scale(0.893,1)">
<text x="0.00" y="0.00" font-family='"Liberation Mono", monospace' font-size="5.6" fill="#111" font-weight="bold" text-anchor="middle" style="white-space:pre" >160</text>
</g>
<g transform="translate(1338.89,192.90) scale(0.893,1)">
<text x="0.00" y="0.00" font-family='"Liberation Mono", monospace' font-size="5.6" fill="#111" font-weight="bold" text-anchor="middle" style="white-space:pre" >180</text>
</g>
<g transform="translate(1378.30,192.90) scale(0.893,1)">
<text x="0.00" y="0.00" font-family='"Liberation Mono", monospace' font-size="5.6" fill="#111" font-weight="bold" text-anchor="middle" style="white-space:pre" >200</text>
</g>
<g transform="translate(964.50,197.60) scale(0.893,1)">
<text x="0.00" y="0.00" font-family='"Liberation Mono", monospace' font-size="5.6" fill="#111" font-weight="bold" text-anchor="start" style="white-space:pre" >+23:37:56:300</text>
</g>
<g transform="translate(1181.25,196.60) scale(0.893,1)">
<text x="0.00" y="0.00" font-family='"Liberation Mono", monospace' font-size="5.6" fill="#111" font-weight="bold" text-anchor="middle" style="white-space:pre" >WAVEFORM</text>
</g>
<g transform="translate(1379.30,196.60) scale(0.893,1)">
<text x="0.00" y="0.00" font-family='"Liberation Mono", monospace' font-size="5.04" fill="#111" font-weight="bold" text-anchor="middle" style="white-space:pre" >ms</text>
</g>
<text x="1376.80" y="92.40" font-family='"Liberation Serif", serif' font-size="7.5" fill="#ff00ff" font-weight="bold" text-anchor="end" style="white-space:pre" >N1</text>
<polyline points="984.2,132.20 985.2,133.90 986.2,137.57 987.2,140.14 988.2,139.97 989.2,138.48 990.2,136.25 991.2,134.02 992.2,132.53 993.2,132.22 994.2,132.53 995.2,133.21 996.2,134.17 997.2,135.31 998.2,136.51 999.2,137.64 1000.2,138.58 1001.2,139.22 1002.2,139.49 1003.2,139.43 1004.2,139.14 1005.2,138.67 1006.2,138.04 1007.2,137.30 1008.2,136.53 1009.2,135.78 1010.2,135.11 1011.2,134.58 1012.2,134.23 1013.2,134.10 1014.2,134.24 1015.2,134.69 1016.2,135.36 1017.2,136.11 1018.2,136.76 1019.2,137.19 1020.2,137.30 1021.2,137.20 1022.2,136.99 1023.2,136.72 1024.2,136.46 1025.2,136.27 1026.2,136.20 1027.2,136.21 1028.2,136.24 1029.2,136.29 1030.2,136.35 1031.2,136.41 1032.2,136.46 1033.2,136.49 1034.2,136.50 1035.2,136.50 1036.2,136.50 1037.2,136.50 1038.2,136.50 1039.2,136.50 1040.2,137.10 1041.2,137.10 1042.2,137.10 1043.2,137.10 1044.2,137.10 1045.2,137.10 1046.2,137.10 1047.2,136.50 1048.2,136.50 1049.2,136.50 1050.2,136.50 1051.2,136.50 1052.2,136.50 1053.2,136.50 1054.2,136.50 1055.2,136.50 1056.2,136.50 1057.2,136.50 1058.2,136.50 1059.2,136.50 1060.2,136.50 1061.2,136.50 1062.2,136.50 1063.2,136.50 1064.2,136.50 1065.2,136.50 1066.2,136.50 1067.2,136.50 1068.2,136.50 1069.2,136.50 1070.2,136.50 1071.2,136.50 1072.2,136.50 1073.2,136.50 1074.2,136.50 1075.2,135.50 1076.2,135.50 1077.2,135.50 1078.2,135.50 1079.2,135.50 1080.2,135.50 1081.2,135.50 1082.2,135.50 1083.2,135.50 1084.2,135.50 1085.2,135.50 1086.2,135.50 1087.2,135.50 1088.2,135.50 1089.2,135.50 1090.2,135.50 1091.2,135.50 1092.2,135.50 1093.2,135.50 1094.2,135.50 1095.2,135.50 1096.2,135.50 1097.2,135.50 1098.2,135.50 1099.2,135.50 1100.2,135.50 1101.2,135.50 1102.2,135.50 1103.2,135.50 1104.2,135.50 1105.2,135.50 1106.2,135.50 1107.2,135.50 1108.2,135.50 1109.2,135.50 1110.2,135.50 1111.2,135.50 1112.2,135.50 1113.2,135.50 1114.2,135.50 1115.2,135.50 1116.2,135.50 1117.2,135.50 1118.2,135.50 1119.2,135.50 1120.2,135.50 1121.2,135.50 1122.2,135.50 1123.2,135.50 1124.2,135.50 1125.2,135.50 1126.2,135.50 1127.2,135.50 1128.2,137.10 1129.2,137.10 1130.2,137.10 1131.2,137.10 1132.2,137.10 1133.2,137.10 1134.2,137.10 1135.2,137.10 1136.2,137.10 1137.2,137.10 1138.2,137.10 1139.2,137.10 1140.2,137.10 1141.2,137.10 1142.2,137.10 1143.2,137.10 1144.2,137.10 1145.2,137.10 1146.2,137.10 1147.2,137.10 1148.2,137.10 1149.2,137.10 1150.2,137.10 1151.2,137.10 1152.2,137.10 1153.2,137.10 1154.2,137.10 1155.2,137.10 1156.2,137.10 1157.2,137.10 1158.2,137.10 1159.2,137.10 1160.2,137.10 1161.2,136.50 1162.2,136.50 1163.2,136.50 1164.2,136.50 1165.2,136.50 1166.2,136.50 1167.2,136.50 1168.2,136.50 1169.2,136.50 1170.2,136.50 1171.2,136.50 1172.2,136.50 1173.2,136.50 1174.2,136.50 1175.2,136.50 1176.2,136.50 1177.2,136.50 1178.2,136.50 1179.2,136.50 1180.2,136.50 1181.2,136.50 1182.2,136.50 1183.2,136.50 1184.2,136.50 1185.2,136.50 1186.2,136.50 1187.2,136.50 1188.2,136.50 1189.2,136.50 1190.2,136.50 1191.2,136.50 1192.2,136.50 1193.2,136.50 1194.2,136.50 1195.2,136.50 1196.2,136.50 1197.2,136.50 1198.2,135.50 1199.2,135.50 1200.2,135.50 1201.2,135.50 1202.2,135.50 1203.2,135.50 1204.2,135.50 1205.2,135.50 1206.2,135.50 1207.2,135.50 1208.2,135.50 1209.2,135.50 1210.2,135.50 1211.2,135.50 1212.2,135.50 1213.2,135.50 1214.2,135.50 1215.2,135.50 1216.2,135.50 1217.2,135.50 1218.2,136.50 1219.2,136.50 1220.2,136.50 1221.2,136.50 1222.2,136.50 1223.2,136.50 1224.2,136.50 1225.2,136.50 1226.2,136.50 1227.2,136.50 1228.2,136.50 1229.2,136.50 1230.2,136.50 1231.2,136.50 1232.2,136.50 1233.2,136.50 1234.2,136.50 1235.2,136.50 1236.2,136.50 1237.2,136.50 1238.2,136.50 1239.2,136.50 1240.2,135.50 1241.2,135.50 1242.2,135.50 1243.2,135.50 1244.2,135.50 1245.2,135.50 1246.2,135.50 1247.2,135.50 1248.2,135.50 1249.2,135.50 1250.2,135.50 1251.2,135.50 1252.2,135.50 1253.2,135.50 1254.2,135.50 1255.2,135.50 1256.2,135.50 1257.2,135.50 1258.2,135.50 1259.2,135.50 1260.2,135.50 1261.2,135.50 1262.2,135.50 1263.2,135.50 1264.2,135.50 1265.2,135.50 1266.2,135.50 1267.2,135.50 1268.2,135.50 1269.2,135.50 1270.2,135.50 1271.2,136.50 1272.2,136.50 1273.2,136.50 1274.2,136.50 1275.2,136.50 1276.2,136.50 1277.2,136.50 1278.2,136.50 1279.2,135.50 1280.2,135.50 1281.2,135.50 1282.2,135.50 1283.2,135.50 1284.2,135.50 1285.2,135.50 1286.2,135.50 1287.2,135.50 1288.2,135.50 1289.2,135.50 1290.2,135.50 1291.2,135.50 1292.2,135.50 1293.2,135.50 1294.2,135.50 1295.2,135.50 1296.2,135.50 1297.2,135.50 1298.2,135.50 1299.2,136.50 1300.2,136.50 1301.2,136.50 1302.2,136.50 1303.2,136.50 1304.2,136.50 1305.2,136.50 1306.2,136.50 1307.2,136.50 1308.2,136.50 1309.2,136.50 1310.2,136.50 1311.2,136.50 1312.2,136.50 1313.2,136.50 1314.2,136.50 1315.2,136.50 1316.2,136.50 1317.2,136.50 1318.2,136.50 1319.2,136.50 1320.2,136.50 1321.2,136.50 1322.2,135.50 1323.2,135.50 1324.2,135.50 1325.2,135.50 1326.2,135.50 1327.2,135.50 1328.2,135.50 1329.2,135.50 1330.2,135.50 1331.2,135.50 1332.2,136.50 1333.2,136.50 1334.2,136.50 1335.2,136.50 1336.2,136.50 1337.2,136.50 1338.2,136.50 1339.2,136.50 1340.2,136.50 1341.2,136.50 1342.2,136.50 1343.2,136.50 1344.2,136.50 1345.2,136.50 1346.2,136.50 1347.2,136.50 1348.2,136.50 1349.2,136.50 1350.2,136.50 1351.2,136.50 1352.2,136.50 1353.2,136.50 1354.2,136.50 1355.2,135.50 1356.2,135.50 1357.2,135.50 1358.2,135.50 1359.2,135.50 1360.2,135.50 1361.2,135.50 1362.2,135.50 1363.2,135.50 1364.2,135.50 1365.2,135.50 1366.2,135.50 1367.2,135.50 1368.2,135.50 1369.2,135.50 1370.2,135.50 1371.2,135.50 1372.2,135.50 1373.2,135.50 1374.2,135.50 1375.2,135.50 1376.2,135.50 1377.2,135.50 1378.2,135.50" fill="none" stroke="#3a3ad8" stroke-width="1.1"/>
<path d="M982.20 86.70 h4 M984.20 86.00 v3" stroke="#0000ff" stroke-width="0.8"/>
<line x1="960.50" y1="205.00" x2="1394.50" y2="205.00" stroke="#5a5a5a" stroke-width="0.9"/>
<rect x="960.50" y="205.30" width="434.00" height="145.00" fill="#d6e2ee" />
<line x1="960.50" y1="205.70" x2="1394.50" y2="205.70" stroke="#9aa8b8" stroke-width="0.8"/>
<rect x="961.00" y="205.80" width="433.00" height="15.50" fill="url(#mdit)" />
<rect x="961.00" y="205.80" width="433.00" height="1.20" fill="#dfe8f3" />
<rect x="961.00" y="220.10" width="433.00" height="1.20" fill="#deeaf6" />
<rect x="965.00" y="210.30" width="8.00" height="8.00" fill="#1830c0" />
<rect x="966.00" y="212.30" width="1.20" height="6.00" fill="#ffd700" />
<rect x="968.00" y="215.30" width="1.20" height="3.00" fill="#ffd700" />
<rect x="970.00" y="216.30" width="1.20" height="2.00" fill="#ffd700" />
<rect x="965.00" y="217.50" width="8.00" height="0.80" fill="#ffd700" />
<text x="975.50" y="217.10" font-family='"Liberation Sans", sans-serif' font-size="7" fill="#9a9a9a" font-weight="normal" text-anchor="start" style="white-space:pre" textLength="49.7" lengthAdjust="spacingAndGlyphs">Spectrum Analyzer</text>
<rect x="1340.60" y="210.10" width="15.5" height="9" rx="1.2" fill="#d3deea" stroke="#8a9bb0" stroke-width="0.6"/>
<rect x="1346.10" y="215.10" width="5.00" height="1.40" fill="#555" />
<rect x="1357.65" y="210.10" width="15.5" height="9" rx="1.2" fill="#d3deea" stroke="#8a9bb0" stroke-width="0.6"/>
<rect x="1363.25" y="212.10" width="4.6" height="3.8" fill="none" stroke="#555" stroke-width="0.7"/>
<rect x="1374.70" y="210.10" width="15.5" height="9" rx="1.2" fill="#d3deea" stroke="#8a9bb0" stroke-width="0.6"/>
<path d="M1380.20 212.00 l4.6 4 M1384.80 212.00 l-4.6 4" stroke="#555" stroke-width="0.8"/>
<rect x="965.50" y="221.20" width="425.00" height="125.30" fill="#ffffff" />
<rect x="965.50" y="221.20" width="425.00" height="1.00" fill="#5e5e5e" />
<rect x="965.50" y="221.20" width="1.00" height="125.30" fill="#6a6a6a" />
<g transform="translate(966.00,226.00) scale(0.893,1)">
<text x="0.00" y="0.00" font-family='"Liberation Mono", monospace' font-size="5.6" fill="#0000ff" font-weight="bold" text-anchor="start" style="white-space:pre" >A(dBFS)</text>
</g>
<g transform="translate(1053.00,226.00) scale(0.893,1)">
<text x="0.00" y="0.00" font-family='"Liberation Mono", monospace' font-size="5.6" fill="#0000ff" font-weight="bold" text-anchor="start" style="white-space:pre" >A: Peak Frequency Band=  125.00  Hz        20.00  Hz - 20.00000 kHz : ±  16.3873 dBFS</text>
</g>
<line x1="990.30" y1="232.10" x2="990.30" y2="334.20" stroke="#00e600" stroke-width="1" stroke-dasharray="1.6 1.6"/>
<line x1="1002.98" y1="232.10" x2="1002.98" y2="334.20" stroke="#00e600" stroke-width="1" stroke-dasharray="1.6 1.6"/>
<line x1="1014.45" y1="232.10" x2="1014.45" y2="334.20" stroke="#00e600" stroke-width="1" stroke-dasharray="1.6 1.6"/>
<line x1="1025.91" y1="232.10" x2="1025.91" y2="334.20" stroke="#00e600" stroke-width="1" stroke-dasharray="1.6 1.6"/>
<line x1="1037.79" y1="232.10" x2="1037.79" y2="334.20" stroke="#00e600" stroke-width="1" stroke-dasharray="1.6 1.6"/>
<line x1="1050.06" y1="232.10" x2="1050.06" y2="334.20" stroke="#00e600" stroke-width="1" stroke-dasharray="1.6 1.6"/>
<line x1="1061.52" y1="232.10" x2="1061.52" y2="334.20" stroke="#00e600" stroke-width="1" stroke-dasharray="1.6 1.6"/>
<line x1="1073.40" y1="232.10" x2="1073.40" y2="334.20" stroke="#00e600" stroke-width="1" stroke-dasharray="1.6 1.6"/>
<line x1="1085.67" y1="232.10" x2="1085.67" y2="334.20" stroke="#00e600" stroke-width="1" stroke-dasharray="1.6 1.6"/>
<line x1="1097.14" y1="232.10" x2="1097.14" y2="334.20" stroke="#00e600" stroke-width="1" stroke-dasharray="1.6 1.6"/>
<line x1="1108.60" y1="232.10" x2="1108.60" y2="334.20" stroke="#00e600" stroke-width="1" stroke-dasharray="1.6 1.6"/>
<line x1="1121.28" y1="232.10" x2="1121.28" y2="334.20" stroke="#00e600" stroke-width="1" stroke-dasharray="1.6 1.6"/>
<line x1="1132.75" y1="232.10" x2="1132.75" y2="334.20" stroke="#00e600" stroke-width="1" stroke-dasharray="1.6 1.6"/>
<line x1="1144.21" y1="232.10" x2="1144.21" y2="334.20" stroke="#00e600" stroke-width="1" stroke-dasharray="1.6 1.6"/>
<line x1="1156.09" y1="232.10" x2="1156.09" y2="334.20" stroke="#00e600" stroke-width="1" stroke-dasharray="1.6 1.6"/>
<line x1="1168.36" y1="232.10" x2="1168.36" y2="334.20" stroke="#00e600" stroke-width="1" stroke-dasharray="1.6 1.6"/>
<line x1="1179.82" y1="232.10" x2="1179.82" y2="334.20" stroke="#00e600" stroke-width="1" stroke-dasharray="1.6 1.6"/>
<line x1="1191.70" y1="232.10" x2="1191.70" y2="334.20" stroke="#00e600" stroke-width="1" stroke-dasharray="1.6 1.6"/>
<line x1="1203.97" y1="232.10" x2="1203.97" y2="334.20" stroke="#00e600" stroke-width="1" stroke-dasharray="1.6 1.6"/>
<line x1="1215.44" y1="232.10" x2="1215.44" y2="334.20" stroke="#00e600" stroke-width="1" stroke-dasharray="1.6 1.6"/>
<line x1="1226.90" y1="232.10" x2="1226.90" y2="334.20" stroke="#00e600" stroke-width="1" stroke-dasharray="1.6 1.6"/>
<line x1="1239.58" y1="232.10" x2="1239.58" y2="334.20" stroke="#00e600" stroke-width="1" stroke-dasharray="1.6 1.6"/>
<line x1="1251.05" y1="232.10" x2="1251.05" y2="334.20" stroke="#00e600" stroke-width="1" stroke-dasharray="1.6 1.6"/>
<line x1="1262.51" y1="232.10" x2="1262.51" y2="334.20" stroke="#00e600" stroke-width="1" stroke-dasharray="1.6 1.6"/>
<line x1="1274.39" y1="232.10" x2="1274.39" y2="334.20" stroke="#00e600" stroke-width="1" stroke-dasharray="1.6 1.6"/>
<line x1="1286.66" y1="232.10" x2="1286.66" y2="334.20" stroke="#00e600" stroke-width="1" stroke-dasharray="1.6 1.6"/>
<line x1="1298.12" y1="232.10" x2="1298.12" y2="334.20" stroke="#00e600" stroke-width="1" stroke-dasharray="1.6 1.6"/>
<line x1="1310.00" y1="232.10" x2="1310.00" y2="334.20" stroke="#00e600" stroke-width="1" stroke-dasharray="1.6 1.6"/>
<line x1="1322.27" y1="232.10" x2="1322.27" y2="334.20" stroke="#00e600" stroke-width="1" stroke-dasharray="1.6 1.6"/>
<line x1="1333.74" y1="232.10" x2="1333.74" y2="334.20" stroke="#00e600" stroke-width="1" stroke-dasharray="1.6 1.6"/>
<line x1="1345.20" y1="232.10" x2="1345.20" y2="334.20" stroke="#00e600" stroke-width="1" stroke-dasharray="1.6 1.6"/>
<line x1="1357.88" y1="232.10" x2="1357.88" y2="334.20" stroke="#00e600" stroke-width="1" stroke-dasharray="1.6 1.6"/>
<line x1="1369.35" y1="232.10" x2="1369.35" y2="334.20" stroke="#00e600" stroke-width="1" stroke-dasharray="1.6 1.6"/>
<line x1="984.40" y1="242.31" x2="1378.20" y2="242.31" stroke="#00e600" stroke-width="1" stroke-dasharray="1.6 1.6"/>
<line x1="984.40" y1="252.52" x2="1378.20" y2="252.52" stroke="#00e600" stroke-width="1" stroke-dasharray="1.6 1.6"/>
<line x1="984.40" y1="262.73" x2="1378.20" y2="262.73" stroke="#00e600" stroke-width="1" stroke-dasharray="1.6 1.6"/>
<line x1="984.40" y1="272.94" x2="1378.20" y2="272.94" stroke="#00e600" stroke-width="1" stroke-dasharray="1.6 1.6"/>
<line x1="984.40" y1="283.15" x2="1378.20" y2="283.15" stroke="#00e600" stroke-width="1" stroke-dasharray="1.6 1.6"/>
<line x1="984.40" y1="293.36" x2="1378.20" y2="293.36" stroke="#00e600" stroke-width="1" stroke-dasharray="1.6 1.6"/>
<line x1="984.40" y1="303.57" x2="1378.20" y2="303.57" stroke="#00e600" stroke-width="1" stroke-dasharray="1.6 1.6"/>
<line x1="984.40" y1="313.78" x2="1378.20" y2="313.78" stroke="#00e600" stroke-width="1" stroke-dasharray="1.6 1.6"/>
<line x1="984.40" y1="323.99" x2="1378.20" y2="323.99" stroke="#00e600" stroke-width="1" stroke-dasharray="1.6 1.6"/>
<rect x="984.40" y="232.10" width="393.80" height="102.10" fill="none" stroke="#40ff40" stroke-width="1"/>
<rect x="985.90" y="283.50" width="10.41" height="50.70" fill="#0000ff" />
<rect x="984.90" y="284.00" width="1.00" height="50.20" fill="#c8c8f0" />
<rect x="985.90" y="283.50" width="10.41" height="0.70" fill="#5050ff" />
<rect x="997.31" y="281.00" width="10.81" height="53.20" fill="#0000ff" />
<rect x="996.31" y="283.50" width="1.00" height="50.70" fill="#d8d8fa" />
<rect x="997.31" y="281.00" width="10.81" height="0.70" fill="#5050ff" />
<rect x="1009.11" y="279.40" width="10.81" height="54.80" fill="#0000ff" />
<rect x="1008.11" y="281.00" width="1.00" height="53.20" fill="#d8d8fa" />
<rect x="1009.11" y="279.40" width="10.81" height="0.70" fill="#5050ff" />
<rect x="1020.92" y="276.50" width="10.81" height="57.70" fill="#0000ff" />
<rect x="1019.92" y="279.40" width="1.00" height="54.80" fill="#d8d8fa" />
<rect x="1020.92" y="276.50" width="10.81" height="0.70" fill="#5050ff" />
<rect x="1032.72" y="273.30" width="10.81" height="60.90" fill="#0000ff" />
<rect x="1031.72" y="276.50" width="1.00" height="57.70" fill="#d8d8fa" />
<rect x="1032.72" y="273.30" width="10.81" height="0.70" fill="#5050ff" />
<rect x="1044.53" y="270.20" width="10.81" height="64.00" fill="#0000ff" />
<rect x="1043.53" y="273.30" width="1.00" height="60.90" fill="#d8d8fa" />
<rect x="1044.53" y="270.20" width="10.81" height="0.70" fill="#5050ff" />
<rect x="1056.34" y="266.00" width="10.81" height="68.20" fill="#0000ff" />
<rect x="1055.34" y="270.20" width="1.00" height="64.00" fill="#d8d8fa" />
<rect x="1056.34" y="266.00" width="10.81" height="0.70" fill="#5050ff" />
<rect x="1068.14" y="262.80" width="10.81" height="71.40" fill="#0000ff" />
<rect x="1067.14" y="266.00" width="1.00" height="68.20" fill="#d8d8fa" />
<rect x="1068.14" y="262.80" width="10.81" height="0.70" fill="#5050ff" />
<rect x="1079.95" y="262.80" width="10.81" height="71.40" fill="#0000ff" />
<rect x="1078.95" y="262.80" width="1.00" height="71.40" fill="#d8d8fa" />
<rect x="1079.95" y="262.80" width="10.81" height="0.70" fill="#5050ff" />
<rect x="1091.75" y="261.90" width="10.81" height="72.30" fill="#0000ff" />
<rect x="1090.75" y="262.80" width="1.00" height="71.40" fill="#d8d8fa" />
<rect x="1091.75" y="261.90" width="10.81" height="0.70" fill="#5050ff" />
<rect x="1103.56" y="260.20" width="10.81" height="74.00" fill="#0000ff" />
<rect x="1102.56" y="261.90" width="1.00" height="72.30" fill="#d8d8fa" />
<rect x="1103.56" y="260.20" width="10.81" height="0.70" fill="#5050ff" />
<rect x="1115.37" y="264.30" width="10.81" height="69.90" fill="#0000ff" />
<rect x="1114.37" y="264.30" width="1.00" height="69.90" fill="#d8d8fa" />
<rect x="1115.37" y="264.30" width="10.81" height="0.70" fill="#5050ff" />
<rect x="1127.17" y="265.30" width="10.81" height="68.90" fill="#0000ff" />
<rect x="1126.17" y="265.30" width="1.00" height="68.90" fill="#d8d8fa" />
<rect x="1127.17" y="265.30" width="10.81" height="0.70" fill="#5050ff" />
<rect x="1138.98" y="268.30" width="10.81" height="65.90" fill="#0000ff" />
<rect x="1137.98" y="268.30" width="1.00" height="65.90" fill="#d8d8fa" />
<rect x="1138.98" y="268.30" width="10.81" height="0.70" fill="#5050ff" />
<rect x="1150.78" y="270.80" width="10.81" height="63.40" fill="#0000ff" />
<rect x="1149.78" y="270.80" width="1.00" height="63.40" fill="#d8d8fa" />
<rect x="1150.78" y="270.80" width="10.81" height="0.70" fill="#5050ff" />
<rect x="1162.59" y="273.90" width="10.81" height="60.30" fill="#0000ff" />
<rect x="1161.59" y="273.90" width="1.00" height="60.30" fill="#d8d8fa" />
<rect x="1162.59" y="273.90" width="10.81" height="0.70" fill="#5050ff" />
<rect x="1174.40" y="276.80" width="10.81" height="57.40" fill="#0000ff" />
<rect x="1173.40" y="276.80" width="1.00" height="57.40" fill="#d8d8fa" />
<rect x="1174.40" y="276.80" width="10.81" height="0.70" fill="#5050ff" />
<rect x="1186.20" y="277.00" width="10.81" height="57.20" fill="#0000ff" />
<rect x="1185.20" y="277.00" width="1.00" height="57.20" fill="#d8d8fa" />
<rect x="1186.20" y="277.00" width="10.81" height="0.70" fill="#5050ff" />
<rect x="1198.01" y="278.00" width="10.81" height="56.20" fill="#0000ff" />
<rect x="1197.01" y="278.00" width="1.00" height="56.20" fill="#d8d8fa" />
<rect x="1198.01" y="278.00" width="10.81" height="0.70" fill="#5050ff" />
<rect x="1209.81" y="278.30" width="10.81" height="55.90" fill="#0000ff" />
<rect x="1208.81" y="278.30" width="1.00" height="55.90" fill="#d8d8fa" />
<rect x="1209.81" y="278.30" width="10.81" height="0.70" fill="#5050ff" />
<rect x="1221.62" y="278.30" width="10.81" height="55.90" fill="#0000ff" />
<rect x="1220.62" y="278.30" width="1.00" height="55.90" fill="#d8d8fa" />
<rect x="1221.62" y="278.30" width="10.81" height="0.70" fill="#5050ff" />
<rect x="1233.43" y="279.00" width="10.81" height="55.20" fill="#0000ff" />
<rect x="1232.43" y="279.00" width="1.00" height="55.20" fill="#d8d8fa" />
<rect x="1233.43" y="279.00" width="10.81" height="0.70" fill="#5050ff" />
<rect x="1245.23" y="279.00" width="10.81" height="55.20" fill="#0000ff" />
<rect x="1244.23" y="279.00" width="1.00" height="55.20" fill="#d8d8fa" />
<rect x="1245.23" y="279.00" width="10.81" height="0.70" fill="#5050ff" />
<rect x="1257.04" y="279.00" width="10.81" height="55.20" fill="#0000ff" />
<rect x="1256.04" y="279.00" width="1.00" height="55.20" fill="#d8d8fa" />
<rect x="1257.04" y="279.00" width="10.81" height="0.70" fill="#5050ff" />
<rect x="1268.84" y="278.30" width="10.81" height="55.90" fill="#0000ff" />
<rect x="1267.84" y="279.00" width="1.00" height="55.20" fill="#d8d8fa" />
<rect x="1268.84" y="278.30" width="10.81" height="0.70" fill="#5050ff" />
<rect x="1280.65" y="278.30" width="10.81" height="55.90" fill="#0000ff" />
<rect x="1279.65" y="278.30" width="1.00" height="55.90" fill="#d8d8fa" />
<rect x="1280.65" y="278.30" width="10.81" height="0.70" fill="#5050ff" />
<rect x="1292.46" y="278.30" width="10.81" height="55.90" fill="#0000ff" />
<rect x="1291.46" y="278.30" width="1.00" height="55.90" fill="#d8d8fa" />
<rect x="1292.46" y="278.30" width="10.81" height="0.70" fill="#5050ff" />
<rect x="1304.26" y="279.00" width="10.81" height="55.20" fill="#0000ff" />
<rect x="1303.26" y="279.00" width="1.00" height="55.20" fill="#d8d8fa" />
<rect x="1304.26" y="279.00" width="10.81" height="0.70" fill="#5050ff" />
<rect x="1316.07" y="279.00" width="10.81" height="55.20" fill="#0000ff" />
<rect x="1315.07" y="279.00" width="1.00" height="55.20" fill="#d8d8fa" />
<rect x="1316.07" y="279.00" width="10.81" height="0.70" fill="#5050ff" />
<rect x="1327.87" y="279.30" width="10.81" height="54.90" fill="#0000ff" />
<rect x="1326.87" y="279.30" width="1.00" height="54.90" fill="#d8d8fa" />
<rect x="1327.87" y="279.30" width="10.81" height="0.70" fill="#5050ff" />
<rect x="1339.68" y="281.00" width="10.81" height="53.20" fill="#0000ff" />
<rect x="1338.68" y="281.00" width="1.00" height="53.20" fill="#d8d8fa" />
<rect x="1339.68" y="281.00" width="10.81" height="0.70" fill="#5050ff" />
<rect x="1351.49" y="282.90" width="10.81" height="51.30" fill="#0000ff" />
<rect x="1350.49" y="282.90" width="1.00" height="51.30" fill="#d8d8fa" />
<rect x="1351.49" y="282.90" width="10.81" height="0.70" fill="#5050ff" />
<rect x="1363.29" y="286.30" width="10.81" height="47.90" fill="#0000ff" />
<rect x="1362.29" y="286.30" width="1.00" height="47.90" fill="#d8d8fa" />
<rect x="1363.29" y="286.30" width="10.81" height="0.70" fill="#5050ff" />
<rect x="1375.10" y="295.90" width="2.60" height="38.30" fill="#0000ff" />
<rect x="1374.10" y="295.90" width="1.00" height="38.30" fill="#d8d8fa" />
<rect x="1375.10" y="295.90" width="2.60" height="0.70" fill="#5050ff" />
<line x1="984.40" y1="334.20" x2="1378.20" y2="334.20" stroke="#40ff40" stroke-width="1"/>
<line x1="984.40" y1="232.10" x2="984.40" y2="334.20" stroke="#40ff40" stroke-width="1"/>
<g transform="translate(982.90,234.10) scale(0.893,1)">
<text x="0.00" y="0.00" font-family='"Liberation Mono", monospace' font-size="5.6" fill="#0000ff" font-weight="bold" text-anchor="end" style="white-space:pre" >0</text>
</g>
<g transform="translate(982.90,244.31) scale(0.893,1)">
<text x="0.00" y="0.00" font-family='"Liberation Mono", monospace' font-size="5.6" fill="#0000ff" font-weight="bold" text-anchor="end" style="white-space:pre" >-15</text>
</g>
<g transform="translate(982.90,254.52) scale(0.893,1)">
<text x="0.00" y="0.00" font-family='"Liberation Mono", monospace' font-size="5.6" fill="#0000ff" font-weight="bold" text-anchor="end" style="white-space:pre" >-30</text>
</g>
<g transform="translate(982.90,264.73) scale(0.893,1)">
<text x="0.00" y="0.00" font-family='"Liberation Mono", monospace' font-size="5.6" fill="#0000ff" font-weight="bold" text-anchor="end" style="white-space:pre" >-45</text>
</g>
<g transform="translate(982.90,274.94) scale(0.893,1)">
<text x="0.00" y="0.00" font-family='"Liberation Mono", monospace' font-size="5.6" fill="#0000ff" font-weight="bold" text-anchor="end" style="white-space:pre" >-60</text>
</g>
<g transform="translate(982.90,285.15) scale(0.893,1)">
<text x="0.00" y="0.00" font-family='"Liberation Mono", monospace' font-size="5.6" fill="#0000ff" font-weight="bold" text-anchor="end" style="white-space:pre" >-75</text>
</g>
<g transform="translate(982.90,295.36) scale(0.893,1)">
<text x="0.00" y="0.00" font-family='"Liberation Mono", monospace' font-size="5.6" fill="#0000ff" font-weight="bold" text-anchor="end" style="white-space:pre" >-90</text>
</g>
<g transform="translate(982.90,305.57) scale(0.893,1)">
<text x="0.00" y="0.00" font-family='"Liberation Mono", monospace' font-size="5.6" fill="#0000ff" font-weight="bold" text-anchor="end" style="white-space:pre" >-105</text>
</g>
<g transform="translate(982.90,315.78) scale(0.893,1)">
<text x="0.00" y="0.00" font-family='"Liberation Mono", monospace' font-size="5.6" fill="#0000ff" font-weight="bold" text-anchor="end" style="white-space:pre" >-120</text>
</g>
<g transform="translate(982.90,325.99) scale(0.893,1)">
<text x="0.00" y="0.00" font-family='"Liberation Mono", monospace' font-size="5.6" fill="#0000ff" font-weight="bold" text-anchor="end" style="white-space:pre" >-135</text>
</g>
<g transform="translate(982.90,336.20) scale(0.893,1)">
<text x="0.00" y="0.00" font-family='"Liberation Mono", monospace' font-size="5.6" fill="#0000ff" font-weight="bold" text-anchor="end" style="white-space:pre" >-150</text>
</g>
<g transform="translate(990.30,339.40) scale(0.893,1)">
<text x="0.00" y="0.00" font-family='"Liberation Mono", monospace' font-size="5.6" fill="#111" font-weight="bold" text-anchor="middle" style="white-space:pre" >12.5</text>
</g>
<g transform="translate(1002.98,339.40) scale(0.893,1)">
<text x="0.00" y="0.00" font-family='"Liberation Mono", monospace' font-size="5.6" fill="#111" font-weight="bold" text-anchor="middle" style="white-space:pre" >16</text>
</g>
<g transform="translate(1014.45,339.40) scale(0.893,1)">
<text x="0.00" y="0.00" font-family='"Liberation Mono", monospace' font-size="5.6" fill="#111" font-weight="bold" text-anchor="middle" style="white-space:pre" >20</text>
</g>
<g transform="translate(1025.91,339.40) scale(0.893,1)">
<text x="0.00" y="0.00" font-family='"Liberation Mono", monospace' font-size="5.6" fill="#111" font-weight="bold" text-anchor="middle" style="white-space:pre" >25</text>
</g>
<g transform="translate(1037.79,339.40) scale(0.893,1)">
<text x="0.00" y="0.00" font-family='"Liberation Mono", monospace' font-size="5.6" fill="#111" font-weight="bold" text-anchor="middle" style="white-space:pre" >31.5</text>
</g>
<g transform="translate(1050.06,339.40) scale(0.893,1)">
<text x="0.00" y="0.00" font-family='"Liberation Mono", monospace' font-size="5.6" fill="#111" font-weight="bold" text-anchor="middle" style="white-space:pre" >40</text>
</g>
<g transform="translate(1061.52,339.40) scale(0.893,1)">
<text x="0.00" y="0.00" font-family='"Liberation Mono", monospace' font-size="5.6" fill="#111" font-weight="bold" text-anchor="middle" style="white-space:pre" >50</text>
</g>
<g transform="translate(1073.40,339.40) scale(0.893,1)">
<text x="0.00" y="0.00" font-family='"Liberation Mono", monospace' font-size="5.6" fill="#111" font-weight="bold" text-anchor="middle" style="white-space:pre" >63</text>
</g>
<g transform="translate(1085.67,339.40) scale(0.893,1)">
<text x="0.00" y="0.00" font-family='"Liberation Mono", monospace' font-size="5.6" fill="#111" font-weight="bold" text-anchor="middle" style="white-space:pre" >80</text>
</g>
<g transform="translate(1097.14,339.40) scale(0.893,1)">
<text x="0.00" y="0.00" font-family='"Liberation Mono", monospace' font-size="5.6" fill="#111" font-weight="bold" text-anchor="middle" style="white-space:pre" >100</text>
</g>
<g transform="translate(1108.60,339.40) scale(0.893,1)">
<text x="0.00" y="0.00" font-family='"Liberation Mono", monospace' font-size="5.6" fill="#111" font-weight="bold" text-anchor="middle" style="white-space:pre" >125</text>
</g>
<g transform="translate(1121.28,339.40) scale(0.893,1)">
<text x="0.00" y="0.00" font-family='"Liberation Mono", monospace' font-size="5.6" fill="#111" font-weight="bold" text-anchor="middle" style="white-space:pre" >160</text>
</g>
<g transform="translate(1132.75,339.40) scale(0.893,1)">
<text x="0.00" y="0.00" font-family='"Liberation Mono", monospace' font-size="5.6" fill="#111" font-weight="bold" text-anchor="middle" style="white-space:pre" >200</text>
</g>
<g transform="translate(1144.21,339.40) scale(0.893,1)">
<text x="0.00" y="0.00" font-family='"Liberation Mono", monospace' font-size="5.6" fill="#111" font-weight="bold" text-anchor="middle" style="white-space:pre" >250</text>
</g>
<g transform="translate(1156.09,339.40) scale(0.893,1)">
<text x="0.00" y="0.00" font-family='"Liberation Mono", monospace' font-size="5.6" fill="#111" font-weight="bold" text-anchor="middle" style="white-space:pre" >315</text>
</g>
<g transform="translate(1168.36,339.40) scale(0.893,1)">
<text x="0.00" y="0.00" font-family='"Liberation Mono", monospace' font-size="5.6" fill="#111" font-weight="bold" text-anchor="middle" style="white-space:pre" >400</text>
</g>
<g transform="translate(1179.82,339.40) scale(0.893,1)">
<text x="0.00" y="0.00" font-family='"Liberation Mono", monospace' font-size="5.6" fill="#111" font-weight="bold" text-anchor="middle" style="white-space:pre" >500</text>
</g>
<g transform="translate(1191.70,339.40) scale(0.893,1)">
<text x="0.00" y="0.00" font-family='"Liberation Mono", monospace' font-size="5.6" fill="#111" font-weight="bold" text-anchor="middle" style="white-space:pre" >630</text>
</g>
<g transform="translate(1203.97,339.40) scale(0.893,1)">
<text x="0.00" y="0.00" font-family='"Liberation Mono", monospace' font-size="5.6" fill="#111" font-weight="bold" text-anchor="middle" style="white-space:pre" >800</text>
</g>
<g transform="translate(1215.44,339.40) scale(0.893,1)">
<text x="0.00" y="0.00" font-family='"Liberation Mono", monospace' font-size="5.6" fill="#111" font-weight="bold" text-anchor="middle" style="white-space:pre" >1k</text>
</g>
<g transform="translate(1226.90,339.40) scale(0.893,1)">
<text x="0.00" y="0.00" font-family='"Liberation Mono", monospace' font-size="5.6" fill="#111" font-weight="bold" text-anchor="middle" style="white-space:pre" >1.25k</text>
</g>
<g transform="translate(1239.58,339.40) scale(0.893,1)">
<text x="0.00" y="0.00" font-family='"Liberation Mono", monospace' font-size="5.6" fill="#111" font-weight="bold" text-anchor="middle" style="white-space:pre" >1.6k</text>
</g>
<g transform="translate(1251.05,339.40) scale(0.893,1)">
<text x="0.00" y="0.00" font-family='"Liberation Mono", monospace' font-size="5.6" fill="#111" font-weight="bold" text-anchor="middle" style="white-space:pre" >2k</text>
</g>
<g transform="translate(1262.51,339.40) scale(0.893,1)">
<text x="0.00" y="0.00" font-family='"Liberation Mono", monospace' font-size="5.6" fill="#111" font-weight="bold" text-anchor="middle" style="white-space:pre" >2.5k</text>
</g>
<g transform="translate(1274.39,339.40) scale(0.893,1)">
<text x="0.00" y="0.00" font-family='"Liberation Mono", monospace' font-size="5.6" fill="#111" font-weight="bold" text-anchor="middle" style="white-space:pre" >3.15k</text>
</g>
<g transform="translate(1286.66,339.40) scale(0.893,1)">
<text x="0.00" y="0.00" font-family='"Liberation Mono", monospace' font-size="5.6" fill="#111" font-weight="bold" text-anchor="middle" style="white-space:pre" >4k</text>
</g>
<g transform="translate(1298.12,339.40) scale(0.893,1)">
<text x="0.00" y="0.00" font-family='"Liberation Mono", monospace' font-size="5.6" fill="#111" font-weight="bold" text-anchor="middle" style="white-space:pre" >5k</text>
</g>
<g transform="translate(1310.00,339.40) scale(0.893,1)">
<text x="0.00" y="0.00" font-family='"Liberation Mono", monospace' font-size="5.6" fill="#111" font-weight="bold" text-anchor="middle" style="white-space:pre" >6.3k</text>
</g>
<g transform="translate(1322.27,339.40) scale(0.893,1)">
<text x="0.00" y="0.00" font-family='"Liberation Mono", monospace' font-size="5.6" fill="#111" font-weight="bold" text-anchor="middle" style="white-space:pre" >8k</text>
</g>
<g transform="translate(1333.74,339.40) scale(0.893,1)">
<text x="0.00" y="0.00" font-family='"Liberation Mono", monospace' font-size="5.6" fill="#111" font-weight="bold" text-anchor="middle" style="white-space:pre" >10k</text>
</g>
<g transform="translate(1345.20,339.40) scale(0.893,1)">
<text x="0.00" y="0.00" font-family='"Liberation Mono", monospace' font-size="5.6" fill="#111" font-weight="bold" text-anchor="middle" style="white-space:pre" >12.5k</text>
</g>
<g transform="translate(1357.88,339.40) scale(0.893,1)">
<text x="0.00" y="0.00" font-family='"Liberation Mono", monospace' font-size="5.6" fill="#111" font-weight="bold" text-anchor="middle" style="white-space:pre" >16k</text>
</g>
<g transform="translate(1369.35,339.40) scale(0.893,1)">
<text x="0.00" y="0.00" font-family='"Liberation Mono", monospace' font-size="5.6" fill="#111" font-weight="bold" text-anchor="middle" style="white-space:pre" >20k</text>
</g>
<g transform="translate(966.00,343.90) scale(0.893,1)">
<text x="0.00" y="0.00" font-family='"Liberation Mono", monospace' font-size="5.6" fill="#111" font-weight="bold" text-anchor="start" style="white-space:pre" >FFT Segments:&lt;1</text>
</g>
<g transform="translate(1026.00,343.90) scale(0.893,1)">
<text x="0.00" y="0.00" font-family='"Liberation Mono", monospace' font-size="5.6" fill="#111" font-weight="bold" text-anchor="start" style="white-space:pre" >Resolution: 2.929688Hz</text>
</g>
<g transform="translate(1181.00,343.90) scale(0.893,1)">
<text x="0.00" y="0.00" font-family='"Liberation Mono", monospace' font-size="5.6" fill="#111" font-weight="bold" text-anchor="middle" style="white-space:pre" >1/3 OCTAVE Amplitude Spectrum in dBFS</text>
</g>
<g transform="translate(1306.00,343.90) scale(0.893,1)">
<text x="0.00" y="0.00" font-family='"Liberation Mono", monospace' font-size="5.6" fill="#111" font-weight="bold" text-anchor="start" style="white-space:pre" >Averaged Frames: 10</text>
</g>
<g transform="translate(1381.00,345.60) scale(0.893,1)">
<text x="0.00" y="0.00" font-family='"Liberation Mono", monospace' font-size="5.04" fill="#111" font-weight="bold" text-anchor="start" style="white-space:pre" >Hz</text>
</g>
<text x="1376.70" y="239.30" font-family='"Liberation Serif", serif' font-size="7.5" fill="#ff00ff" font-weight="bold" text-anchor="end" style="white-space:pre" >N1</text>
<rect x="959.00" y="352.30" width="684.00" height="12.00" fill="#f0f0f0" />
<line x1="959.00" y1="352.70" x2="1643.00" y2="352.70" stroke="#ffffff" stroke-width="0.8"/>
<line x1="961.00" y1="353.30" x2="961.00" y2="363.30" stroke="#c0c0c0" stroke-width="0.8"/>
<text x="969.50" y="361.80" font-family='"Liberation Sans", sans-serif' font-size="7" fill="#1010e0" font-weight="bold" text-anchor="middle" style="white-space:pre" >A</text>
<rect x="975.40" y="353.30" width="58.50" height="10.50" fill="#a0a0a0" />
<rect x="976.40" y="354.30" width="57.00" height="9.00" fill="#ffffff" />
<rect x="1025.40" y="354.30" width="8.00" height="9.00" fill="#e6e6e6" />
<rect x="1025.40" y="362.60" width="8.00" height="0.70" fill="#6a6a6a" />
<path d="M1027.40 357.55 h4 l-2 2.2 z" fill="#000"/>
<text x="977.40" y="361.50" font-family='"Liberation Sans", sans-serif' font-size="6.5" fill="#1010e0" font-weight="bold" text-anchor="start" style="white-space:pre" >On</text>
<rect x="1034.80" y="353.50" width="30.10" height="10.00" fill="#a0a0a0" />
<rect x="1035.80" y="354.50" width="28.60" height="8.50" fill="#f0f0f0" />
<text x="1049.85" y="361.20" font-family='"Liberation Sans", sans-serif' font-size="6.4" fill="#777" font-weight="normal" text-anchor="middle" style="white-space:pre" >0%</text>
<rect x="1064.90" y="353.50" width="9.10" height="10.00" fill="#e8e8e8" />
<line x1="1064.90" y1="358.50" x2="1074.00" y2="358.50" stroke="#b0b0b0" stroke-width="0.6"/>
<path d="M1068.25 356.80 l1.2 -1.2 l1.2 1.2 M1068.25 360.30 l1.2 1.2 l1.2 -1.2" stroke="#999" stroke-width="0.5" fill="none"/>
<rect x="1077.70" y="353.50" width="30.10" height="10.00" fill="#a0a0a0" />
<rect x="1078.70" y="354.50" width="28.60" height="8.50" fill="#f0f0f0" />
<text x="1092.75" y="361.20" font-family='"Liberation Sans", sans-serif' font-size="6.4" fill="#777" font-weight="normal" text-anchor="middle" style="white-space:pre" >10%</text>
<rect x="1107.80" y="353.50" width="9.20" height="10.00" fill="#e8e8e8" />
<line x1="1107.80" y1="358.50" x2="1117.00" y2="358.50" stroke="#b0b0b0" stroke-width="0.6"/>
<path d="M1111.20 356.80 l1.2 -1.2 l1.2 1.2 M1111.20 360.30 l1.2 1.2 l1.2 -1.2" stroke="#999" stroke-width="0.5" fill="none"/>
<rect x="1370.40" y="353.50" width="30.10" height="10.00" fill="#a0a0a0" />
<rect x="1371.40" y="354.50" width="28.60" height="8.50" fill="#f0f0f0" />
<text x="1385.45" y="361.20" font-family='"Liberation Sans", sans-serif' font-size="6.4" fill="#777" font-weight="normal" text-anchor="middle" style="white-space:pre" >0%</text>
<rect x="1400.50" y="353.50" width="8.20" height="10.00" fill="#e8e8e8" />
<line x1="1400.50" y1="358.50" x2="1408.70" y2="358.50" stroke="#b0b0b0" stroke-width="0.6"/>
<path d="M1403.40 356.80 l1.2 -1.2 l1.2 1.2 M1403.40 360.30 l1.2 1.2 l1.2 -1.2" stroke="#999" stroke-width="0.5" fill="none"/>
<rect x="1413.30" y="353.50" width="30.10" height="10.00" fill="#a0a0a0" />
<rect x="1414.30" y="354.50" width="28.60" height="8.50" fill="#f0f0f0" />
<text x="1428.35" y="361.20" font-family='"Liberation Sans", sans-serif' font-size="6.4" fill="#777" font-weight="normal" text-anchor="middle" style="white-space:pre" >10%</text>
<rect x="1443.40" y="353.50" width="8.20" height="10.00" fill="#e8e8e8" />
<line x1="1443.40" y1="358.50" x2="1451.60" y2="358.50" stroke="#b0b0b0" stroke-width="0.6"/>
<path d="M1446.30 356.80 l1.2 -1.2 l1.2 1.2 M1446.30 360.30 l1.2 1.2 l1.2 -1.2" stroke="#999" stroke-width="0.5" fill="none"/>
<rect x="1120.60" y="353.50" width="66.60" height="10.00" fill="#a0a0a0" />
<rect x="1121.60" y="354.50" width="65.10" height="8.50" fill="#f0f0f0" />
<text x="1153.90" y="361.20" font-family='"Liberation Sans", sans-serif' font-size="6.4" fill="#333" font-weight="normal" text-anchor="middle" style="white-space:pre" >1.00000</text>
<rect x="1456.20" y="353.50" width="65.80" height="10.00" fill="#a0a0a0" />
<rect x="1457.20" y="354.50" width="64.30" height="8.50" fill="#f0f0f0" />
<text x="1489.10" y="361.20" font-family='"Liberation Sans", sans-serif' font-size="6.4" fill="#333" font-weight="normal" text-anchor="middle" style="white-space:pre" >1.00000</text>
<text x="1194.50" y="361.90" font-family='"Liberation Sans", sans-serif' font-size="7" fill="#111" font-weight="normal" text-anchor="middle" style="white-space:pre" >M</text>
<rect x="1200.50" y="353.30" width="96.80" height="10.50" fill="#a0a0a0" />
<rect x="1201.50" y="354.30" width="95.30" height="9.00" fill="#ffffff" />
<rect x="1288.80" y="354.30" width="8.00" height="9.00" fill="#e6e6e6" />
<rect x="1288.80" y="362.60" width="8.00" height="0.70" fill="#6a6a6a" />
<path d="M1290.80 357.55 h4 l-2 2.2 z" fill="#000"/>
<text x="1202.50" y="361.50" font-family='"Liberation Sans", sans-serif' font-size="6.5" fill="#111" font-weight="normal" text-anchor="start" style="white-space:pre" >dB</text>
<text x="1305.30" y="361.80" font-family='"Liberation Sans", sans-serif' font-size="7" fill="#e02020" font-weight="bold" text-anchor="middle" style="white-space:pre" >B</text>
<rect x="1311.00" y="353.30" width="58.50" height="10.50" fill="#a0a0a0" />
<rect x="1312.00" y="354.30" width="57.00" height="9.00" fill="#f4f4f4" />
<rect x="1361.00" y="354.30" width="8.00" height="9.00" fill="#e6e6e6" />
<rect x="1361.00" y="362.60" width="8.00" height="0.70" fill="#6a6a6a" />
<path d="M1363.00 357.55 h4 l-2 2.2 z" fill="#9a9a9a"/>
<text x="1313.00" y="361.50" font-family='"Liberation Sans", sans-serif' font-size="6.5" fill="#9a9a9a" font-weight="normal" text-anchor="start" style="white-space:pre" >Off</text>
<rect x="959.00" y="364.00" width="684.00" height="20.50" fill="#000000" />
<path d="M967.20 370.95 l3.8 -0.6 v3.4 h-3.8 z M971.80 370.15 l4.6 -0.7 v4.6 h-4.6 z M967.20 374.55 h3.8 v3.4 l-3.8 -0.6 z M971.80 374.55 h4.6 v4.6 l-4.6 -0.7 z" fill="#fff"/>
<circle cx="997.45" cy="372.95" r="2.8" fill="none" stroke="#fff" stroke-width="0.9"/><path d="M995.45 375.05 l-3.5 3.5" stroke="#fff" stroke-width="1"/>
<rect x="1017.60" y="370.25" width="6" height="8" fill="none" stroke="#fff" stroke-width="0.8"/><path d="M1015.80 371.25 v6 M1025.40 371.25 v6" stroke="#fff" stroke-width="0.8"/>
<path d="M1049.55 374.75 h-8 q0.5 3.5 4 3.5 q2.5 0 4 -1 M1041.55 373.75 q0.5 -4.5 4 -4.5 q4 0 4 4" fill="none" stroke="#1e90ff" stroke-width="1.8"/>
<rect x="1035.05" y="383.00" width="20.00" height="1.50" fill="#76b9ed" />
<path d="M1064.50 371.25 h10 v8 h-10 z" fill="#fff"/><path d="M1067.00 371.25 v-2 q2.5 -2 5 0 v2" stroke="#fff" stroke-width="1" fill="none"/>
<rect x="1067.00" y="373.25" width="2.20" height="2.20" fill="#000" />
<rect x="1069.80" y="373.25" width="2.20" height="2.20" fill="#000" />
<rect x="1067.00" y="376.05" width="2.20" height="2.20" fill="#000" />
<rect x="1069.80" y="376.05" width="2.20" height="2.20" fill="#000" />
<rect x="1091.95" y="369.75" width="7.00" height="9.00" fill="#f4f4f4" />
<rect x="1088.45" y="370.75" width="7.00" height="7.00" fill="#2b5fb4" />
<text x="1091.95" y="376.75" font-family='"Liberation Sans", sans-serif' font-size="6.5" fill="#fff" font-weight="bold" text-anchor="middle" style="white-space:pre" >W</text>
<rect x="1116.40" y="369.75" width="7.00" height="9.00" fill="#f4f4f4" />
<rect x="1112.90" y="370.75" width="7.00" height="7.00" fill="#1f8a48" />
<text x="1116.40" y="376.75" font-family='"Liberation Sans", sans-serif' font-size="6.5" fill="#fff" font-weight="bold" text-anchor="middle" style="white-space:pre" >X</text>
<rect x="1140.85" y="369.75" width="7.00" height="9.00" fill="#f4f4f4" />
<rect x="1137.35" y="370.75" width="7.00" height="7.00" fill="#8033a0" />
<text x="1140.85" y="376.75" font-family='"Liberation Sans", sans-serif' font-size="6.5" fill="#fff" font-weight="bold" text-anchor="middle" style="white-space:pre" >N</text>
<rect x="1165.30" y="369.75" width="7.00" height="9.00" fill="#f4f4f4" />
<rect x="1161.80" y="370.75" width="7.00" height="7.00" fill="#d4502c" />
<text x="1165.30" y="376.75" font-family='"Liberation Sans", sans-serif' font-size="6.5" fill="#fff" font-weight="bold" text-anchor="middle" style="white-space:pre" >P</text>
<rect x="1186.25" y="368.75" width="11.00" height="11.00" fill="#68217a" />
<path d="M1188.75 372.25 l5.5 4 v-6 l-5.5 4" stroke="#fff" stroke-width="1.1" fill="none"/>
<path d="M1211.20 375.25 l5 -5 l5 3 l-5 5 z" fill="#888" stroke="#ddd" stroke-width="0.6"/>
<rect x="1235.65" y="369.25" width="10.00" height="10.00" fill="#c8a020" />
<rect x="1236.65" y="370.25" width="8.00" height="8.00" fill="#222" />
<path d="M1238.65 371.75 l4.5 2.5 l-4.5 2.5 z" fill="#f0d040"/>
<rect x="1260.10" y="370.75" width="10.00" height="7.50" fill="#f6c343" />
<rect x="1260.10" y="369.75" width="4.00" height="1.50" fill="#f6c343" />
<rect x="1261.10" y="373.75" width="8.00" height="3.00" fill="#4aa0e8" />
<rect x="1255.10" y="383.30" width="20.00" height="1.20" fill="#76b9ed" />
<rect x="1284.55" y="369.25" width="10.00" height="10.00" fill="#f0b020" />
<rect x="1284.05" y="371.25" width="6.00" height="6.00" fill="#e08010" />
<rect x="1290.05" y="374.25" width="5.00" height="4.00" fill="#fff3c0" />
<rect x="1279.55" y="383.30" width="20.00" height="1.20" fill="#76b9ed" />
<circle cx="1314.00" cy="374.25" r="5" fill="#fff"/>
<rect x="1313.20" y="373.25" width="1.80" height="4.50" fill="#000" />
<rect x="1313.20" y="370.95" width="1.80" height="1.50" fill="#000" />
<rect x="1304.00" y="383.30" width="20.00" height="1.20" fill="#76b9ed" />
<circle cx="1338.45" cy="374.25" r="5" fill="#1aa3e8"/>
<text x="1338.45" y="376.85" font-family='"Liberation Sans", sans-serif' font-size="7.5" fill="#fff" font-weight="bold" text-anchor="middle" style="white-space:pre" >S</text>
<rect x="1328.45" y="383.30" width="20.00" height="1.20" fill="#76b9ed" />
<rect x="1351.40" y="364.00" width="23.00" height="20.50" fill="#333333" />
<rect x="1357.40" y="369.25" width="11.00" height="10.00" fill="#1a2fd0" />
<path d="M1357.40 374.75 q2.5 -6 5.5 0 t5.5 -1 v5.5 h-11 z" fill="#e8141c"/>
<path d="M1357.40 374.75 q2.5 -6 5.5 0 t5.5 -1" fill="none" stroke="#fff" stroke-width="0.7"/>
<rect x="1351.40" y="383.30" width="23.00" height="1.20" fill="#76b9ed" />
<rect x="959.00" y="384.30" width="684.00" height="156.00" fill="#000" />
<text x="1628.00" y="372.80" font-family='"Liberation Sans", sans-serif' font-size="5.8" fill="#fff" font-weight="normal" text-anchor="middle" style="white-space:pre" >11:37 PM</text>
<text x="1628.00" y="381.00" font-family='"Liberation Sans", sans-serif' font-size="5.8" fill="#fff" font-weight="normal" text-anchor="middle" style="white-space:pre" >4/3/2017</text>
<rect x="1395.20" y="163.30" width="123.30" height="41.30" fill="#3b6e80" />
<rect x="1396.20" y="164.30" width="121.30" height="39.30" fill="#b9d1ea" />
<rect x="1396.20" y="164.30" width="121.30" height="15.00" fill="url(#mdit)" />
<rect x="1400.00" y="168.50" width="8.00" height="7.00" fill="#b06010" />
<path d="M1400 168.5 l8 7 M1408 168.5 l-8 7" stroke="#6a2a80" stroke-width="0.7"/>
<text x="1410.00" y="175.50" font-family='"Liberation Sans", sans-serif' font-size="6.5" fill="#111" font-weight="normal" text-anchor="start" style="white-space:pre" >Multimeter</text>
<rect x="1464.50" y="168" width="16" height="8" rx="1.5" fill="#d5e0eb" stroke="#7a8ba0" stroke-width="0.6"/>
<rect x="1470.00" y="172.50" width="5.00" height="1.40" fill="#333" />
<rect x="1481.50" y="168" width="16" height="8" rx="1.5" fill="#d5e0eb" stroke="#7a8ba0" stroke-width="0.6"/>
<rect x="1487.00" y="170" width="5" height="3.8" fill="none" stroke="#333" stroke-width="0.8"/>
<rect x="1498.50" y="168" width="16" height="8" rx="1.5" fill="#c9463d" stroke="#7a8ba0" stroke-width="0.6"/>
<path d="M1504.00 170 l5 4 M1509.00 170 l-5 4" stroke="#fff" stroke-width="1"/>
<rect x="1399.50" y="179.00" width="116.00" height="21.00" fill="#646464" />
<rect x="1400.30" y="179.80" width="114.70" height="20.00" fill="#ffffff" />
<g transform="translate(1406.70,196.90) scale(1.2,1)">
<text x="0.00" y="0.00" font-family='"Liberation Serif", serif' font-size="21" fill="#0000ff" font-weight="normal" text-anchor="middle" style="white-space:pre" stroke="#0000ff" stroke-width="0.45">6</text>
</g>
<g transform="translate(1421.20,196.90) scale(1.2,1)">
<text x="0.00" y="0.00" font-family='"Liberation Serif", serif' font-size="21" fill="#0000ff" font-weight="normal" text-anchor="middle" style="white-space:pre" stroke="#0000ff" stroke-width="0.45">4</text>
</g>
<g transform="translate(1436.10,196.90) scale(1.08,1)">
<text x="0.00" y="0.00" font-family='"Liberation Serif", serif' font-size="21" fill="#0000ff" font-weight="normal" text-anchor="middle" style="white-space:pre" stroke="#0000ff" stroke-width="0.45">.</text>
</g>
<g transform="translate(1456.20,196.90) scale(1.2,1)">
<text x="0.00" y="0.00" font-family='"Liberation Serif", serif' font-size="21" fill="#0000ff" font-weight="normal" text-anchor="middle" style="white-space:pre" stroke="#0000ff" stroke-width="0.45">4</text>
</g>
<g transform="translate(1490.30,196.90) scale(1.08,1)">
<text x="0.00" y="0.00" font-family='"Liberation Serif", serif' font-size="21" fill="#0000ff" font-weight="normal" text-anchor="middle" style="white-space:pre" stroke="#0000ff" stroke-width="0.45">d</text>
</g>
<g transform="translate(1505.50,196.90) scale(1.08,1)">
<text x="0.00" y="0.00" font-family='"Liberation Serif", serif' font-size="21" fill="#0000ff" font-weight="normal" text-anchor="middle" style="white-space:pre" stroke="#0000ff" stroke-width="0.45">B</text>
</g>
<rect x="1398.00" y="206.00" width="118.00" height="38.50" fill="#8a8a8a" />
<rect x="1398.50" y="206.50" width="117.00" height="37.50" fill="#ffffff" />
<circle cx="1404" cy="210.5" r="1.2" fill="none" stroke="#2040e0" stroke-width="0.6"/><circle cx="1406.5" cy="210.5" r="1.2" fill="none" stroke="#e02020" stroke-width="0.6"/><circle cx="1409" cy="210.5" r="1.2" fill="none" stroke="#20a020" stroke-width="0.6"/><circle cx="1406.5" cy="213" r="1.2" fill="none" stroke="#333" stroke-width="0.6"/>
<text x="1413.50" y="216.20" font-family='"Liberation Sans", sans-serif' font-size="6" fill="#a0a0a0" font-weight="normal" text-anchor="start" style="white-space:pre" >Max_A</text>
<line x1="1455.00" y1="214.00" x2="1461.00" y2="214.00" stroke="#aaa" stroke-width="0.6"/>
<rect x="1476.5" y="211" width="4.5" height="5" fill="none" stroke="#bbb" stroke-width="0.6"/>
<path d="M1500.5 210.5 l5 5 M1505.5 210.5 l-5 5" stroke="#aaa" stroke-width="0.6"/>
<g transform="translate(1413.40,239.80) scale(1.0,1)">
<text x="0.00" y="0.00" font-family='"Liberation Serif", serif' font-size="22" fill="#0000ff" font-weight="normal" text-anchor="middle" style="white-space:pre" stroke="#0000ff" stroke-width="0.3">9</text>
</g>
<g transform="translate(1426.10,239.80) scale(1.0,1)">
<text x="0.00" y="0.00" font-family='"Liberation Serif", serif' font-size="22" fill="#0000ff" font-weight="normal" text-anchor="middle" style="white-space:pre" stroke="#0000ff" stroke-width="0.3">7</text>
</g>
<g transform="translate(1434.50,239.80) scale(1.0,1)">
<text x="0.00" y="0.00" font-family='"Liberation Serif", serif' font-size="22" fill="#0000ff" font-weight="normal" text-anchor="middle" style="white-space:pre" stroke="#0000ff" stroke-width="0.3">.</text>
</g>
<g transform="translate(1449.10,239.80) scale(1.0,1)">
<text x="0.00" y="0.00" font-family='"Liberation Serif", serif' font-size="22" fill="#0000ff" font-weight="normal" text-anchor="middle" style="white-space:pre" stroke="#0000ff" stroke-width="0.3">1</text>
</g>
<g transform="translate(1460.70,239.80) scale(1.0,1)">
<text x="0.00" y="0.00" font-family='"Liberation Serif", serif' font-size="22" fill="#0000ff" font-weight="normal" text-anchor="middle" style="white-space:pre" stroke="#0000ff" stroke-width="0.3">6</text>
</g>
<g transform="translate(1472.80,239.80) scale(1.0,1)">
<text x="0.00" y="0.00" font-family='"Liberation Serif", serif' font-size="22" fill="#0000ff" font-weight="normal" text-anchor="middle" style="white-space:pre" stroke="#0000ff" stroke-width="0.3">8</text>
</g>
<g transform="translate(1496.40,239.80) scale(0.72,1)">
<text x="0.00" y="0.00" font-family='"Liberation Serif", serif' font-size="22" fill="#0000ff" font-weight="normal" text-anchor="middle" style="white-space:pre" stroke="#0000ff" stroke-width="0.3">m</text>
</g>
<g transform="translate(1508.50,239.80) scale(0.72,1)">
<text x="0.00" y="0.00" font-family='"Liberation Serif", serif' font-size="22" fill="#0000ff" font-weight="normal" text-anchor="middle" style="white-space:pre" stroke="#0000ff" stroke-width="0.3">V</text>
</g>
<rect x="1520.20" y="77.80" width="120.80" height="252.50" fill="#9a9a9a" />
<rect x="1520.80" y="78.40" width="119.60" height="251.30" fill="#f0f0f0" />
<rect x="1520.80" y="78.40" width="119.60" height="13.50" fill="#ffffff" />
<rect x="1521.50" y="80.50" width="7.00" height="7.00" fill="#ffe000" />
<path d="M1521.5 82 l1.17 -1 l1.17 1 l1.17 -1 l1.17 1 l1.17 -1 l1.17 1" stroke="#ff2020" stroke-width="0.8" fill="none"/><path d="M1521.5 84.3 l1.17 -1 l1.17 1 l1.17 -1 l1.17 1 l1.17 -1 l1.17 1" stroke="#20c020" stroke-width="1.3" fill="none"/><path d="M1521.5 86.5 l1.17 -1 l1.17 1 l1.17 -1 l1.17 1 l1.17 -1 l1.17 1" stroke="#2040ff" stroke-width="0.8" fill="none"/>
<text x="1532.50" y="86.70" font-family='"Liberation Sans", sans-serif' font-size="6" fill="#a0a0a0" font-weight="normal" text-anchor="start" style="white-space:pre" >Signal Gener...</text>
<line x1="1582.00" y1="84.50" x2="1587.00" y2="84.50" stroke="#999" stroke-width="0.6"/>
<rect x="1604.5" y="82" width="4.5" height="4.5" fill="none" stroke="#ddd" stroke-width="0.5"/>
<path d="M1628 82 l4.5 4.5 M1632.5 82 l-4.5 4.5" stroke="#999" stroke-width="0.6"/>
<rect x="1523.50" y="94.50" width="5.50" height="5.50" fill="#888" />
<rect x="1524.20" y="95.20" width="4.10" height="4.10" fill="#fff" />
<path d="M1524.50 97.30 l1.3 1.5 l2.3 -3" stroke="#111" stroke-width="0.8" fill="none"/>
<text x="1532.00" y="99.50" font-family='"Liberation Sans", sans-serif' font-size="5.8" fill="#222" font-weight="normal" text-anchor="start" style="white-space:pre" >Show Editor</text>
<rect x="1564.00" y="93.00" width="61.70" height="9.50" fill="#a0a0a0" />
<rect x="1565.00" y="94.00" width="60.20" height="8.00" fill="#ffffff" />
<rect x="1617.20" y="94.00" width="8.00" height="8.00" fill="#e6e6e6" />
<rect x="1617.20" y="101.30" width="8.00" height="0.70" fill="#6a6a6a" />
<path d="M1619.20 96.75 h4 l-2 2.2 z" fill="#000"/>
<text x="1566.00" y="100.20" font-family='"Liberation Sans", sans-serif' font-size="5.8" fill="#000" font-weight="normal" text-anchor="start" style="white-space:pre" >No Loopback</text>
<rect x="1628.50" y="92.50" width="11.00" height="10.00" fill="#a0a0a0" />
<rect x="1629.00" y="93.00" width="10.00" height="9.00" fill="#f4f4f4" />
<path d="M1631.5 95 l5 2.8 l-5 2.8 z" fill="#e00000"/>
<text x="1522.00" y="111.50" font-family='"Liberation Sans", sans-serif' font-size="5.4" fill="#a8a8a8" font-weight="normal" text-anchor="start" style="white-space:pre" >Start OSC after (s)</text>
<rect x="1568.00" y="104.50" width="33.00" height="9.00" fill="#b0b0b0" />
<rect x="1568.80" y="105.30" width="31.50" height="7.50" fill="#f4f4f4" />
<text x="1570.00" y="111.50" font-family='"Liberation Sans", sans-serif' font-size="5.6" fill="#aaa" font-weight="normal" text-anchor="start" style="white-space:pre" >0</text>
<rect x="1604.00" y="105.50" width="5.50" height="5.50" fill="#bbb" />
<rect x="1604.70" y="106.20" width="4.10" height="4.10" fill="#f4f4f4" />
<text x="1612.00" y="111.50" font-family='"Liberation Sans", sans-serif' font-size="5.4" fill="#a8a8a8" font-weight="normal" text-anchor="start" style="white-space:pre" >Echo Only</text>
<rect x="1523.5" y="122" width="98" height="16" fill="none" stroke="#c8c8c8" stroke-width="0.7"/>
<rect x="1526.00" y="118.00" width="50.00" height="6.00" fill="#f0f0f0" />
<text x="1526.50" y="123.20" font-family='"Liberation Sans", sans-serif' font-size="5.6" fill="#222" font-weight="normal" text-anchor="start" style="white-space:pre" >Sampling Parameters</text>
<rect x="1524.70" y="127.00" width="49.00" height="9.00" fill="#a0a0a0" />
<rect x="1525.70" y="128.00" width="47.50" height="7.50" fill="#ffffff" />
<rect x="1565.20" y="128.00" width="8.00" height="7.50" fill="#e6e6e6" />
<rect x="1565.20" y="134.80" width="8.00" height="0.70" fill="#6a6a6a" />
<path d="M1567.20 130.50 h4 l-2 2.2 z" fill="#000"/>
<text x="1526.70" y="133.70" font-family='"Liberation Sans", sans-serif' font-size="5.6" fill="#000" font-weight="normal" text-anchor="start" style="white-space:pre" >48kHz</text>
<rect x="1575.00" y="127.00" width="21.00" height="9.00" fill="#a0a0a0" />
<rect x="1576.00" y="128.00" width="19.50" height="7.50" fill="#ffffff" />
<rect x="1587.50" y="128.00" width="8.00" height="7.50" fill="#e6e6e6" />
<rect x="1587.50" y="134.80" width="8.00" height="0.70" fill="#6a6a6a" />
<path d="M1589.50 130.50 h4 l-2 2.2 z" fill="#000"/>
<text x="1577.00" y="133.70" font-family='"Liberation Sans", sans-serif' font-size="5.6" fill="#000" font-weight="normal" text-anchor="start" style="white-space:pre" >A</text>
<rect x="1598.50" y="127.00" width="24.50" height="9.00" fill="#a0a0a0" />
<rect x="1599.50" y="128.00" width="23.00" height="7.50" fill="#ffffff" />
<rect x="1614.50" y="128.00" width="8.00" height="7.50" fill="#e6e6e6" />
<rect x="1614.50" y="134.80" width="8.00" height="0.70" fill="#6a6a6a" />
<path d="M1616.50 130.50 h4 l-2 2.2 z" fill="#000"/>
<text x="1600.50" y="133.70" font-family='"Liberation Sans", sans-serif' font-size="5.6" fill="#000" font-weight="normal" text-anchor="start" style="white-space:pre" >16Bit</text>
<rect x="1629.00" y="121.00" width="10.00" height="9.00" fill="#f8f8f8" />
<rect x="1631.00" y="122.50" width="6.00" height="6.00" fill="#222" />
<rect x="1632.20" y="123.00" width="3.60" height="2.00" fill="#ddd" />
<rect x="1629.00" y="132.00" width="10.00" height="9.00" fill="#f8f8f8" />
<path d="M1631 134 h6 M1631 136.5 h6 M1631 139 h6" stroke="#888" stroke-width="0.6"/>
<rect x="1526.00" y="146.50" width="41.40" height="9.50" fill="#a0a0a0" />
<rect x="1527.00" y="147.50" width="39.90" height="8.00" fill="#ffffff" />
<rect x="1558.90" y="147.50" width="8.00" height="8.00" fill="#e6e6e6" />
<rect x="1558.90" y="154.80" width="8.00" height="0.70" fill="#6a6a6a" />
<path d="M1560.90 150.25 h4 l-2 2.2 z" fill="#000"/>
<text x="1528.00" y="153.70" font-family='"Liberation Sans", sans-serif' font-size="5.6" fill="#000" font-weight="normal" text-anchor="start" style="white-space:pre" >PinkNoise</text>
<rect x="1574.00" y="145.50" width="11.60" height="11.00" fill="#c4c4c4" />
<rect x="1574.50" y="146.00" width="10.60" height="10.00" fill="#f4f4f4" />
<text x="1579.80" y="153.50" font-family='"Liberation Sans", sans-serif' font-size="5" fill="#aaa" font-weight="normal" text-anchor="middle" style="white-space:pre" >...</text>
<rect x="1592.00" y="146.50" width="43.00" height="9.50" fill="#a0a0a0" />
<rect x="1593.00" y="147.50" width="41.50" height="8.00" fill="#f4f4f4" />
<rect x="1626.50" y="147.50" width="8.00" height="8.00" fill="#e6e6e6" />
<rect x="1626.50" y="154.80" width="8.00" height="0.70" fill="#6a6a6a" />
<path d="M1628.50 150.25 h4 l-2 2.2 z" fill="#9a9a9a"/>
<text x="1594.00" y="153.70" font-family='"Liberation Sans", sans-serif' font-size="5.6" fill="#9a9a9a" font-weight="normal" text-anchor="start" style="white-space:pre" >Sine</text>
<line x1="1525.80" y1="178.00" x2="1525.80" y2="242.00" stroke="#a0a0a0" stroke-width="0.8"/>
<line x1="1527.50" y1="178.00" x2="1527.50" y2="242.00" stroke="#fff" stroke-width="0.6"/>
<line x1="1532.30" y1="178.00" x2="1532.30" y2="242.00" stroke="#a0a0a0" stroke-width="0.8"/>
<line x1="1534.00" y1="178.00" x2="1534.00" y2="242.00" stroke="#fff" stroke-width="0.6"/>
<line x1="1630.00" y1="178.00" x2="1630.00" y2="242.00" stroke="#a0a0a0" stroke-width="0.8"/>
<line x1="1636.50" y1="178.00" x2="1636.50" y2="242.00" stroke="#a0a0a0" stroke-width="0.8"/>
<text x="1580.00" y="179.50" font-family='"Liberation Sans", sans-serif' font-size="5.6" fill="#222" font-weight="normal" text-anchor="middle" style="white-space:pre" >Output Frequency (Hz)</text>
<rect x="1538.00" y="183.50" width="43.00" height="9.50" fill="#a0a0a0" />
<rect x="1539.00" y="184.50" width="41.50" height="8.00" fill="#f4f4f4" />
<rect x="1572.50" y="184.50" width="8.00" height="8.00" fill="#e6e6e6" />
<rect x="1572.50" y="191.80" width="8.00" height="0.70" fill="#6a6a6a" />
<path d="M1574.50 187.25 h4 l-2 2.2 z" fill="#9a9a9a"/>
<text x="1540.00" y="190.70" font-family='"Liberation Sans", sans-serif' font-size="5.6" fill="#9a9a9a" font-weight="normal" text-anchor="start" style="white-space:pre" >1000</text>
<rect x="1582.00" y="183.50" width="43.00" height="9.50" fill="#a0a0a0" />
<rect x="1583.00" y="184.50" width="41.50" height="8.00" fill="#f4f4f4" />
<rect x="1616.50" y="184.50" width="8.00" height="8.00" fill="#e6e6e6" />
<rect x="1616.50" y="191.80" width="8.00" height="0.70" fill="#6a6a6a" />
<path d="M1618.50 187.25 h4 l-2 2.2 z" fill="#9a9a9a"/>
<text x="1584.00" y="190.70" font-family='"Liberation Sans", sans-serif' font-size="5.6" fill="#9a9a9a" font-weight="normal" text-anchor="start" style="white-space:pre" >1000</text>
<text x="1580.00" y="204.00" font-family='"Liberation Sans", sans-serif' font-size="5.6" fill="#222" font-weight="normal" text-anchor="middle" style="white-space:pre" >Output Amplitude (V)</text>
<rect x="1538.00" y="208.50" width="43.00" height="9.50" fill="#a0a0a0" />
<rect x="1539.00" y="209.50" width="41.50" height="8.00" fill="#ffffff" />
<rect x="1572.50" y="209.50" width="8.00" height="8.00" fill="#e6e6e6" />
<rect x="1572.50" y="216.80" width="8.00" height="0.70" fill="#6a6a6a" />
<path d="M1574.50 212.25 h4 l-2 2.2 z" fill="#000"/>
<text x="1540.00" y="215.70" font-family='"Liberation Sans", sans-serif' font-size="5.6" fill="#000" font-weight="normal" text-anchor="start" style="white-space:pre" >1</text>
<rect x="1582.00" y="208.50" width="43.00" height="9.50" fill="#a0a0a0" />
<rect x="1583.00" y="209.50" width="41.50" height="8.00" fill="#f4f4f4" />
<rect x="1616.50" y="209.50" width="8.00" height="8.00" fill="#e6e6e6" />
<rect x="1616.50" y="216.80" width="8.00" height="0.70" fill="#6a6a6a" />
<path d="M1618.50 212.25 h4 l-2 2.2 z" fill="#9a9a9a"/>
<text x="1584.00" y="215.70" font-family='"Liberation Sans", sans-serif' font-size="5.6" fill="#9a9a9a" font-weight="normal" text-anchor="start" style="white-space:pre" >1</text>
<text x="1580.00" y="229.00" font-family='"Liberation Sans", sans-serif' font-size="5.4" fill="#b0b0b0" font-weight="normal" text-anchor="middle" style="white-space:pre" >Output Phase Difference (Degree)</text>
<rect x="1562.00" y="234.50" width="36.00" height="9.50" fill="#a0a0a0" />
<rect x="1563.00" y="235.50" width="34.50" height="8.00" fill="#f4f4f4" />
<rect x="1589.50" y="235.50" width="8.00" height="8.00" fill="#e6e6e6" />
<rect x="1589.50" y="242.80" width="8.00" height="0.70" fill="#6a6a6a" />
<path d="M1591.50 238.25 h4 l-2 2.2 z" fill="#9a9a9a"/>
<text x="1564.00" y="241.70" font-family='"Liberation Sans", sans-serif' font-size="5.6" fill="#9a9a9a" font-weight="normal" text-anchor="start" style="white-space:pre" >0</text>
<text x="1522.00" y="251.80" font-family='"Liberation Sans", sans-serif' font-size="5.6" fill="#222" font-weight="normal" text-anchor="start" style="white-space:pre" >0.0dBFS</text>
<line x1="1549.50" y1="250.00" x2="1609.50" y2="250.00" stroke="#a0a0a0" stroke-width="0.8"/>
<rect x="1579.50" y="247.50" width="1.50" height="5.00" fill="#555" />
<text x="1640.00" y="251.80" font-family='"Liberation Sans", sans-serif' font-size="5.6" fill="#b0b0b0" font-weight="normal" text-anchor="end" style="white-space:pre" >0.0dBFS</text>
<rect x="1522.5" y="256" width="117" height="28" fill="none" stroke="#d8d8d8" stroke-width="0.7"/>
<rect x="1527.00" y="259.50" width="5.50" height="5.50" fill="#888" />
<rect x="1527.70" y="260.20" width="4.10" height="4.10" fill="#fff" />
<text x="1535.00" y="265.00" font-family='"Liberation Sans", sans-serif' font-size="5.8" fill="#222" font-weight="normal" text-anchor="start" style="white-space:pre" >Mask</text>
<text x="1575.00" y="265.00" font-family='"Liberation Sans", sans-serif' font-size="5.4" fill="#b0b0b0" font-weight="normal" text-anchor="middle" style="white-space:pre" >On (s)</text>
<text x="1612.00" y="265.00" font-family='"Liberation Sans", sans-serif' font-size="5.4" fill="#b0b0b0" font-weight="normal" text-anchor="middle" style="white-space:pre" >Off (s)</text>
<rect x="1527.00" y="269.50" width="5.50" height="5.50" fill="#bbb" />
<rect x="1527.70" y="270.20" width="4.10" height="4.10" fill="#f4f4f4" />
<path d="M1528.00 272.30 l1.3 1.5 l2.3 -3" stroke="#999" stroke-width="0.8" fill="none"/>
<text x="1535.00" y="275.00" font-family='"Liberation Sans", sans-serif' font-size="5.8" fill="#b0b0b0" font-weight="normal" text-anchor="start" style="white-space:pre" >Phase Lock</text>
<rect x="1568.00" y="267.50" width="32.00" height="9.00" fill="#b0b0b0" />
<rect x="1568.80" y="268.30" width="30.50" height="7.50" fill="#f4f4f4" />
<text x="1570.00" y="274.50" font-family='"Liberation Sans", sans-serif' font-size="5.6" fill="#aaa" font-weight="normal" text-anchor="start" style="white-space:pre" >1</text>
<rect x="1604.00" y="267.50" width="32.00" height="9.00" fill="#b0b0b0" />
<rect x="1604.80" y="268.30" width="30.50" height="7.50" fill="#f4f4f4" />
<text x="1606.00" y="274.50" font-family='"Liberation Sans", sans-serif' font-size="5.6" fill="#aaa" font-weight="normal" text-anchor="start" style="white-space:pre" >0</text>
<rect x="1522.5" y="286" width="117" height="24" fill="none" stroke="#d8d8d8" stroke-width="0.7"/>
<rect x="1525.50" y="290.50" width="5.50" height="5.50" fill="#888" />
<rect x="1526.20" y="291.20" width="4.10" height="4.10" fill="#fff" />
<text x="1534.00" y="296.50" font-family='"Liberation Sans", sans-serif' font-size="5.8" fill="#222" font-weight="normal" text-anchor="start" style="white-space:pre" >Fade</text>
<text x="1577.00" y="291.00" font-family='"Liberation Sans", sans-serif' font-size="5.4" fill="#b0b0b0" font-weight="normal" text-anchor="middle" style="white-space:pre" >In (s)</text>
<text x="1613.00" y="291.00" font-family='"Liberation Sans", sans-serif' font-size="5.4" fill="#b0b0b0" font-weight="normal" text-anchor="middle" style="white-space:pre" >Out (s)</text>
<rect x="1568.00" y="292.50" width="32.00" height="9.00" fill="#b0b0b0" />
<rect x="1568.80" y="293.30" width="30.50" height="7.50" fill="#f4f4f4" />
<text x="1570.00" y="299.50" font-family='"Liberation Sans", sans-serif' font-size="5.6" fill="#999" font-weight="normal" text-anchor="start" style="white-space:pre" >0.01</text>
<rect x="1604.00" y="292.50" width="32.00" height="9.00" fill="#b0b0b0" />
<rect x="1604.80" y="293.30" width="30.50" height="7.50" fill="#f4f4f4" />
<text x="1606.00" y="299.50" font-family='"Liberation Sans", sans-serif' font-size="5.6" fill="#999" font-weight="normal" text-anchor="start" style="white-space:pre" >0.01</text>
<text x="1521.50" y="314.50" font-family='"Liberation Sans", sans-serif' font-size="5.4" fill="#222" font-weight="normal" text-anchor="start" style="white-space:pre" >Duration (s)</text>
<rect x="1553.00" y="307.50" width="32.00" height="9.00" fill="#b0b0b0" />
<rect x="1553.80" y="308.30" width="30.50" height="7.50" fill="#f4f4f4" />
<text x="1556.00" y="314.50" font-family='"Liberation Sans", sans-serif' font-size="5.6" fill="#aaa" font-weight="normal" text-anchor="start" style="white-space:pre" >1</text>
<rect x="1590.00" y="309.00" width="5.50" height="5.50" fill="#888" />
<rect x="1590.70" y="309.70" width="4.10" height="4.10" fill="#fff" />
<path d="M1591.00 311.80 l1.3 1.5 l2.3 -3" stroke="#111" stroke-width="0.8" fill="none"/>
<text x="1598.50" y="314.80" font-family='"Liberation Sans", sans-serif' font-size="5.8" fill="#222" font-weight="normal" text-anchor="start" style="white-space:pre" >Loop</text>
<rect x="1617.50" y="309.00" width="5.50" height="5.50" fill="#bbb" />
<rect x="1618.20" y="309.70" width="4.10" height="4.10" fill="#f4f4f4" />
<text x="1625.50" y="314.80" font-family='"Liberation Sans", sans-serif' font-size="5.4" fill="#b0b0b0" font-weight="normal" text-anchor="start" style="white-space:pre" >DDS</text>
<rect x="1522.50" y="322.00" width="5.50" height="5.50" fill="#888" />
<rect x="1523.20" y="322.70" width="4.10" height="4.10" fill="#fff" />
<text x="1531.00" y="327.30" font-family='"Liberation Sans", sans-serif' font-size="5.8" fill="#222" font-weight="normal" text-anchor="start" style="white-space:pre" >Sweep</text>
<circle cx="1563" cy="324.5" r="2.3" fill="#f4f4f4" stroke="#aaa" stroke-width="0.5"/><circle cx="1563" cy="324.5" r="0.9" fill="#999"/>
<text x="1568.00" y="327.30" font-family='"Liberation Sans", sans-serif' font-size="5.4" fill="#b0b0b0" font-weight="normal" text-anchor="start" style="white-space:pre" >Frequency</text>
<circle cx="1600" cy="324.5" r="2.3" fill="#f4f4f4" stroke="#aaa" stroke-width="0.5"/>
<text x="1605.00" y="327.30" font-family='"Liberation Sans", sans-serif' font-size="5.4" fill="#b0b0b0" font-weight="normal" text-anchor="start" style="white-space:pre" >Amplitude</text>
<rect x="984.50" y="56.20" width="40.50" height="9.20" fill="#767676" />
<rect x="985.20" y="56.90" width="39.10" height="7.80" fill="#ffffe1" />
<text x="986.30" y="63.30" font-family='"Liberation Sans", sans-serif' font-size="5.8" fill="#111" font-weight="normal" text-anchor="start" style="white-space:pre" >Default Setting</text>
</svg></body></html>
